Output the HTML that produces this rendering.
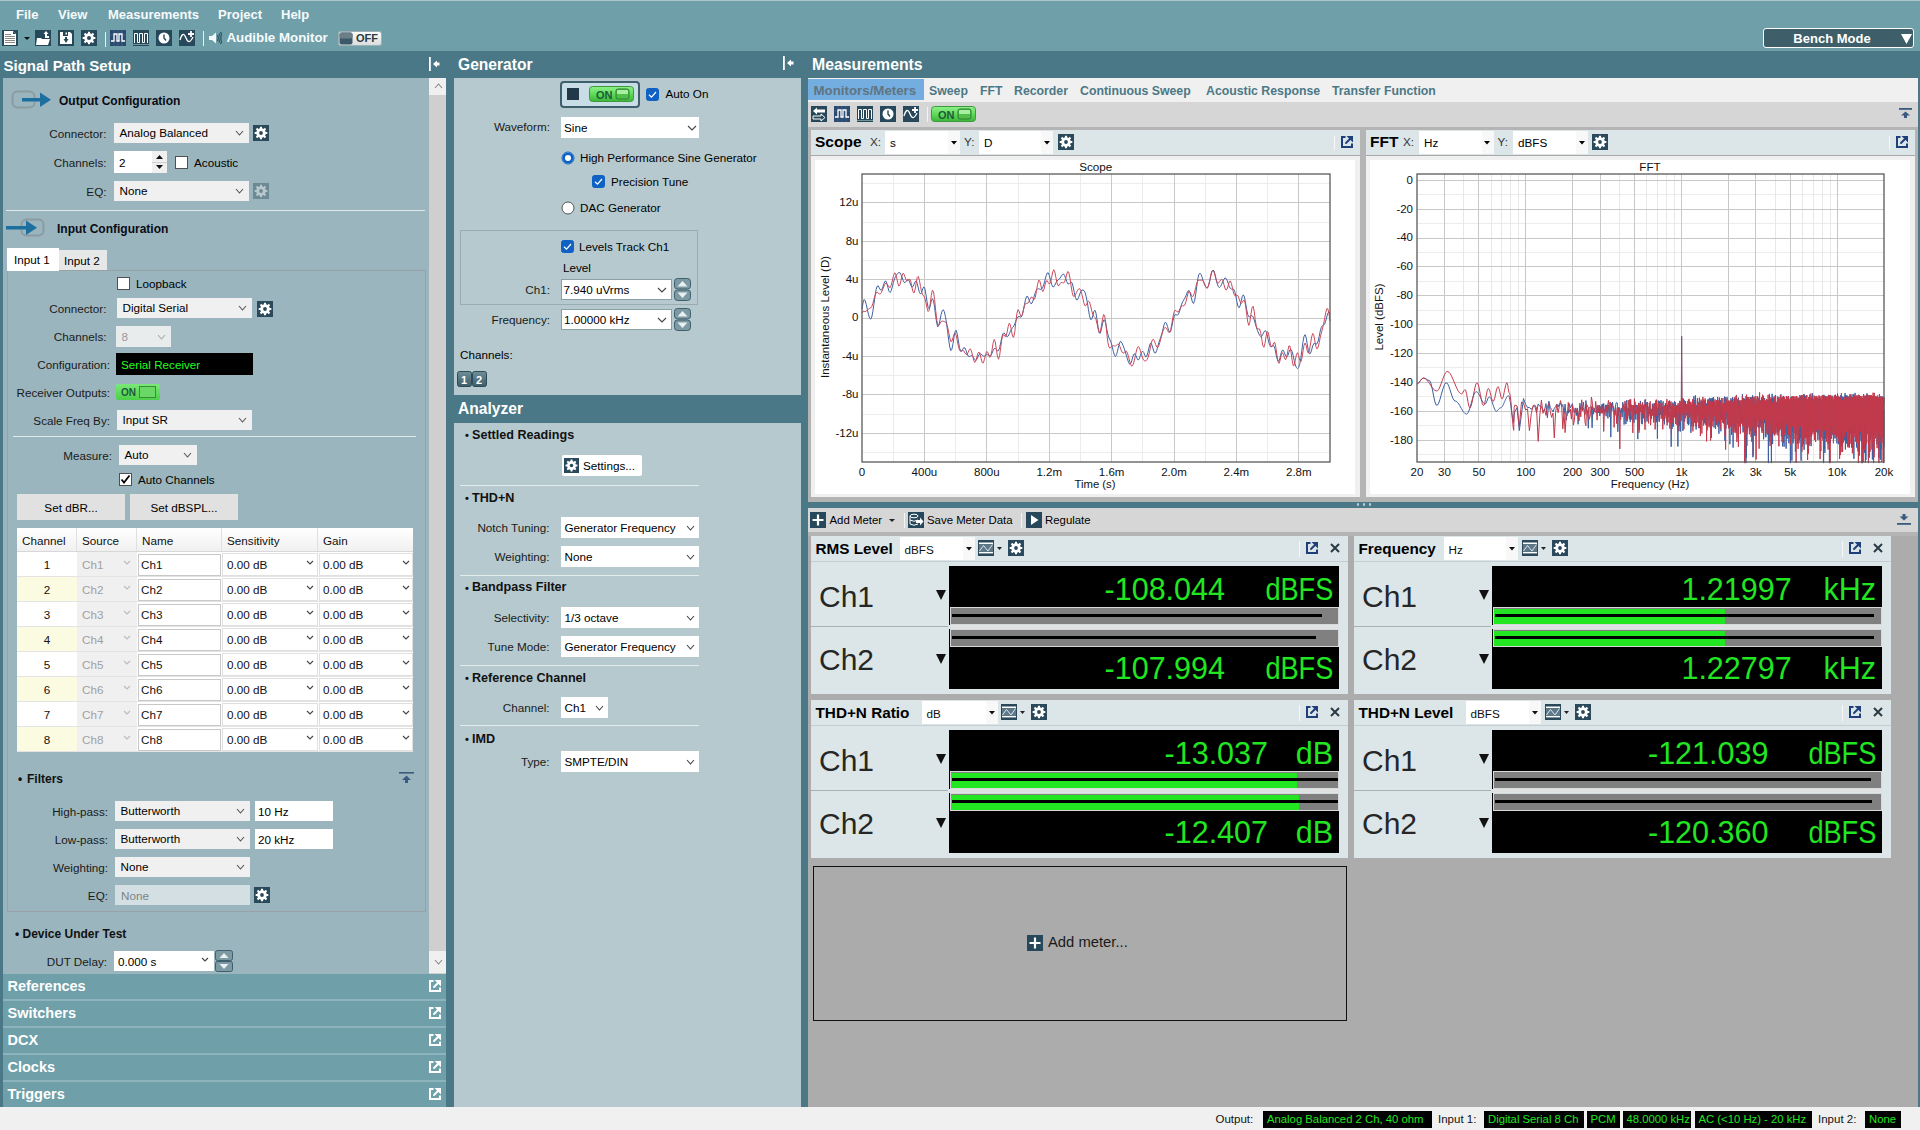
<!DOCTYPE html>
<html><head><meta charset="utf-8"><style>
html,body{margin:0;padding:0;}
body{width:1920px;height:1130px;overflow:hidden;position:relative;background:#f0f0f0;font-family:"Liberation Sans",sans-serif;}
body>div{position:absolute;}
</style></head><body>
<div style="left:0px;top:0px;width:1920px;height:51px;background:#6fa0aa;"></div><div style="left:0px;top:0px;width:1920px;height:1px;background:#a9c6cc;"></div><div style="left:16px;top:7.99px;font-size:13px;line-height:13px;font-weight:700;color:#f7fafb;white-space:pre;">File</div><div style="left:58px;top:7.99px;font-size:13px;line-height:13px;font-weight:700;color:#f7fafb;white-space:pre;">View</div><div style="left:108px;top:7.99px;font-size:13px;line-height:13px;font-weight:700;color:#f7fafb;white-space:pre;">Measurements</div><div style="left:218px;top:7.99px;font-size:13px;line-height:13px;font-weight:700;color:#f7fafb;white-space:pre;">Project</div><div style="left:281px;top:7.99px;font-size:13px;line-height:13px;font-weight:700;color:#f7fafb;white-space:pre;">Help</div><svg style="position:absolute;left:2px;top:30px;" width="16" height="16" viewBox="0 0 16 16"><rect width="16" height="16" fill="#26485a"/><path d="M2,1 H11 L14,4 V15 H2 Z" fill="#fff"/><path d="M11,1 V4 H14" fill="#26485a"/><path d="M3,4.5 H9 M3,6.5 H13 M3,8.5 H13 M3,10.5 H13 M3,12.5 H13" stroke="#8a8a8a" stroke-width="1"/></svg><svg style="position:absolute;left:24px;top:37px;" width="6" height="3" viewBox="0 0 6 3"><polygon points="0,0 6,0 3.0,3" fill="#111"/></svg><svg style="position:absolute;left:35px;top:30px;" width="16" height="16" viewBox="0 0 16 16"><rect width="16" height="16" fill="#26485a"/><path d="M1,15 L2,8 H6 L7,9 H15 L13,15 Z" fill="#fff"/><path d="M11,1 L8.5,4 H10 V8 H12 V4 H13.5 Z" fill="#fff"/><rect x="12" y="6" width="2" height="2" fill="#fff"/></svg><svg style="position:absolute;left:58px;top:30px;" width="16" height="16" viewBox="0 0 16 16"><rect width="16" height="16" fill="#26485a"/><path d="M2,2 H12 L14,4 V14 H2 Z" fill="#fff"/><rect x="5" y="2" width="5" height="4" fill="#26485a"/><rect x="7.5" y="2.5" width="1.5" height="2" fill="#fff"/><path d="M5.5,9 H10.5 L8,13 Z" fill="#26485a"/><rect x="7" y="7" width="2" height="3" fill="#26485a"/></svg><svg style="position:absolute;left:81px;top:30px;" width="16" height="16" viewBox="0 0 16 16"><rect width="16" height="16" fill="#26485a"/><path d="M12.67,6.88 L14.33,7.05 L14.33,8.95 L12.67,9.12 L12.09,10.51 L13.15,11.80 L11.80,13.15 L10.51,12.09 L9.12,12.67 L8.95,14.33 L7.05,14.33 L6.88,12.67 L5.49,12.09 L4.20,13.15 L2.85,11.80 L3.91,10.51 L3.33,9.12 L1.67,8.95 L1.67,7.05 L3.33,6.88 L3.91,5.49 L2.85,4.20 L4.20,2.85 L5.49,3.91 L6.88,3.33 L7.05,1.67 L8.95,1.67 L9.12,3.33 L10.51,3.91 L11.80,2.85 L13.15,4.20 L12.09,5.49Z" fill="#fff"/><circle cx="8" cy="8" r="2" fill="#26485a"/></svg><div style="left:105px;top:32px;width:1px;height:15px;background:#e8f0f2;"></div><svg style="position:absolute;left:110px;top:30px;" width="16" height="16" viewBox="0 0 16 16"><rect width="16" height="16" fill="#2a4a70"/><path d="M4,0 V16 M8,0 V16 M12,0 V16 M0,5 H16 M0,11 H16" stroke="#4a6a90" stroke-width="0.6"/><polyline points="1,11 4,11 4,4 7,4 7,11 9,11 9,4 12,4 12,11 15,11" fill="none" stroke="#fff" stroke-width="1.3"/></svg><svg style="position:absolute;left:133px;top:30px;" width="16" height="16" viewBox="0 0 16 16"><rect width="16" height="16" fill="#26485a"/><path d="M1.5,13 V3.5 H4.5 V12.5 H6.5 V3.5 H9.5 V12.5 H11.5 V3.5 H14.5 V13" fill="none" stroke="#fff" stroke-width="1"/><path d="M0,14.5 H16" stroke="#8aa" stroke-width="0.8"/></svg><svg style="position:absolute;left:156px;top:30px;" width="16" height="16" viewBox="0 0 16 16"><rect width="16" height="16" fill="#26485a"/><circle cx="8" cy="8" r="5.5" fill="#fff"/><path d="M8,4.5 V8 L10,10.5" fill="none" stroke="#26485a" stroke-width="1.4"/></svg><svg style="position:absolute;left:179px;top:30px;" width="16" height="16" viewBox="0 0 16 16"><rect width="16" height="16" fill="#26485a"/><path d="M1,10 C3,3 5,3 7,8 C9,13 11,13 14,7" fill="none" stroke="#fff" stroke-width="1.3"/><path d="M12,1 V7 M9,4 H15" stroke="#fff" stroke-width="1.8"/></svg><div style="left:203px;top:31px;width:1px;height:15px;background:#e8f0f2;"></div><svg style="position:absolute;left:208px;top:31px;" width="14" height="14" viewBox="0 0 14 14"><path d="M1,5 H4 L8,1.5 V12.5 L4,9 H1 Z" fill="#f4f8f8"/><path d="M9.5,4 Q11,7 9.5,10 M11,2.5 Q13.5,7 11,11.5 M12.5,1 Q16,7 12.5,13" fill="none" stroke="#2e4f5c" stroke-width="1.2"/></svg><div style="left:226.5px;top:31.43px;font-size:13.3px;line-height:13.3px;font-weight:700;color:#f7fafb;white-space:pre;">Audible Monitor</div><svg style="position:absolute;left:338px;top:31px;" width="44" height="15" viewBox="0 0 44 15"><defs><linearGradient id="offg" x1="0" y1="0" x2="0" y2="1"><stop offset="0" stop-color="#fdfdfd"/><stop offset="1" stop-color="#d8dcdc"/></linearGradient></defs><rect x="0.5" y="0.5" width="43" height="14" rx="2.5" fill="url(#offg)" stroke="#9fb0b4"/><rect x="1.5" y="1.5" width="13" height="12" rx="2" fill="#3a5a6c"/><rect x="1.5" y="1.5" width="13" height="6" rx="2" fill="#6b7f88"/></svg><div style="left:356px;top:33.18px;font-size:11px;line-height:11px;font-weight:700;color:#2a3a40;white-space:pre;">OFF</div><div style="left:1763px;top:28px;width:151px;height:20px;background:#3e5f69;box-sizing:border-box;border:1px solid #fff;border-radius:3px;"></div><div style="left:832px;width:2000px;text-align:center;top:31.99px;font-size:13px;line-height:13px;font-weight:700;color:#fff;white-space:pre;">Bench Mode</div><svg style="position:absolute;left:1900.5px;top:34px;" width="11" height="10" viewBox="0 0 11 10"><polygon points="0,0 11,0 5.5,10" fill="#fff"/></svg><div style="left:0px;top:51px;width:1920px;height:27px;background:#4b7886;"></div><div style="left:3.5px;top:58.30px;font-size:15px;line-height:15px;font-weight:700;color:#fff;white-space:pre;">Signal Path Setup</div><div style="left:458px;top:56.79px;font-size:15.6px;line-height:15.6px;font-weight:700;color:#fff;white-space:pre;">Generator</div><div style="left:812px;top:56.62px;font-size:15.8px;line-height:15.8px;font-weight:700;color:#fff;white-space:pre;">Measurements</div><svg style="position:absolute;left:429px;top:57px;" width="11" height="14" viewBox="0 0 11 14"><rect x="0" y="0" width="1.8" height="14" fill="#fff"/><polygon points="4,7 8,3.5 8,5.5 10.5,5.5 10.5,8.5 8,8.5 8,10.5" fill="#fff"/></svg><svg style="position:absolute;left:783px;top:56px;" width="11" height="14" viewBox="0 0 11 14"><rect x="0" y="0" width="1.8" height="14" fill="#fff"/><polygon points="4,7 8,3.5 8,5.5 10.5,5.5 10.5,8.5 8,8.5 8,10.5" fill="#fff"/></svg><div style="left:0px;top:78px;width:3px;height:1029px;background:#4b7886;"></div><div style="left:3px;top:78px;width:426px;height:896px;background:#9ab5bd;"></div><div style="left:446px;top:51px;width:8px;height:1056px;background:#4b7886;"></div><div style="left:429px;top:78px;width:17px;height:896px;background:#cfcfcf;"></div><div style="left:429px;top:78px;width:17px;height:17px;background:#f0f0f0;"></div><div style="left:429px;top:951px;width:17px;height:22px;background:#f0f0f0;"></div><svg style="position:absolute;left:434px;top:83px;" width="9" height="6" viewBox="0 0 9 6"><polyline points="1,5 4.5,1 8,5" fill="none" stroke="#888" stroke-width="1.1"/></svg><svg style="position:absolute;left:434px;top:959px;" width="9" height="6" viewBox="0 0 9 6"><polyline points="1,1 4.5,5 8,1" fill="none" stroke="#888" stroke-width="1.1"/></svg><div style="left:3px;top:974px;width:443px;height:25px;background:#6fa0aa;"></div><div style="left:7.5px;top:979.22px;font-size:14.5px;line-height:14.5px;font-weight:700;color:#fff;white-space:pre;">References</div><svg style="position:absolute;left:429px;top:980px;" width="12" height="12" viewBox="0 0 12 12"><path d="M4.5,1 H1 V11 H11 V7.5" fill="none" stroke="#fff" stroke-width="2"/><path d="M5,7 L9,3" stroke="#fff" stroke-width="1.9" stroke-linecap="round"/><polygon points="5.5,0 12,0 12,6.5" fill="#fff"/></svg><div style="left:3px;top:1001px;width:443px;height:25px;background:#6fa0aa;"></div><div style="left:3px;top:999px;width:443px;height:2px;background:#8db4bc;"></div><div style="left:7.5px;top:1006.22px;font-size:14.5px;line-height:14.5px;font-weight:700;color:#fff;white-space:pre;">Switchers</div><svg style="position:absolute;left:429px;top:1007px;" width="12" height="12" viewBox="0 0 12 12"><path d="M4.5,1 H1 V11 H11 V7.5" fill="none" stroke="#fff" stroke-width="2"/><path d="M5,7 L9,3" stroke="#fff" stroke-width="1.9" stroke-linecap="round"/><polygon points="5.5,0 12,0 12,6.5" fill="#fff"/></svg><div style="left:3px;top:1028px;width:443px;height:25px;background:#6fa0aa;"></div><div style="left:3px;top:1026px;width:443px;height:2px;background:#8db4bc;"></div><div style="left:7.5px;top:1033.22px;font-size:14.5px;line-height:14.5px;font-weight:700;color:#fff;white-space:pre;">DCX</div><svg style="position:absolute;left:429px;top:1034px;" width="12" height="12" viewBox="0 0 12 12"><path d="M4.5,1 H1 V11 H11 V7.5" fill="none" stroke="#fff" stroke-width="2"/><path d="M5,7 L9,3" stroke="#fff" stroke-width="1.9" stroke-linecap="round"/><polygon points="5.5,0 12,0 12,6.5" fill="#fff"/></svg><div style="left:3px;top:1055px;width:443px;height:25px;background:#6fa0aa;"></div><div style="left:3px;top:1053px;width:443px;height:2px;background:#8db4bc;"></div><div style="left:7.5px;top:1060.22px;font-size:14.5px;line-height:14.5px;font-weight:700;color:#fff;white-space:pre;">Clocks</div><svg style="position:absolute;left:429px;top:1061px;" width="12" height="12" viewBox="0 0 12 12"><path d="M4.5,1 H1 V11 H11 V7.5" fill="none" stroke="#fff" stroke-width="2"/><path d="M5,7 L9,3" stroke="#fff" stroke-width="1.9" stroke-linecap="round"/><polygon points="5.5,0 12,0 12,6.5" fill="#fff"/></svg><div style="left:3px;top:1082px;width:443px;height:25px;background:#6fa0aa;"></div><div style="left:3px;top:1080px;width:443px;height:2px;background:#8db4bc;"></div><div style="left:7.5px;top:1087.22px;font-size:14.5px;line-height:14.5px;font-weight:700;color:#fff;white-space:pre;">Triggers</div><svg style="position:absolute;left:429px;top:1088px;" width="12" height="12" viewBox="0 0 12 12"><path d="M4.5,1 H1 V11 H11 V7.5" fill="none" stroke="#fff" stroke-width="2"/><path d="M5,7 L9,3" stroke="#fff" stroke-width="1.9" stroke-linecap="round"/><polygon points="5.5,0 12,0 12,6.5" fill="#fff"/></svg><div style="left:454px;top:78px;width:347px;height:317px;background:#b5c9ce;"></div><div style="left:454px;top:395px;width:347px;height:28px;background:#4b7886;"></div><div style="left:458px;top:401.49px;font-size:15.6px;line-height:15.6px;font-weight:700;color:#fff;white-space:pre;">Analyzer</div><div style="left:454px;top:423px;width:347px;height:684px;background:#b5c9ce;"></div><div style="left:801px;top:51px;width:7px;height:1056px;background:#4b7886;"></div><div style="left:1918px;top:51px;width:2px;height:1056px;background:#4b7886;"></div><div style="left:0px;top:1107px;width:1920px;height:23px;background:#f0f0f0;"></div><svg style="position:absolute;left:11px;top:90px;" width="41" height="19" viewBox="0 0 41 19"><rect x="1.5" y="1.5" width="22" height="16" rx="5" fill="none" stroke="#8a9ca2" stroke-width="2"/><rect x="11" y="8" width="20" height="3.5" fill="#1d6fa0"/><polygon points="29,2.5 40,9.75 29,17" fill="#1d6fa0"/></svg><div style="left:59px;top:94.84px;font-size:12px;line-height:12px;font-weight:700;color:#0a0a14;white-space:pre;">Output Configuration</div><div style="left:-893.5px;width:1000px;text-align:right;top:127.59px;font-size:11.7px;line-height:11.7px;font-weight:400;color:#1a1a1a;white-space:pre;">Connector:</div><div style="left:114px;top:123px;width:135px;height:20px;background:#f0f0f0;"></div><div style="left:119.5px;top:127.39px;font-size:11.7px;line-height:11.7px;font-weight:400;color:#000;white-space:pre;">Analog Balanced</div><svg style="position:absolute;left:235px;top:130.0px;" width="9" height="6" viewBox="0 0 9 6"><polyline points="1,1 4.5,5 8,1" fill="none" stroke="#555" stroke-width="1.1"/></svg><svg style="position:absolute;left:253px;top:125px;" width="16" height="16" viewBox="0 0 16 16"><rect width="16" height="16" fill="#2a4a5c"/><path d="M12.67,6.88 L14.33,7.05 L14.33,8.95 L12.67,9.12 L12.09,10.51 L13.15,11.80 L11.80,13.15 L10.51,12.09 L9.12,12.67 L8.95,14.33 L7.05,14.33 L6.88,12.67 L5.49,12.09 L4.20,13.15 L2.85,11.80 L3.91,10.51 L3.33,9.12 L1.67,8.95 L1.67,7.05 L3.33,6.88 L3.91,5.49 L2.85,4.20 L4.20,2.85 L5.49,3.91 L6.88,3.33 L7.05,1.67 L8.95,1.67 L9.12,3.33 L10.51,3.91 L11.80,2.85 L13.15,4.20 L12.09,5.49Z" fill="#fff"/><circle cx="8" cy="8" r="1.9" fill="#2a4a5c"/></svg><div style="left:-893.5px;width:1000px;text-align:right;top:156.59px;font-size:11.7px;line-height:11.7px;font-weight:400;color:#1a1a1a;white-space:pre;">Channels:</div><div style="left:114px;top:151px;width:38px;height:22px;background:#fff;"></div><div style="left:119px;top:156.59px;font-size:11.7px;line-height:11.7px;font-weight:400;color:#000;white-space:pre;">2</div><div style="left:152px;top:151px;width:15px;height:22px;background:#f0f0f0;"></div><div style="left:152px;top:161.5px;width:15px;height:1px;background:#d0d0d0;"></div><svg style="position:absolute;left:156px;top:155px;" width="7" height="4" viewBox="0 0 7 4"><polygon points="0,4 7,4 3.5,0" fill="#111"/></svg><svg style="position:absolute;left:156px;top:165px;" width="7" height="4" viewBox="0 0 7 4"><polygon points="0,0 7,0 3.5,4" fill="#111"/></svg><svg style="position:absolute;left:175px;top:156px;" width="13" height="13" viewBox="0 0 13 13"><rect x="0.5" y="0.5" width="12" height="12" fill="#fff" stroke="#505050" stroke-width="1"/></svg><div style="left:194px;top:156.59px;font-size:11.7px;line-height:11.7px;font-weight:400;color:#000;white-space:pre;">Acoustic</div><div style="left:-893.5px;width:1000px;text-align:right;top:185.59px;font-size:11.7px;line-height:11.7px;font-weight:400;color:#1a1a1a;white-space:pre;">EQ:</div><div style="left:114px;top:181px;width:135px;height:20px;background:#f0f0f0;"></div><div style="left:119.5px;top:185.39px;font-size:11.7px;line-height:11.7px;font-weight:400;color:#000;white-space:pre;">None</div><svg style="position:absolute;left:235px;top:188.0px;" width="9" height="6" viewBox="0 0 9 6"><polyline points="1,1 4.5,5 8,1" fill="none" stroke="#555" stroke-width="1.1"/></svg><svg style="position:absolute;left:253px;top:183px;" width="16" height="16" viewBox="0 0 16 16"><rect width="16" height="16" fill="#6b8a94"/><path d="M12.67,6.88 L14.33,7.05 L14.33,8.95 L12.67,9.12 L12.09,10.51 L13.15,11.80 L11.80,13.15 L10.51,12.09 L9.12,12.67 L8.95,14.33 L7.05,14.33 L6.88,12.67 L5.49,12.09 L4.20,13.15 L2.85,11.80 L3.91,10.51 L3.33,9.12 L1.67,8.95 L1.67,7.05 L3.33,6.88 L3.91,5.49 L2.85,4.20 L4.20,2.85 L5.49,3.91 L6.88,3.33 L7.05,1.67 L8.95,1.67 L9.12,3.33 L10.51,3.91 L11.80,2.85 L13.15,4.20 L12.09,5.49Z" fill="#b8c8cc"/><circle cx="8" cy="8" r="1.9" fill="#6b8a94"/></svg><div style="left:6px;top:210px;width:419px;height:1px;background:#dfe8ea;"></div><svg style="position:absolute;left:6px;top:218px;" width="40" height="19" viewBox="0 0 40 19"><rect x="15.5" y="1.5" width="22" height="16" rx="5" fill="none" stroke="#8a9ca2" stroke-width="2"/><rect x="0" y="8" width="22" height="3.5" fill="#1d6fa0"/><polygon points="20,2.5 31,9.75 20,17" fill="#1d6fa0"/></svg><div style="left:57px;top:222.84px;font-size:12px;line-height:12px;font-weight:700;color:#0a0a14;white-space:pre;">Input Configuration</div><div style="left:7px;top:269.5px;width:418.5px;height:642.5px;box-sizing:border-box;border:1.5px solid #98a2a6;"></div><div style="left:7px;top:248px;width:52px;height:23px;background:#fff;"></div><div style="left:14px;top:254.09px;font-size:11.7px;line-height:11.7px;font-weight:400;color:#000;white-space:pre;">Input 1</div><div style="left:59px;top:250px;width:48px;height:20px;background:#e6e8e8;"></div><div style="left:64px;top:254.59px;font-size:11.7px;line-height:11.7px;font-weight:400;color:#000;white-space:pre;">Input 2</div><svg style="position:absolute;left:117px;top:277px;" width="13" height="13" viewBox="0 0 13 13"><rect x="0.5" y="0.5" width="12" height="12" fill="#fff" stroke="#505050" stroke-width="1"/></svg><div style="left:136px;top:278.09px;font-size:11.7px;line-height:11.7px;font-weight:400;color:#000;white-space:pre;">Loopback</div><div style="left:-893.5px;width:1000px;text-align:right;top:302.59px;font-size:11.7px;line-height:11.7px;font-weight:400;color:#1a1a1a;white-space:pre;">Connector:</div><div style="left:117px;top:298px;width:135px;height:20px;background:#f0f0f0;"></div><div style="left:122.5px;top:302.39px;font-size:11.7px;line-height:11.7px;font-weight:400;color:#000;white-space:pre;">Digital Serial</div><svg style="position:absolute;left:238px;top:305.0px;" width="9" height="6" viewBox="0 0 9 6"><polyline points="1,1 4.5,5 8,1" fill="none" stroke="#555" stroke-width="1.1"/></svg><svg style="position:absolute;left:257px;top:301px;" width="16" height="16" viewBox="0 0 16 16"><rect width="16" height="16" fill="#2a4a5c"/><path d="M12.67,6.88 L14.33,7.05 L14.33,8.95 L12.67,9.12 L12.09,10.51 L13.15,11.80 L11.80,13.15 L10.51,12.09 L9.12,12.67 L8.95,14.33 L7.05,14.33 L6.88,12.67 L5.49,12.09 L4.20,13.15 L2.85,11.80 L3.91,10.51 L3.33,9.12 L1.67,8.95 L1.67,7.05 L3.33,6.88 L3.91,5.49 L2.85,4.20 L4.20,2.85 L5.49,3.91 L6.88,3.33 L7.05,1.67 L8.95,1.67 L9.12,3.33 L10.51,3.91 L11.80,2.85 L13.15,4.20 L12.09,5.49Z" fill="#fff"/><circle cx="8" cy="8" r="1.9" fill="#2a4a5c"/></svg><div style="left:-893.5px;width:1000px;text-align:right;top:330.59px;font-size:11.7px;line-height:11.7px;font-weight:400;color:#1a1a1a;white-space:pre;">Channels:</div><div style="left:116px;top:326px;width:55px;height:21px;background:#e9ecec;"></div><div style="left:121.5px;top:330.89px;font-size:11.7px;line-height:11.7px;font-weight:400;color:#999;white-space:pre;">8</div><svg style="position:absolute;left:157px;top:333.5px;" width="9" height="6" viewBox="0 0 9 6"><polyline points="1,1 4.5,5 8,1" fill="none" stroke="#aaa" stroke-width="1.1"/></svg><div style="left:-890px;width:1000px;text-align:right;top:358.59px;font-size:11.7px;line-height:11.7px;font-weight:400;color:#1a1a1a;white-space:pre;">Configuration:</div><div style="left:116px;top:353px;width:137px;height:22px;background:#000;"></div><div style="left:121px;top:358.59px;font-size:11.7px;line-height:11.7px;font-weight:400;color:#20ff20;white-space:pre;">Serial Receiver</div><div style="left:-890px;width:1000px;text-align:right;top:386.59px;font-size:11.7px;line-height:11.7px;font-weight:400;color:#1a1a1a;white-space:pre;">Receiver Outputs:</div><svg style="position:absolute;left:116px;top:384px;" width="44" height="16" viewBox="0 0 44 16"><defs><linearGradient id="rog" x1="0" y1="0" x2="0" y2="1"><stop offset="0" stop-color="#7ae878"/><stop offset="1" stop-color="#4ccf48"/></linearGradient></defs><rect width="44" height="16" rx="2" fill="url(#rog)"/><rect x="23.5" y="2.5" width="16" height="11" fill="#6ad866" stroke="#3a8a3a"/></svg><div style="left:121px;top:387.53px;font-size:10px;line-height:10px;font-weight:700;color:#1e5a3a;white-space:pre;">ON</div><div style="left:-890px;width:1000px;text-align:right;top:414.59px;font-size:11.7px;line-height:11.7px;font-weight:400;color:#1a1a1a;white-space:pre;">Scale Freq By:</div><div style="left:117px;top:410px;width:135px;height:20px;background:#f0f0f0;"></div><div style="left:122.5px;top:414.39px;font-size:11.7px;line-height:11.7px;font-weight:400;color:#000;white-space:pre;">Input SR</div><svg style="position:absolute;left:238px;top:417.0px;" width="9" height="6" viewBox="0 0 9 6"><polyline points="1,1 4.5,5 8,1" fill="none" stroke="#555" stroke-width="1.1"/></svg><div style="left:13px;top:436px;width:403px;height:1px;background:#dfe8ea;"></div><div style="left:-888px;width:1000px;text-align:right;top:449.59px;font-size:11.7px;line-height:11.7px;font-weight:400;color:#1a1a1a;white-space:pre;">Measure:</div><div style="left:119px;top:445px;width:78px;height:20px;background:#f0f0f0;"></div><div style="left:124.5px;top:449.39px;font-size:11.7px;line-height:11.7px;font-weight:400;color:#000;white-space:pre;">Auto</div><svg style="position:absolute;left:183px;top:452.0px;" width="9" height="6" viewBox="0 0 9 6"><polyline points="1,1 4.5,5 8,1" fill="none" stroke="#555" stroke-width="1.1"/></svg><svg style="position:absolute;left:119px;top:473px;" width="13" height="13" viewBox="0 0 13 13"><rect x="0.5" y="0.5" width="12" height="12" fill="#fff" stroke="#505050" stroke-width="1"/><polyline points="2.5,6.5 5,9.5 10.5,2.5" fill="none" stroke="#000" stroke-width="1.8"/></svg><div style="left:138px;top:474.09px;font-size:11.7px;line-height:11.7px;font-weight:400;color:#000;white-space:pre;">Auto Channels</div><div style="left:17px;top:494px;width:108px;height:26px;background:#e1e1e1;"></div><div style="left:-929px;width:2000px;text-align:center;top:501.59px;font-size:11.7px;line-height:11.7px;font-weight:400;color:#000;white-space:pre;">Set dBR...</div><div style="left:130px;top:494px;width:108px;height:26px;background:#e1e1e1;"></div><div style="left:-816px;width:2000px;text-align:center;top:501.59px;font-size:11.7px;line-height:11.7px;font-weight:400;color:#000;white-space:pre;">Set dBSPL...</div><div style="left:17px;top:528px;width:396px;height:224px;background:#fff;"></div><div style="left:17px;top:528px;width:396px;height:23px;background:linear-gradient(#ffffff,#f0f0f0);"></div><div style="left:22px;top:534.59px;font-size:11.7px;line-height:11.7px;font-weight:400;color:#111;white-space:pre;">Channel</div><div style="left:82px;top:534.59px;font-size:11.7px;line-height:11.7px;font-weight:400;color:#111;white-space:pre;">Source</div><div style="left:76px;top:528px;width:1px;height:23px;background:#e0e0e0;"></div><div style="left:142px;top:534.59px;font-size:11.7px;line-height:11.7px;font-weight:400;color:#111;white-space:pre;">Name</div><div style="left:136px;top:528px;width:1px;height:23px;background:#e0e0e0;"></div><div style="left:227px;top:534.59px;font-size:11.7px;line-height:11.7px;font-weight:400;color:#111;white-space:pre;">Sensitivity</div><div style="left:221px;top:528px;width:1px;height:23px;background:#e0e0e0;"></div><div style="left:323px;top:534.59px;font-size:11.7px;line-height:11.7px;font-weight:400;color:#111;white-space:pre;">Gain</div><div style="left:317px;top:528px;width:1px;height:23px;background:#e0e0e0;"></div><div style="left:17px;top:551px;width:396px;height:1px;background:#d8d8d8;"></div><div style="left:17px;top:552px;width:60px;height:24px;background:#fff;"></div><div style="left:-953px;width:2000px;text-align:center;top:559.09px;font-size:11.7px;line-height:11.7px;font-weight:400;color:#111;white-space:pre;">1</div><div style="left:77px;top:552px;width:60px;height:24px;background:#f0f0f0;"></div><div style="left:82px;top:559.09px;font-size:11.7px;line-height:11.7px;font-weight:400;color:#a0a0a0;white-space:pre;">Ch1</div><svg style="position:absolute;left:123px;top:560px;" width="8" height="5" viewBox="0 0 8 5"><polyline points="1,1 4.0,4 7,1" fill="none" stroke="#bbb" stroke-width="1.1"/></svg><div style="left:138px;top:554px;width:83px;height:22px;background:#fff;box-sizing:border-box;border:1px solid #c8c8c8;"></div><div style="left:141px;top:559.09px;font-size:11.7px;line-height:11.7px;font-weight:400;color:#111;white-space:pre;">Ch1</div><div style="left:222px;top:553px;width:96px;height:23px;background:#fff;box-sizing:border-box;border:1px solid #e0e0e0;"></div><div style="left:227px;top:559.09px;font-size:11.7px;line-height:11.7px;font-weight:400;color:#111;white-space:pre;">0.00 dB</div><svg style="position:absolute;left:306px;top:560px;" width="8" height="5" viewBox="0 0 8 5"><polyline points="1,1 4.0,4 7,1" fill="none" stroke="#444" stroke-width="1.1"/></svg><div style="left:319px;top:553px;width:94px;height:23px;background:#fff;box-sizing:border-box;border:1px solid #e0e0e0;"></div><div style="left:323px;top:559.09px;font-size:11.7px;line-height:11.7px;font-weight:400;color:#111;white-space:pre;">0.00 dB</div><svg style="position:absolute;left:402px;top:560px;" width="8" height="5" viewBox="0 0 8 5"><polyline points="1,1 4.0,4 7,1" fill="none" stroke="#444" stroke-width="1.1"/></svg><div style="left:17px;top:576px;width:396px;height:1px;background:#e4e4e4;"></div><div style="left:17px;top:577px;width:60px;height:24px;background:#fbfbe2;"></div><div style="left:-953px;width:2000px;text-align:center;top:584.09px;font-size:11.7px;line-height:11.7px;font-weight:400;color:#111;white-space:pre;">2</div><div style="left:77px;top:577px;width:60px;height:24px;background:#f0f0f0;"></div><div style="left:82px;top:584.09px;font-size:11.7px;line-height:11.7px;font-weight:400;color:#a0a0a0;white-space:pre;">Ch2</div><svg style="position:absolute;left:123px;top:585px;" width="8" height="5" viewBox="0 0 8 5"><polyline points="1,1 4.0,4 7,1" fill="none" stroke="#bbb" stroke-width="1.1"/></svg><div style="left:138px;top:579px;width:83px;height:22px;background:#fff;box-sizing:border-box;border:1px solid #c8c8c8;"></div><div style="left:141px;top:584.09px;font-size:11.7px;line-height:11.7px;font-weight:400;color:#111;white-space:pre;">Ch2</div><div style="left:222px;top:578px;width:96px;height:23px;background:#fff;box-sizing:border-box;border:1px solid #e0e0e0;"></div><div style="left:227px;top:584.09px;font-size:11.7px;line-height:11.7px;font-weight:400;color:#111;white-space:pre;">0.00 dB</div><svg style="position:absolute;left:306px;top:585px;" width="8" height="5" viewBox="0 0 8 5"><polyline points="1,1 4.0,4 7,1" fill="none" stroke="#444" stroke-width="1.1"/></svg><div style="left:319px;top:578px;width:94px;height:23px;background:#fff;box-sizing:border-box;border:1px solid #e0e0e0;"></div><div style="left:323px;top:584.09px;font-size:11.7px;line-height:11.7px;font-weight:400;color:#111;white-space:pre;">0.00 dB</div><svg style="position:absolute;left:402px;top:585px;" width="8" height="5" viewBox="0 0 8 5"><polyline points="1,1 4.0,4 7,1" fill="none" stroke="#444" stroke-width="1.1"/></svg><div style="left:17px;top:601px;width:396px;height:1px;background:#e4e4e4;"></div><div style="left:17px;top:602px;width:60px;height:24px;background:#fff;"></div><div style="left:-953px;width:2000px;text-align:center;top:609.09px;font-size:11.7px;line-height:11.7px;font-weight:400;color:#111;white-space:pre;">3</div><div style="left:77px;top:602px;width:60px;height:24px;background:#f0f0f0;"></div><div style="left:82px;top:609.09px;font-size:11.7px;line-height:11.7px;font-weight:400;color:#a0a0a0;white-space:pre;">Ch3</div><svg style="position:absolute;left:123px;top:610px;" width="8" height="5" viewBox="0 0 8 5"><polyline points="1,1 4.0,4 7,1" fill="none" stroke="#bbb" stroke-width="1.1"/></svg><div style="left:138px;top:604px;width:83px;height:22px;background:#fff;box-sizing:border-box;border:1px solid #c8c8c8;"></div><div style="left:141px;top:609.09px;font-size:11.7px;line-height:11.7px;font-weight:400;color:#111;white-space:pre;">Ch3</div><div style="left:222px;top:603px;width:96px;height:23px;background:#fff;box-sizing:border-box;border:1px solid #e0e0e0;"></div><div style="left:227px;top:609.09px;font-size:11.7px;line-height:11.7px;font-weight:400;color:#111;white-space:pre;">0.00 dB</div><svg style="position:absolute;left:306px;top:610px;" width="8" height="5" viewBox="0 0 8 5"><polyline points="1,1 4.0,4 7,1" fill="none" stroke="#444" stroke-width="1.1"/></svg><div style="left:319px;top:603px;width:94px;height:23px;background:#fff;box-sizing:border-box;border:1px solid #e0e0e0;"></div><div style="left:323px;top:609.09px;font-size:11.7px;line-height:11.7px;font-weight:400;color:#111;white-space:pre;">0.00 dB</div><svg style="position:absolute;left:402px;top:610px;" width="8" height="5" viewBox="0 0 8 5"><polyline points="1,1 4.0,4 7,1" fill="none" stroke="#444" stroke-width="1.1"/></svg><div style="left:17px;top:626px;width:396px;height:1px;background:#e4e4e4;"></div><div style="left:17px;top:627px;width:60px;height:24px;background:#fbfbe2;"></div><div style="left:-953px;width:2000px;text-align:center;top:634.09px;font-size:11.7px;line-height:11.7px;font-weight:400;color:#111;white-space:pre;">4</div><div style="left:77px;top:627px;width:60px;height:24px;background:#f0f0f0;"></div><div style="left:82px;top:634.09px;font-size:11.7px;line-height:11.7px;font-weight:400;color:#a0a0a0;white-space:pre;">Ch4</div><svg style="position:absolute;left:123px;top:635px;" width="8" height="5" viewBox="0 0 8 5"><polyline points="1,1 4.0,4 7,1" fill="none" stroke="#bbb" stroke-width="1.1"/></svg><div style="left:138px;top:629px;width:83px;height:22px;background:#fff;box-sizing:border-box;border:1px solid #c8c8c8;"></div><div style="left:141px;top:634.09px;font-size:11.7px;line-height:11.7px;font-weight:400;color:#111;white-space:pre;">Ch4</div><div style="left:222px;top:628px;width:96px;height:23px;background:#fff;box-sizing:border-box;border:1px solid #e0e0e0;"></div><div style="left:227px;top:634.09px;font-size:11.7px;line-height:11.7px;font-weight:400;color:#111;white-space:pre;">0.00 dB</div><svg style="position:absolute;left:306px;top:635px;" width="8" height="5" viewBox="0 0 8 5"><polyline points="1,1 4.0,4 7,1" fill="none" stroke="#444" stroke-width="1.1"/></svg><div style="left:319px;top:628px;width:94px;height:23px;background:#fff;box-sizing:border-box;border:1px solid #e0e0e0;"></div><div style="left:323px;top:634.09px;font-size:11.7px;line-height:11.7px;font-weight:400;color:#111;white-space:pre;">0.00 dB</div><svg style="position:absolute;left:402px;top:635px;" width="8" height="5" viewBox="0 0 8 5"><polyline points="1,1 4.0,4 7,1" fill="none" stroke="#444" stroke-width="1.1"/></svg><div style="left:17px;top:651px;width:396px;height:1px;background:#e4e4e4;"></div><div style="left:17px;top:652px;width:60px;height:24px;background:#fff;"></div><div style="left:-953px;width:2000px;text-align:center;top:659.09px;font-size:11.7px;line-height:11.7px;font-weight:400;color:#111;white-space:pre;">5</div><div style="left:77px;top:652px;width:60px;height:24px;background:#f0f0f0;"></div><div style="left:82px;top:659.09px;font-size:11.7px;line-height:11.7px;font-weight:400;color:#a0a0a0;white-space:pre;">Ch5</div><svg style="position:absolute;left:123px;top:660px;" width="8" height="5" viewBox="0 0 8 5"><polyline points="1,1 4.0,4 7,1" fill="none" stroke="#bbb" stroke-width="1.1"/></svg><div style="left:138px;top:654px;width:83px;height:22px;background:#fff;box-sizing:border-box;border:1px solid #c8c8c8;"></div><div style="left:141px;top:659.09px;font-size:11.7px;line-height:11.7px;font-weight:400;color:#111;white-space:pre;">Ch5</div><div style="left:222px;top:653px;width:96px;height:23px;background:#fff;box-sizing:border-box;border:1px solid #e0e0e0;"></div><div style="left:227px;top:659.09px;font-size:11.7px;line-height:11.7px;font-weight:400;color:#111;white-space:pre;">0.00 dB</div><svg style="position:absolute;left:306px;top:660px;" width="8" height="5" viewBox="0 0 8 5"><polyline points="1,1 4.0,4 7,1" fill="none" stroke="#444" stroke-width="1.1"/></svg><div style="left:319px;top:653px;width:94px;height:23px;background:#fff;box-sizing:border-box;border:1px solid #e0e0e0;"></div><div style="left:323px;top:659.09px;font-size:11.7px;line-height:11.7px;font-weight:400;color:#111;white-space:pre;">0.00 dB</div><svg style="position:absolute;left:402px;top:660px;" width="8" height="5" viewBox="0 0 8 5"><polyline points="1,1 4.0,4 7,1" fill="none" stroke="#444" stroke-width="1.1"/></svg><div style="left:17px;top:676px;width:396px;height:1px;background:#e4e4e4;"></div><div style="left:17px;top:677px;width:60px;height:24px;background:#fbfbe2;"></div><div style="left:-953px;width:2000px;text-align:center;top:684.09px;font-size:11.7px;line-height:11.7px;font-weight:400;color:#111;white-space:pre;">6</div><div style="left:77px;top:677px;width:60px;height:24px;background:#f0f0f0;"></div><div style="left:82px;top:684.09px;font-size:11.7px;line-height:11.7px;font-weight:400;color:#a0a0a0;white-space:pre;">Ch6</div><svg style="position:absolute;left:123px;top:685px;" width="8" height="5" viewBox="0 0 8 5"><polyline points="1,1 4.0,4 7,1" fill="none" stroke="#bbb" stroke-width="1.1"/></svg><div style="left:138px;top:679px;width:83px;height:22px;background:#fff;box-sizing:border-box;border:1px solid #c8c8c8;"></div><div style="left:141px;top:684.09px;font-size:11.7px;line-height:11.7px;font-weight:400;color:#111;white-space:pre;">Ch6</div><div style="left:222px;top:678px;width:96px;height:23px;background:#fff;box-sizing:border-box;border:1px solid #e0e0e0;"></div><div style="left:227px;top:684.09px;font-size:11.7px;line-height:11.7px;font-weight:400;color:#111;white-space:pre;">0.00 dB</div><svg style="position:absolute;left:306px;top:685px;" width="8" height="5" viewBox="0 0 8 5"><polyline points="1,1 4.0,4 7,1" fill="none" stroke="#444" stroke-width="1.1"/></svg><div style="left:319px;top:678px;width:94px;height:23px;background:#fff;box-sizing:border-box;border:1px solid #e0e0e0;"></div><div style="left:323px;top:684.09px;font-size:11.7px;line-height:11.7px;font-weight:400;color:#111;white-space:pre;">0.00 dB</div><svg style="position:absolute;left:402px;top:685px;" width="8" height="5" viewBox="0 0 8 5"><polyline points="1,1 4.0,4 7,1" fill="none" stroke="#444" stroke-width="1.1"/></svg><div style="left:17px;top:701px;width:396px;height:1px;background:#e4e4e4;"></div><div style="left:17px;top:702px;width:60px;height:24px;background:#fff;"></div><div style="left:-953px;width:2000px;text-align:center;top:709.09px;font-size:11.7px;line-height:11.7px;font-weight:400;color:#111;white-space:pre;">7</div><div style="left:77px;top:702px;width:60px;height:24px;background:#f0f0f0;"></div><div style="left:82px;top:709.09px;font-size:11.7px;line-height:11.7px;font-weight:400;color:#a0a0a0;white-space:pre;">Ch7</div><svg style="position:absolute;left:123px;top:710px;" width="8" height="5" viewBox="0 0 8 5"><polyline points="1,1 4.0,4 7,1" fill="none" stroke="#bbb" stroke-width="1.1"/></svg><div style="left:138px;top:704px;width:83px;height:22px;background:#fff;box-sizing:border-box;border:1px solid #c8c8c8;"></div><div style="left:141px;top:709.09px;font-size:11.7px;line-height:11.7px;font-weight:400;color:#111;white-space:pre;">Ch7</div><div style="left:222px;top:703px;width:96px;height:23px;background:#fff;box-sizing:border-box;border:1px solid #e0e0e0;"></div><div style="left:227px;top:709.09px;font-size:11.7px;line-height:11.7px;font-weight:400;color:#111;white-space:pre;">0.00 dB</div><svg style="position:absolute;left:306px;top:710px;" width="8" height="5" viewBox="0 0 8 5"><polyline points="1,1 4.0,4 7,1" fill="none" stroke="#444" stroke-width="1.1"/></svg><div style="left:319px;top:703px;width:94px;height:23px;background:#fff;box-sizing:border-box;border:1px solid #e0e0e0;"></div><div style="left:323px;top:709.09px;font-size:11.7px;line-height:11.7px;font-weight:400;color:#111;white-space:pre;">0.00 dB</div><svg style="position:absolute;left:402px;top:710px;" width="8" height="5" viewBox="0 0 8 5"><polyline points="1,1 4.0,4 7,1" fill="none" stroke="#444" stroke-width="1.1"/></svg><div style="left:17px;top:726px;width:396px;height:1px;background:#e4e4e4;"></div><div style="left:17px;top:727px;width:60px;height:24px;background:#fbfbe2;"></div><div style="left:-953px;width:2000px;text-align:center;top:734.09px;font-size:11.7px;line-height:11.7px;font-weight:400;color:#111;white-space:pre;">8</div><div style="left:77px;top:727px;width:60px;height:24px;background:#f0f0f0;"></div><div style="left:82px;top:734.09px;font-size:11.7px;line-height:11.7px;font-weight:400;color:#a0a0a0;white-space:pre;">Ch8</div><svg style="position:absolute;left:123px;top:735px;" width="8" height="5" viewBox="0 0 8 5"><polyline points="1,1 4.0,4 7,1" fill="none" stroke="#bbb" stroke-width="1.1"/></svg><div style="left:138px;top:729px;width:83px;height:22px;background:#fff;box-sizing:border-box;border:1px solid #c8c8c8;"></div><div style="left:141px;top:734.09px;font-size:11.7px;line-height:11.7px;font-weight:400;color:#111;white-space:pre;">Ch8</div><div style="left:222px;top:728px;width:96px;height:23px;background:#fff;box-sizing:border-box;border:1px solid #e0e0e0;"></div><div style="left:227px;top:734.09px;font-size:11.7px;line-height:11.7px;font-weight:400;color:#111;white-space:pre;">0.00 dB</div><svg style="position:absolute;left:306px;top:735px;" width="8" height="5" viewBox="0 0 8 5"><polyline points="1,1 4.0,4 7,1" fill="none" stroke="#444" stroke-width="1.1"/></svg><div style="left:319px;top:728px;width:94px;height:23px;background:#fff;box-sizing:border-box;border:1px solid #e0e0e0;"></div><div style="left:323px;top:734.09px;font-size:11.7px;line-height:11.7px;font-weight:400;color:#111;white-space:pre;">0.00 dB</div><svg style="position:absolute;left:402px;top:735px;" width="8" height="5" viewBox="0 0 8 5"><polyline points="1,1 4.0,4 7,1" fill="none" stroke="#444" stroke-width="1.1"/></svg><div style="left:17px;top:751px;width:396px;height:1px;background:#e4e4e4;"></div><div style="left:18px;top:772.84px;font-size:12px;line-height:12px;font-weight:700;color:#111;white-space:pre;">•</div><div style="left:27px;top:773.34px;font-size:12px;line-height:12px;font-weight:700;color:#111;white-space:pre;">Filters</div><svg style="position:absolute;left:399px;top:772px;" width="15" height="12" viewBox="0 0 15 12"><rect x="0" y="0" width="15" height="1.6" fill="#3a5a80"/><polygon points="7.5,3.5 12,8 9,8 9,11 6,11 6,8 3,8" fill="#3a5a80"/></svg><div style="left:-892px;width:1000px;text-align:right;top:805.59px;font-size:11.7px;line-height:11.7px;font-weight:400;color:#1a1a1a;white-space:pre;">High-pass:</div><div style="left:115px;top:801px;width:135px;height:20px;background:#f0f0f0;"></div><div style="left:120.5px;top:805.39px;font-size:11.7px;line-height:11.7px;font-weight:400;color:#000;white-space:pre;">Butterworth</div><svg style="position:absolute;left:236px;top:808.0px;" width="9" height="6" viewBox="0 0 9 6"><polyline points="1,1 4.5,5 8,1" fill="none" stroke="#555" stroke-width="1.1"/></svg><div style="left:255px;top:801px;width:78px;height:20px;background:#fff;"></div><div style="left:258px;top:805.59px;font-size:11.7px;line-height:11.7px;font-weight:400;color:#000;white-space:pre;">10 Hz</div><div style="left:-892px;width:1000px;text-align:right;top:833.59px;font-size:11.7px;line-height:11.7px;font-weight:400;color:#1a1a1a;white-space:pre;">Low-pass:</div><div style="left:115px;top:829px;width:135px;height:20px;background:#f0f0f0;"></div><div style="left:120.5px;top:833.39px;font-size:11.7px;line-height:11.7px;font-weight:400;color:#000;white-space:pre;">Butterworth</div><svg style="position:absolute;left:236px;top:836.0px;" width="9" height="6" viewBox="0 0 9 6"><polyline points="1,1 4.5,5 8,1" fill="none" stroke="#555" stroke-width="1.1"/></svg><div style="left:255px;top:829px;width:78px;height:20px;background:#fff;"></div><div style="left:258px;top:833.59px;font-size:11.7px;line-height:11.7px;font-weight:400;color:#000;white-space:pre;">20 kHz</div><div style="left:-892px;width:1000px;text-align:right;top:861.59px;font-size:11.7px;line-height:11.7px;font-weight:400;color:#1a1a1a;white-space:pre;">Weighting:</div><div style="left:115px;top:857px;width:135px;height:20px;background:#f0f0f0;"></div><div style="left:120.5px;top:861.39px;font-size:11.7px;line-height:11.7px;font-weight:400;color:#000;white-space:pre;">None</div><svg style="position:absolute;left:236px;top:864.0px;" width="9" height="6" viewBox="0 0 9 6"><polyline points="1,1 4.5,5 8,1" fill="none" stroke="#555" stroke-width="1.1"/></svg><div style="left:-892px;width:1000px;text-align:right;top:889.59px;font-size:11.7px;line-height:11.7px;font-weight:400;color:#1a1a1a;white-space:pre;">EQ:</div><div style="left:115px;top:885px;width:135px;height:20px;background:#d3dfe3;"></div><div style="left:121px;top:889.59px;font-size:11.7px;line-height:11.7px;font-weight:400;color:#7a8488;white-space:pre;">None</div><svg style="position:absolute;left:254px;top:887px;" width="16" height="16" viewBox="0 0 16 16"><rect width="16" height="16" fill="#2a4a5c"/><path d="M12.67,6.88 L14.33,7.05 L14.33,8.95 L12.67,9.12 L12.09,10.51 L13.15,11.80 L11.80,13.15 L10.51,12.09 L9.12,12.67 L8.95,14.33 L7.05,14.33 L6.88,12.67 L5.49,12.09 L4.20,13.15 L2.85,11.80 L3.91,10.51 L3.33,9.12 L1.67,8.95 L1.67,7.05 L3.33,6.88 L3.91,5.49 L2.85,4.20 L4.20,2.85 L5.49,3.91 L6.88,3.33 L7.05,1.67 L8.95,1.67 L9.12,3.33 L10.51,3.91 L11.80,2.85 L13.15,4.20 L12.09,5.49Z" fill="#fff"/><circle cx="8" cy="8" r="1.9" fill="#2a4a5c"/></svg><div style="left:15px;top:927.84px;font-size:12px;line-height:12px;font-weight:700;color:#111;white-space:pre;">•</div><div style="left:22.5px;top:928.24px;font-size:12px;line-height:12px;font-weight:700;color:#111;white-space:pre;">Device Under Test</div><div style="left:-893px;width:1000px;text-align:right;top:955.59px;font-size:11.7px;line-height:11.7px;font-weight:400;color:#1a1a1a;white-space:pre;">DUT Delay:</div><div style="left:114px;top:951px;width:100px;height:20px;background:#fff;"></div><div style="left:118px;top:955.59px;font-size:11.7px;line-height:11.7px;font-weight:400;color:#000;white-space:pre;">0.000 s</div><svg style="position:absolute;left:201px;top:957px;" width="8" height="5" viewBox="0 0 8 5"><polyline points="1,1 4.0,4 7,1" fill="none" stroke="#444" stroke-width="1.1"/></svg><svg style="position:absolute;left:215px;top:950px;" width="18" height="22" viewBox="0 0 18 22"><rect x="0.5" y="0.5" width="17" height="10" rx="2" fill="#7d9aa4" stroke="#3e5f6c"/><rect x="0.5" y="11.5" width="17" height="10" rx="2" fill="#7d9aa4" stroke="#3e5f6c"/><polygon points="4.5,8 13.5,8 9,3" fill="#e8f0f2"/><polygon points="4.5,14 13.5,14 9,19" fill="#e8f0f2"/></svg><div style="left:560px;top:81px;width:80px;height:27px;background:#c8dde6;box-sizing:border-box;border:2px solid #3f5f6c;border-radius:4px;"></div><div style="left:567px;top:88px;width:12px;height:12px;background:#203848;"></div><svg style="position:absolute;left:589px;top:86px;" width="45" height="16" viewBox="0 0 45 16"><defs><linearGradient id="g58986" x1="0" y1="0" x2="0" y2="1"><stop offset="0" stop-color="#8ef08a"/><stop offset="0.5" stop-color="#5fdc5a"/><stop offset="1" stop-color="#3cb43a"/></linearGradient></defs><rect x="0.5" y="0.5" width="44" height="15" rx="3" fill="url(#g58986)" stroke="#3d9a3c"/><text x="7" y="12.5" font-family="Liberation Sans" font-weight="700" font-size="11" fill="#1e5a3a">ON</text><rect x="27" y="3" width="13" height="10" rx="2" fill="#4fbf4a" stroke="#2e7a34"/><rect x="28" y="4" width="11" height="4.0" fill="#a8f0a0"/></svg><svg style="position:absolute;left:646px;top:88px;" width="13" height="13" viewBox="0 0 13 13"><rect x="0.5" y="0.5" width="12" height="12" rx="2" fill="#0f62c4" stroke="#0f62c4"/><polyline points="3,6.8 5.5,9.2 10,4" fill="none" stroke="#fff" stroke-width="1.2"/></svg><div style="left:665.5px;top:88.09px;font-size:11.7px;line-height:11.7px;font-weight:400;color:#000;white-space:pre;">Auto On</div><div style="left:-450px;width:1000px;text-align:right;top:121.09px;font-size:11.7px;line-height:11.7px;font-weight:400;color:#1a1a1a;white-space:pre;">Waveform:</div><div style="left:561px;top:117px;width:138px;height:21px;background:#fff;"></div><div style="left:564px;top:121.59px;font-size:11.7px;line-height:11.7px;font-weight:400;color:#000;white-space:pre;">Sine</div><svg style="position:absolute;left:687px;top:125px;" width="10" height="6" viewBox="0 0 10 6"><polyline points="1,1 5.0,5 9,1" fill="none" stroke="#444" stroke-width="1.1"/></svg><svg style="position:absolute;left:561px;top:151px;" width="14" height="14" viewBox="0 0 14 14"><circle cx="7" cy="7" r="6" fill="#fff" stroke="#0f62c4" stroke-width="1"/><circle cx="7" cy="7" r="4.3" fill="none" stroke="#0f62c4" stroke-width="2.6"/></svg><div style="left:580px;top:152.09px;font-size:11.7px;line-height:11.7px;font-weight:400;color:#000;white-space:pre;">High Performance Sine Generator</div><svg style="position:absolute;left:592px;top:175px;" width="13" height="13" viewBox="0 0 13 13"><rect x="0.5" y="0.5" width="12" height="12" rx="2" fill="#0f62c4" stroke="#0f62c4"/><polyline points="3,6.8 5.5,9.2 10,4" fill="none" stroke="#fff" stroke-width="1.2"/></svg><div style="left:611px;top:176.09px;font-size:11.7px;line-height:11.7px;font-weight:400;color:#000;white-space:pre;">Precision Tune</div><svg style="position:absolute;left:561px;top:201px;" width="14" height="14" viewBox="0 0 14 14"><circle cx="7" cy="7" r="6" fill="#fcfcfc" stroke="#555" stroke-width="1"/></svg><div style="left:580px;top:202.09px;font-size:11.7px;line-height:11.7px;font-weight:400;color:#000;white-space:pre;">DAC Generator</div><div style="left:460px;top:230px;width:238px;height:75px;box-sizing:border-box;border:1px solid #98acb2;"></div><svg style="position:absolute;left:561px;top:240px;" width="13" height="13" viewBox="0 0 13 13"><rect x="0.5" y="0.5" width="12" height="12" rx="2" fill="#0f62c4" stroke="#0f62c4"/><polyline points="3,6.8 5.5,9.2 10,4" fill="none" stroke="#fff" stroke-width="1.2"/></svg><div style="left:579px;top:241.09px;font-size:11.7px;line-height:11.7px;font-weight:400;color:#000;white-space:pre;">Levels Track Ch1</div><div style="left:563px;top:262.09px;font-size:11.7px;line-height:11.7px;font-weight:400;color:#000;white-space:pre;">Level</div><div style="left:-450px;width:1000px;text-align:right;top:283.59px;font-size:11.7px;line-height:11.7px;font-weight:400;color:#1a1a1a;white-space:pre;">Ch1:</div><div style="left:561px;top:279px;width:111px;height:21px;background:#fff;box-sizing:border-box;border:1px solid #8aa0a8;"></div><div style="left:563.5px;top:283.59px;font-size:11.7px;line-height:11.7px;font-weight:400;color:#000;white-space:pre;">7.940 uVrms</div><svg style="position:absolute;left:657px;top:287px;" width="10" height="6" viewBox="0 0 10 6"><polyline points="1,1 5.0,5 9,1" fill="none" stroke="#444" stroke-width="1.1"/></svg><svg style="position:absolute;left:674px;top:278px;" width="17" height="23" viewBox="0 0 17 23"><rect x="0.5" y="0.5" width="16" height="10.5" rx="3" fill="#7d9aa4" stroke="#3e5f6c"/><rect x="0.5" y="12" width="16" height="10.5" rx="3" fill="#7d9aa4" stroke="#3e5f6c"/><polygon points="3.5,8.5 13.5,8.5 8.5,3" fill="#e8f0f2"/><polygon points="3.5,14.5 13.5,14.5 8.5,20" fill="#e8f0f2"/></svg><div style="left:-450px;width:1000px;text-align:right;top:313.59px;font-size:11.7px;line-height:11.7px;font-weight:400;color:#1a1a1a;white-space:pre;">Frequency:</div><div style="left:561px;top:309px;width:111px;height:21px;background:#fff;box-sizing:border-box;border:1px solid #8aa0a8;"></div><div style="left:564px;top:313.59px;font-size:11.7px;line-height:11.7px;font-weight:400;color:#000;white-space:pre;">1.00000 kHz</div><svg style="position:absolute;left:657px;top:317px;" width="10" height="6" viewBox="0 0 10 6"><polyline points="1,1 5.0,5 9,1" fill="none" stroke="#444" stroke-width="1.1"/></svg><svg style="position:absolute;left:674px;top:308px;" width="17" height="23" viewBox="0 0 17 23"><rect x="0.5" y="0.5" width="16" height="10.5" rx="3" fill="#7d9aa4" stroke="#3e5f6c"/><rect x="0.5" y="12" width="16" height="10.5" rx="3" fill="#7d9aa4" stroke="#3e5f6c"/><polygon points="3.5,8.5 13.5,8.5 8.5,3" fill="#e8f0f2"/><polygon points="3.5,14.5 13.5,14.5 8.5,20" fill="#e8f0f2"/></svg><div style="left:460px;top:349.09px;font-size:11.7px;line-height:11.7px;font-weight:400;color:#000;white-space:pre;">Channels:</div><svg style="position:absolute;left:457px;top:371px;" width="30" height="16" viewBox="0 0 30 16"><defs><linearGradient id="chg" x1="0" y1="0" x2="0" y2="1"><stop offset="0" stop-color="#6f8e99"/><stop offset="1" stop-color="#3d5d6a"/></linearGradient></defs><rect x="0.5" y="0.5" width="14" height="15" rx="2" fill="url(#chg)" stroke="#2d4a56"/><rect x="15.5" y="0.5" width="14" height="15" rx="2" fill="url(#chg)" stroke="#2d4a56"/><text x="4" y="12.5" font-family="Liberation Sans" font-weight="700" font-size="11" fill="#fff">1</text><text x="19" y="12.5" font-family="Liberation Sans" font-weight="700" font-size="11" fill="#fff">2</text></svg><div style="left:465px;top:430.18px;font-size:11px;line-height:11px;font-weight:700;color:#111;white-space:pre;">•</div><div style="left:472px;top:428.83px;font-size:12.6px;line-height:12.6px;font-weight:700;color:#111;white-space:pre;">Settled Readings</div><div style="left:562px;top:455px;width:80px;height:21px;background:#fff;border-radius:2px;"></div><svg style="position:absolute;left:564px;top:458px;" width="15" height="15" viewBox="0 0 16 16"><rect width="16" height="16" fill="#2a4a5c"/><path d="M12.67,6.88 L14.33,7.05 L14.33,8.95 L12.67,9.12 L12.09,10.51 L13.15,11.80 L11.80,13.15 L10.51,12.09 L9.12,12.67 L8.95,14.33 L7.05,14.33 L6.88,12.67 L5.49,12.09 L4.20,13.15 L2.85,11.80 L3.91,10.51 L3.33,9.12 L1.67,8.95 L1.67,7.05 L3.33,6.88 L3.91,5.49 L2.85,4.20 L4.20,2.85 L5.49,3.91 L6.88,3.33 L7.05,1.67 L8.95,1.67 L9.12,3.33 L10.51,3.91 L11.80,2.85 L13.15,4.20 L12.09,5.49Z" fill="#fff"/><circle cx="8" cy="8" r="1.9" fill="#2a4a5c"/></svg><div style="left:583px;top:460.09px;font-size:11.7px;line-height:11.7px;font-weight:400;color:#000;white-space:pre;">Settings...</div><div style="left:460px;top:485px;width:239px;height:1px;background:#e4ecee;"></div><div style="left:465px;top:493.18px;font-size:11px;line-height:11px;font-weight:700;color:#111;white-space:pre;">•</div><div style="left:472px;top:491.83px;font-size:12.6px;line-height:12.6px;font-weight:700;color:#111;white-space:pre;">THD+N</div><div style="left:-450.5px;width:1000px;text-align:right;top:521.59px;font-size:11.7px;line-height:11.7px;font-weight:400;color:#1a1a1a;white-space:pre;">Notch Tuning:</div><div style="left:561px;top:517px;width:138px;height:21px;background:#fff;"></div><div style="left:564.5px;top:521.89px;font-size:11.7px;line-height:11.7px;font-weight:400;color:#000;white-space:pre;">Generator Frequency</div><svg style="position:absolute;left:686px;top:524.5px;" width="9" height="6" viewBox="0 0 9 6"><polyline points="1,1 4.5,5 8,1" fill="none" stroke="#444" stroke-width="1.1"/></svg><div style="left:-450.5px;width:1000px;text-align:right;top:551.09px;font-size:11.7px;line-height:11.7px;font-weight:400;color:#1a1a1a;white-space:pre;">Weighting:</div><div style="left:561px;top:546px;width:138px;height:21px;background:#fff;"></div><div style="left:564.5px;top:550.89px;font-size:11.7px;line-height:11.7px;font-weight:400;color:#000;white-space:pre;">None</div><svg style="position:absolute;left:686px;top:553.5px;" width="9" height="6" viewBox="0 0 9 6"><polyline points="1,1 4.5,5 8,1" fill="none" stroke="#444" stroke-width="1.1"/></svg><div style="left:460px;top:575px;width:239px;height:1px;background:#e4ecee;"></div><div style="left:465px;top:582.68px;font-size:11px;line-height:11px;font-weight:700;color:#111;white-space:pre;">•</div><div style="left:472px;top:581.33px;font-size:12.6px;line-height:12.6px;font-weight:700;color:#111;white-space:pre;">Bandpass Filter</div><div style="left:-450.5px;width:1000px;text-align:right;top:611.59px;font-size:11.7px;line-height:11.7px;font-weight:400;color:#1a1a1a;white-space:pre;">Selectivity:</div><div style="left:561px;top:607px;width:138px;height:21px;background:#fff;"></div><div style="left:564.5px;top:611.89px;font-size:11.7px;line-height:11.7px;font-weight:400;color:#000;white-space:pre;">1/3 octave</div><svg style="position:absolute;left:686px;top:614.5px;" width="9" height="6" viewBox="0 0 9 6"><polyline points="1,1 4.5,5 8,1" fill="none" stroke="#444" stroke-width="1.1"/></svg><div style="left:-450.5px;width:1000px;text-align:right;top:640.59px;font-size:11.7px;line-height:11.7px;font-weight:400;color:#1a1a1a;white-space:pre;">Tune Mode:</div><div style="left:561px;top:636px;width:138px;height:21px;background:#fff;"></div><div style="left:564.5px;top:640.89px;font-size:11.7px;line-height:11.7px;font-weight:400;color:#000;white-space:pre;">Generator Frequency</div><svg style="position:absolute;left:686px;top:643.5px;" width="9" height="6" viewBox="0 0 9 6"><polyline points="1,1 4.5,5 8,1" fill="none" stroke="#444" stroke-width="1.1"/></svg><div style="left:460px;top:665px;width:239px;height:1px;background:#e4ecee;"></div><div style="left:465px;top:673.18px;font-size:11px;line-height:11px;font-weight:700;color:#111;white-space:pre;">•</div><div style="left:472px;top:671.83px;font-size:12.6px;line-height:12.6px;font-weight:700;color:#111;white-space:pre;">Reference Channel</div><div style="left:-450.5px;width:1000px;text-align:right;top:701.59px;font-size:11.7px;line-height:11.7px;font-weight:400;color:#1a1a1a;white-space:pre;">Channel:</div><div style="left:561px;top:697px;width:47px;height:21px;background:#fff;"></div><div style="left:564.5px;top:701.89px;font-size:11.7px;line-height:11.7px;font-weight:400;color:#000;white-space:pre;">Ch1</div><svg style="position:absolute;left:595px;top:704.5px;" width="9" height="6" viewBox="0 0 9 6"><polyline points="1,1 4.5,5 8,1" fill="none" stroke="#444" stroke-width="1.1"/></svg><div style="left:460px;top:725px;width:239px;height:1px;background:#e4ecee;"></div><div style="left:465px;top:734.18px;font-size:11px;line-height:11px;font-weight:700;color:#111;white-space:pre;">•</div><div style="left:472px;top:732.83px;font-size:12.6px;line-height:12.6px;font-weight:700;color:#111;white-space:pre;">IMD</div><div style="left:-450.5px;width:1000px;text-align:right;top:755.59px;font-size:11.7px;line-height:11.7px;font-weight:400;color:#1a1a1a;white-space:pre;">Type:</div><div style="left:561px;top:751px;width:138px;height:21px;background:#fff;"></div><div style="left:564.5px;top:755.89px;font-size:11.7px;line-height:11.7px;font-weight:400;color:#000;white-space:pre;">SMPTE/DIN</div><svg style="position:absolute;left:686px;top:758.5px;" width="9" height="6" viewBox="0 0 9 6"><polyline points="1,1 4.5,5 8,1" fill="none" stroke="#444" stroke-width="1.1"/></svg><div style="left:808px;top:78px;width:1110px;height:24px;background:#f0f0f0;"></div><div style="left:808px;top:79px;width:116px;height:21px;background:#74ade0;"></div><div style="left:813.5px;top:83.73px;font-size:13.3px;line-height:13.3px;font-weight:700;color:#5f7580;white-space:pre;">Monitors/Meters</div><div style="left:929px;top:84.58px;font-size:12.3px;line-height:12.3px;font-weight:700;color:#4b7886;white-space:pre;">Sweep</div><div style="left:980px;top:84.58px;font-size:12.3px;line-height:12.3px;font-weight:700;color:#4b7886;white-space:pre;">FFT</div><div style="left:1014px;top:84.58px;font-size:12.3px;line-height:12.3px;font-weight:700;color:#4b7886;white-space:pre;">Recorder</div><div style="left:1080px;top:84.58px;font-size:12.3px;line-height:12.3px;font-weight:700;color:#4b7886;white-space:pre;">Continuous Sweep</div><div style="left:1206px;top:84.58px;font-size:12.3px;line-height:12.3px;font-weight:700;color:#4b7886;white-space:pre;">Acoustic Response</div><div style="left:1332px;top:84.58px;font-size:12.3px;line-height:12.3px;font-weight:700;color:#4b7886;white-space:pre;">Transfer Function</div><div style="left:808px;top:102px;width:1110px;height:25px;background:#d6d6d6;"></div><svg style="position:absolute;left:811px;top:106px;" width="16" height="16" viewBox="0 0 16 16"><rect width="16" height="16" fill="#26485a"/><path d="M2,5 L6,1.5 V3.5 H14 V6.5 H6 V8.5 Z" fill="#fff"/><path d="M14,11.5 L10,8 V10 H2 V13 H10 V15 Z" fill="none" stroke="#fff" stroke-width="1"/></svg><svg style="position:absolute;left:834px;top:106px;" width="16" height="16" viewBox="0 0 16 16"><rect width="16" height="16" fill="#2a4a70"/><path d="M4,0 V16 M8,0 V16 M12,0 V16 M0,5 H16 M0,11 H16" stroke="#4a6a90" stroke-width="0.6"/><polyline points="1,11 4,11 4,4 7,4 7,11 9,11 9,4 12,4 12,11 15,11" fill="none" stroke="#fff" stroke-width="1.3"/></svg><svg style="position:absolute;left:857px;top:106px;" width="16" height="16" viewBox="0 0 16 16"><rect width="16" height="16" fill="#26485a"/><path d="M1.5,13 V3.5 H4.5 V12.5 H6.5 V3.5 H9.5 V12.5 H11.5 V3.5 H14.5 V13" fill="none" stroke="#fff" stroke-width="1"/><path d="M0,14.5 H16" stroke="#8aa" stroke-width="0.8"/></svg><svg style="position:absolute;left:880px;top:106px;" width="16" height="16" viewBox="0 0 16 16"><rect width="16" height="16" fill="#26485a"/><circle cx="8" cy="8" r="5.5" fill="#fff"/><path d="M8,4.5 V8 L10,10.5" fill="none" stroke="#26485a" stroke-width="1.4"/></svg><svg style="position:absolute;left:903px;top:106px;" width="16" height="16" viewBox="0 0 16 16"><rect width="16" height="16" fill="#26485a"/><path d="M1,10 C3,3 5,3 7,8 C9,13 11,13 14,7" fill="none" stroke="#fff" stroke-width="1.3"/><path d="M12,1 V7 M9,4 H15" stroke="#fff" stroke-width="1.8"/></svg><div style="left:927px;top:107px;width:1px;height:15px;background:#f4f4f4;"></div><svg style="position:absolute;left:931px;top:106px;" width="45" height="16" viewBox="0 0 45 16"><defs><linearGradient id="g931106" x1="0" y1="0" x2="0" y2="1"><stop offset="0" stop-color="#8ef08a"/><stop offset="0.5" stop-color="#5fdc5a"/><stop offset="1" stop-color="#3cb43a"/></linearGradient></defs><rect x="0.5" y="0.5" width="44" height="15" rx="3" fill="url(#g931106)" stroke="#3d9a3c"/><text x="7" y="12.5" font-family="Liberation Sans" font-weight="700" font-size="11" fill="#1e5a3a">ON</text><rect x="27" y="3" width="13" height="10" rx="2" fill="#4fbf4a" stroke="#2e7a34"/><rect x="28" y="4" width="11" height="4.0" fill="#a8f0a0"/></svg><svg style="position:absolute;left:1899px;top:108px;" width="13" height="10" viewBox="0 0 13 10"><rect x="0" y="0" width="13" height="1.8" fill="#3a5a80"/><polygon points="6.5,3.5 11,7.5 8,7.5 8,10 5,10 5,7.5 2,7.5" fill="#3a5a80"/></svg><div style="left:808px;top:127px;width:1110px;height:375px;background:#b4b4b4;"></div><div style="left:811px;top:130px;width:549px;height:25px;background:#dce6e9;"></div><div style="left:811px;top:155px;width:549px;height:1px;background:#a9a9a9;"></div><div style="left:811px;top:156px;width:549px;height:341px;background:#f0f0f0;"></div><div style="left:815px;top:160px;width:540px;height:334px;background:#fff;"></div><div style="left:815px;top:134.37px;font-size:15.5px;line-height:15.5px;font-weight:700;color:#000;white-space:pre;">Scope</div><div style="left:870px;top:136.09px;font-size:11.7px;line-height:11.7px;font-weight:400;color:#333;white-space:pre;">X:</div><div style="left:885px;top:131px;width:75px;height:23px;background:#fff;"></div><div style="left:948px;top:131px;width:12px;height:23px;background:#f8f8f8;"></div><div style="left:890px;top:137.09px;font-size:11.7px;line-height:11.7px;font-weight:400;color:#000;white-space:pre;">s</div><svg style="position:absolute;left:950.5px;top:141px;" width="6" height="3.5" viewBox="0 0 6 3.5"><polygon points="0,0 6,0 3.0,3.5" fill="#000"/></svg><div style="left:964px;top:136.09px;font-size:11.7px;line-height:11.7px;font-weight:400;color:#333;white-space:pre;">Y:</div><div style="left:979px;top:131px;width:74px;height:23px;background:#fff;"></div><div style="left:1041px;top:131px;width:12px;height:23px;background:#f8f8f8;"></div><div style="left:984px;top:137.09px;font-size:11.7px;line-height:11.7px;font-weight:400;color:#000;white-space:pre;">D</div><svg style="position:absolute;left:1043.5px;top:141px;" width="6" height="3.5" viewBox="0 0 6 3.5"><polygon points="0,0 6,0 3.0,3.5" fill="#000"/></svg><svg style="position:absolute;left:1058px;top:134px;" width="16" height="16" viewBox="0 0 16 16"><rect width="16" height="16" fill="#2a4a5c"/><path d="M12.67,6.88 L14.33,7.05 L14.33,8.95 L12.67,9.12 L12.09,10.51 L13.15,11.80 L11.80,13.15 L10.51,12.09 L9.12,12.67 L8.95,14.33 L7.05,14.33 L6.88,12.67 L5.49,12.09 L4.20,13.15 L2.85,11.80 L3.91,10.51 L3.33,9.12 L1.67,8.95 L1.67,7.05 L3.33,6.88 L3.91,5.49 L2.85,4.20 L4.20,2.85 L5.49,3.91 L6.88,3.33 L7.05,1.67 L8.95,1.67 L9.12,3.33 L10.51,3.91 L11.80,2.85 L13.15,4.20 L12.09,5.49Z" fill="#fff"/><circle cx="8" cy="8" r="1.9" fill="#2a4a5c"/></svg><div style="left:1334px;top:136px;width:1px;height:14px;background:#f8f8f8;"></div><svg style="position:absolute;left:1341px;top:136px;" width="12" height="12" viewBox="0 0 12 12"><path d="M4.5,1 H1 V11 H11 V7.5" fill="none" stroke="#1f3f7a" stroke-width="2"/><path d="M5,7 L9,3" stroke="#1f3f7a" stroke-width="1.9" stroke-linecap="round"/><polygon points="5.5,0 12,0 12,6.5" fill="#1f3f7a"/></svg><div style="left:1366px;top:130px;width:549px;height:25px;background:#dce6e9;"></div><div style="left:1366px;top:155px;width:549px;height:1px;background:#a9a9a9;"></div><div style="left:1366px;top:156px;width:549px;height:341px;background:#f0f0f0;"></div><div style="left:1370px;top:160px;width:540px;height:334px;background:#fff;"></div><div style="left:1370px;top:134.37px;font-size:15.5px;line-height:15.5px;font-weight:700;color:#000;white-space:pre;">FFT</div><div style="left:1403px;top:136.09px;font-size:11.7px;line-height:11.7px;font-weight:400;color:#333;white-space:pre;">X:</div><div style="left:1419px;top:131px;width:74.5px;height:23px;background:#fff;"></div><div style="left:1481.5px;top:131px;width:12px;height:23px;background:#f8f8f8;"></div><div style="left:1424px;top:137.09px;font-size:11.7px;line-height:11.7px;font-weight:400;color:#000;white-space:pre;">Hz</div><svg style="position:absolute;left:1484.0px;top:141px;" width="6" height="3.5" viewBox="0 0 6 3.5"><polygon points="0,0 6,0 3.0,3.5" fill="#000"/></svg><div style="left:1497.5px;top:136.09px;font-size:11.7px;line-height:11.7px;font-weight:400;color:#333;white-space:pre;">Y:</div><div style="left:1513px;top:131px;width:75px;height:23px;background:#fff;"></div><div style="left:1576px;top:131px;width:12px;height:23px;background:#f8f8f8;"></div><div style="left:1518px;top:137.09px;font-size:11.7px;line-height:11.7px;font-weight:400;color:#000;white-space:pre;">dBFS</div><svg style="position:absolute;left:1578.5px;top:141px;" width="6" height="3.5" viewBox="0 0 6 3.5"><polygon points="0,0 6,0 3.0,3.5" fill="#000"/></svg><svg style="position:absolute;left:1592px;top:134px;" width="16" height="16" viewBox="0 0 16 16"><rect width="16" height="16" fill="#2a4a5c"/><path d="M12.67,6.88 L14.33,7.05 L14.33,8.95 L12.67,9.12 L12.09,10.51 L13.15,11.80 L11.80,13.15 L10.51,12.09 L9.12,12.67 L8.95,14.33 L7.05,14.33 L6.88,12.67 L5.49,12.09 L4.20,13.15 L2.85,11.80 L3.91,10.51 L3.33,9.12 L1.67,8.95 L1.67,7.05 L3.33,6.88 L3.91,5.49 L2.85,4.20 L4.20,2.85 L5.49,3.91 L6.88,3.33 L7.05,1.67 L8.95,1.67 L9.12,3.33 L10.51,3.91 L11.80,2.85 L13.15,4.20 L12.09,5.49Z" fill="#fff"/><circle cx="8" cy="8" r="1.9" fill="#2a4a5c"/></svg><div style="left:1889px;top:136px;width:1px;height:14px;background:#f8f8f8;"></div><svg style="position:absolute;left:1896px;top:136px;" width="12" height="12" viewBox="0 0 12 12"><path d="M4.5,1 H1 V11 H11 V7.5" fill="none" stroke="#1f3f7a" stroke-width="2"/><path d="M5,7 L9,3" stroke="#1f3f7a" stroke-width="1.9" stroke-linecap="round"/><polygon points="5.5,0 12,0 12,6.5" fill="#1f3f7a"/></svg><div style="left:808px;top:502px;width:1110px;height:6px;background:#4b7886;"></div><div style="left:1356.5px;top:503px;width:2.5px;height:2.5px;background:#b8d0d8;border-radius:1px;"></div><div style="left:1362.5px;top:503px;width:2.5px;height:2.5px;background:#b8d0d8;border-radius:1px;"></div><div style="left:1368.5px;top:503px;width:2.5px;height:2.5px;background:#b8d0d8;border-radius:1px;"></div><div style="left:808px;top:508px;width:1110px;height:24px;background:#d6d6d6;"></div><svg style="position:absolute;left:810px;top:512px;" width="16" height="16" viewBox="0 0 16 16"><rect width="16" height="16" fill="#26485a"/><path d="M8,2.5 V13.5 M2.5,8 H13.5" stroke="#fff" stroke-width="2.2"/></svg><div style="left:829.5px;top:514.84px;font-size:11.4px;line-height:11.4px;font-weight:400;color:#000;white-space:pre;">Add Meter</div><svg style="position:absolute;left:889px;top:519px;" width="6" height="3" viewBox="0 0 6 3"><polygon points="0,0 6,0 3.0,3" fill="#222"/></svg><div style="left:904px;top:513px;width:1px;height:15px;background:#f4f4f4;"></div><svg style="position:absolute;left:908px;top:512px;" width="16" height="16" viewBox="0 0 16 16"><rect width="16" height="16" fill="#26485a"/><ellipse cx="6" cy="4" rx="4" ry="1.8" fill="none" stroke="#fff" stroke-width="1"/><path d="M2,4 V12 Q6,14.5 10,12 M2,8 Q6,10.5 10,8" fill="none" stroke="#fff" stroke-width="1"/><path d="M8,8 H12 V5.5 L15.5,9.5 L12,13.5 V11 H8 Z" fill="#fff"/></svg><div style="left:927px;top:514.84px;font-size:11.4px;line-height:11.4px;font-weight:400;color:#000;white-space:pre;">Save Meter Data</div><div style="left:1021px;top:513px;width:1px;height:15px;background:#f4f4f4;"></div><svg style="position:absolute;left:1026px;top:512px;" width="16" height="16" viewBox="0 0 16 16"><rect width="16" height="16" fill="#26485a"/><polygon points="5,3 12.5,8 5,13" fill="#fff"/></svg><div style="left:1045px;top:514.84px;font-size:11.4px;line-height:11.4px;font-weight:400;color:#000;white-space:pre;">Regulate</div><svg style="position:absolute;left:1897px;top:514px;" width="14" height="11" viewBox="0 0 14 11"><polygon points="7,6.5 11.5,2.5 8.5,2.5 8.5,0 5.5,0 5.5,2.5 2.5,2.5" fill="#3a5a80"/><rect x="0" y="9" width="14" height="1.8" fill="#3a5a80"/></svg><div style="left:808px;top:532px;width:1110px;height:575px;background:#acacac;"></div><div style="left:808px;top:532px;width:1110px;height:4px;background:#b4b4b4;"></div><div style="left:811px;top:536px;width:537px;height:158px;background:#dce6e9;"></div><div style="left:811px;top:561px;width:537px;height:1px;background:#c4cdd0;"></div><div style="left:815.5px;top:541.04px;font-size:15.3px;line-height:15.3px;font-weight:700;color:#000;white-space:pre;">RMS Level</div><div style="left:900px;top:537px;width:75px;height:23px;background:#fff;"></div><div style="left:963px;top:537px;width:12px;height:23px;background:#f8f8f8;"></div><div style="left:904.5px;top:543.59px;font-size:11.7px;line-height:11.7px;font-weight:400;color:#111;white-space:pre;">dBFS</div><svg style="position:absolute;left:965.5px;top:547px;" width="6" height="3.5" viewBox="0 0 6 3.5"><polygon points="0,0 6,0 3.0,3.5" fill="#111"/></svg><svg style="position:absolute;left:978px;top:540px;" width="26" height="16" viewBox="0 0 26 16"><rect x="0" y="0" width="16" height="16" fill="#2a4a5c"/><rect x="1" y="2.5" width="14" height="1.6" fill="#fff"/><rect x="1" y="11.8" width="14" height="1.6" fill="#fff"/><rect x="1" y="4.1" width="14" height="7.7" fill="#5f7888"/><polyline points="1.5,11 5.5,5.5 10,11 14.5,4.5" fill="none" stroke="#e8f0f4" stroke-width="0.9"/><polygon points="19,7 24,7 21.5,10" fill="#222"/></svg><svg style="position:absolute;left:1008px;top:540px;" width="16" height="16" viewBox="0 0 16 16"><rect width="16" height="16" fill="#2a4a5c"/><path d="M12.67,6.88 L14.33,7.05 L14.33,8.95 L12.67,9.12 L12.09,10.51 L13.15,11.80 L11.80,13.15 L10.51,12.09 L9.12,12.67 L8.95,14.33 L7.05,14.33 L6.88,12.67 L5.49,12.09 L4.20,13.15 L2.85,11.80 L3.91,10.51 L3.33,9.12 L1.67,8.95 L1.67,7.05 L3.33,6.88 L3.91,5.49 L2.85,4.20 L4.20,2.85 L5.49,3.91 L6.88,3.33 L7.05,1.67 L8.95,1.67 L9.12,3.33 L10.51,3.91 L11.80,2.85 L13.15,4.20 L12.09,5.49Z" fill="#fff"/><circle cx="8" cy="8" r="1.9" fill="#2a4a5c"/></svg><div style="left:1299px;top:541px;width:1px;height:16px;background:#f8f8f8;"></div><svg style="position:absolute;left:1306px;top:542px;" width="12" height="12" viewBox="0 0 12 12"><path d="M4.5,1 H1 V11 H11 V7.5" fill="none" stroke="#1f3f7a" stroke-width="2"/><path d="M5,7 L9,3" stroke="#1f3f7a" stroke-width="1.9" stroke-linecap="round"/><polygon points="5.5,0 12,0 12,6.5" fill="#1f3f7a"/></svg><svg style="position:absolute;left:1330px;top:543px;" width="10" height="10" viewBox="0 0 10 10"><path d="M1,1 L9,9 M9,1 L1,9" stroke="#2a3a44" stroke-width="2"/></svg><div style="left:948.6px;top:566px;width:390.4px;height:41px;background:#000;"></div><div style="left:948.6px;top:647px;width:390.4px;height:42px;background:#000;"></div><div style="left:819px;top:581.79px;font-size:30px;line-height:30px;font-weight:400;color:#262626;white-space:pre;">Ch1</div><div style="left:819px;top:644.59px;font-size:30px;line-height:30px;font-weight:400;color:#262626;white-space:pre;">Ch2</div><svg style="position:absolute;left:936px;top:590px;" width="10" height="10" viewBox="0 0 10 10"><polygon points="0,0 10,0 5.0,10" fill="#111"/></svg><svg style="position:absolute;left:936px;top:654px;" width="10" height="10" viewBox="0 0 10 10"><polygon points="0,0 10,0 5.0,10" fill="#111"/></svg><div style="left:811px;top:626px;width:137px;height:1px;background:#a8b0b4;"></div><div style="left:948.6px;top:607px;width:390.4px;height:18px;background:#000;"></div><div style="left:949.6px;top:607px;width:389.4px;height:18px;box-sizing:border-box;border:1.3px solid #d8d8d8;background:#808080;"></div><div style="left:951.6px;top:614px;width:370.4px;height:3.2px;background:#000;"></div><div style="left:948.6px;top:629px;width:390.4px;height:18px;background:#000;"></div><div style="left:949.6px;top:629px;width:389.4px;height:18px;box-sizing:border-box;border:1.3px solid #d8d8d8;background:#808080;"></div><div style="left:951.6px;top:636px;width:364.4px;height:3.2px;background:#000;"></div><div style="left:948.6px;top:626px;width:390.4px;height:2px;background:#e0e0e0;"></div><div style="left:225px;width:1000px;text-align:right;top:573.87px;font-size:30.5px;line-height:30.5px;font-weight:400;color:#22e622;white-space:pre;">-108.044</div><div style="left:1265px;top:573.87px;width:68px;font-size:30.5px;line-height:30.5px;color:#22e622;white-space:pre;"><span style="display:inline-block;transform:scaleX(0.89);transform-origin:right;position:absolute;right:0;">dBFS</span></div><div style="left:225px;width:1000px;text-align:right;top:653.17px;font-size:30.5px;line-height:30.5px;font-weight:400;color:#22e622;white-space:pre;">-107.994</div><div style="left:1265px;top:653.17px;width:68px;font-size:30.5px;line-height:30.5px;color:#22e622;white-space:pre;"><span style="display:inline-block;transform:scaleX(0.89);transform-origin:right;position:absolute;right:0;">dBFS</span></div><div style="left:1354px;top:536px;width:537px;height:158px;background:#dce6e9;"></div><div style="left:1354px;top:561px;width:537px;height:1px;background:#c4cdd0;"></div><div style="left:1358.5px;top:541.04px;font-size:15.3px;line-height:15.3px;font-weight:700;color:#000;white-space:pre;">Frequency</div><div style="left:1444px;top:537px;width:74px;height:23px;background:#fff;"></div><div style="left:1506px;top:537px;width:12px;height:23px;background:#f8f8f8;"></div><div style="left:1448.5px;top:543.59px;font-size:11.7px;line-height:11.7px;font-weight:400;color:#111;white-space:pre;">Hz</div><svg style="position:absolute;left:1508.5px;top:547px;" width="6" height="3.5" viewBox="0 0 6 3.5"><polygon points="0,0 6,0 3.0,3.5" fill="#111"/></svg><svg style="position:absolute;left:1522px;top:540px;" width="26" height="16" viewBox="0 0 26 16"><rect x="0" y="0" width="16" height="16" fill="#2a4a5c"/><rect x="1" y="2.5" width="14" height="1.6" fill="#fff"/><rect x="1" y="11.8" width="14" height="1.6" fill="#fff"/><rect x="1" y="4.1" width="14" height="7.7" fill="#5f7888"/><polyline points="1.5,11 5.5,5.5 10,11 14.5,4.5" fill="none" stroke="#e8f0f4" stroke-width="0.9"/><polygon points="19,7 24,7 21.5,10" fill="#222"/></svg><svg style="position:absolute;left:1552px;top:540px;" width="16" height="16" viewBox="0 0 16 16"><rect width="16" height="16" fill="#2a4a5c"/><path d="M12.67,6.88 L14.33,7.05 L14.33,8.95 L12.67,9.12 L12.09,10.51 L13.15,11.80 L11.80,13.15 L10.51,12.09 L9.12,12.67 L8.95,14.33 L7.05,14.33 L6.88,12.67 L5.49,12.09 L4.20,13.15 L2.85,11.80 L3.91,10.51 L3.33,9.12 L1.67,8.95 L1.67,7.05 L3.33,6.88 L3.91,5.49 L2.85,4.20 L4.20,2.85 L5.49,3.91 L6.88,3.33 L7.05,1.67 L8.95,1.67 L9.12,3.33 L10.51,3.91 L11.80,2.85 L13.15,4.20 L12.09,5.49Z" fill="#fff"/><circle cx="8" cy="8" r="1.9" fill="#2a4a5c"/></svg><div style="left:1842px;top:541px;width:1px;height:16px;background:#f8f8f8;"></div><svg style="position:absolute;left:1849px;top:542px;" width="12" height="12" viewBox="0 0 12 12"><path d="M4.5,1 H1 V11 H11 V7.5" fill="none" stroke="#1f3f7a" stroke-width="2"/><path d="M5,7 L9,3" stroke="#1f3f7a" stroke-width="1.9" stroke-linecap="round"/><polygon points="5.5,0 12,0 12,6.5" fill="#1f3f7a"/></svg><svg style="position:absolute;left:1873px;top:543px;" width="10" height="10" viewBox="0 0 10 10"><path d="M1,1 L9,9 M9,1 L1,9" stroke="#2a3a44" stroke-width="2"/></svg><div style="left:1491.6px;top:566px;width:390.4000000000001px;height:41px;background:#000;"></div><div style="left:1491.6px;top:647px;width:390.4000000000001px;height:42px;background:#000;"></div><div style="left:1362px;top:581.79px;font-size:30px;line-height:30px;font-weight:400;color:#262626;white-space:pre;">Ch1</div><div style="left:1362px;top:644.59px;font-size:30px;line-height:30px;font-weight:400;color:#262626;white-space:pre;">Ch2</div><svg style="position:absolute;left:1479px;top:590px;" width="10" height="10" viewBox="0 0 10 10"><polygon points="0,0 10,0 5.0,10" fill="#111"/></svg><svg style="position:absolute;left:1479px;top:654px;" width="10" height="10" viewBox="0 0 10 10"><polygon points="0,0 10,0 5.0,10" fill="#111"/></svg><div style="left:1354px;top:626px;width:137px;height:1px;background:#a8b0b4;"></div><div style="left:1491.6px;top:607px;width:390.4000000000001px;height:18px;background:#000;"></div><div style="left:1492.6px;top:607px;width:389.4000000000001px;height:18px;box-sizing:border-box;border:1.3px solid #d8d8d8;background:#808080;"></div><div style="left:1493.6px;top:608.5px;width:231.4000000000001px;height:15px;background:#22e622;"></div><div style="left:1494.6px;top:614px;width:379.4000000000001px;height:3.2px;background:#000;"></div><div style="left:1491.6px;top:629px;width:390.4000000000001px;height:18px;background:#000;"></div><div style="left:1492.6px;top:629px;width:389.4000000000001px;height:18px;box-sizing:border-box;border:1.3px solid #d8d8d8;background:#808080;"></div><div style="left:1493.6px;top:630.5px;width:231.4000000000001px;height:15px;background:#22e622;"></div><div style="left:1494.6px;top:636px;width:379.4000000000001px;height:3.2px;background:#000;"></div><div style="left:1491.6px;top:626px;width:390.4000000000001px;height:2px;background:#e0e0e0;"></div><div style="left:791.7px;width:1000px;text-align:right;top:573.87px;font-size:30.5px;line-height:30.5px;font-weight:400;color:#22e622;white-space:pre;">1.21997</div><div style="left:876px;width:1000px;text-align:right;top:573.87px;font-size:30.5px;line-height:30.5px;font-weight:400;color:#22e622;white-space:pre;">kHz</div><div style="left:791.7px;width:1000px;text-align:right;top:653.17px;font-size:30.5px;line-height:30.5px;font-weight:400;color:#22e622;white-space:pre;">1.22797</div><div style="left:876px;width:1000px;text-align:right;top:653.17px;font-size:30.5px;line-height:30.5px;font-weight:400;color:#22e622;white-space:pre;">kHz</div><div style="left:811px;top:700px;width:537px;height:158px;background:#dce6e9;"></div><div style="left:811px;top:725px;width:537px;height:1px;background:#c4cdd0;"></div><div style="left:815.5px;top:705.04px;font-size:15.3px;line-height:15.3px;font-weight:700;color:#000;white-space:pre;">THD+N Ratio</div><div style="left:922px;top:701px;width:76px;height:23px;background:#fff;"></div><div style="left:986px;top:701px;width:12px;height:23px;background:#f8f8f8;"></div><div style="left:926.5px;top:707.59px;font-size:11.7px;line-height:11.7px;font-weight:400;color:#111;white-space:pre;">dB</div><svg style="position:absolute;left:988.5px;top:711px;" width="6" height="3.5" viewBox="0 0 6 3.5"><polygon points="0,0 6,0 3.0,3.5" fill="#111"/></svg><svg style="position:absolute;left:1001px;top:704px;" width="26" height="16" viewBox="0 0 26 16"><rect x="0" y="0" width="16" height="16" fill="#2a4a5c"/><rect x="1" y="2.5" width="14" height="1.6" fill="#fff"/><rect x="1" y="11.8" width="14" height="1.6" fill="#fff"/><rect x="1" y="4.1" width="14" height="7.7" fill="#5f7888"/><polyline points="1.5,11 5.5,5.5 10,11 14.5,4.5" fill="none" stroke="#e8f0f4" stroke-width="0.9"/><polygon points="19,7 24,7 21.5,10" fill="#222"/></svg><svg style="position:absolute;left:1031px;top:704px;" width="16" height="16" viewBox="0 0 16 16"><rect width="16" height="16" fill="#2a4a5c"/><path d="M12.67,6.88 L14.33,7.05 L14.33,8.95 L12.67,9.12 L12.09,10.51 L13.15,11.80 L11.80,13.15 L10.51,12.09 L9.12,12.67 L8.95,14.33 L7.05,14.33 L6.88,12.67 L5.49,12.09 L4.20,13.15 L2.85,11.80 L3.91,10.51 L3.33,9.12 L1.67,8.95 L1.67,7.05 L3.33,6.88 L3.91,5.49 L2.85,4.20 L4.20,2.85 L5.49,3.91 L6.88,3.33 L7.05,1.67 L8.95,1.67 L9.12,3.33 L10.51,3.91 L11.80,2.85 L13.15,4.20 L12.09,5.49Z" fill="#fff"/><circle cx="8" cy="8" r="1.9" fill="#2a4a5c"/></svg><div style="left:1299px;top:705px;width:1px;height:16px;background:#f8f8f8;"></div><svg style="position:absolute;left:1306px;top:706px;" width="12" height="12" viewBox="0 0 12 12"><path d="M4.5,1 H1 V11 H11 V7.5" fill="none" stroke="#1f3f7a" stroke-width="2"/><path d="M5,7 L9,3" stroke="#1f3f7a" stroke-width="1.9" stroke-linecap="round"/><polygon points="5.5,0 12,0 12,6.5" fill="#1f3f7a"/></svg><svg style="position:absolute;left:1330px;top:707px;" width="10" height="10" viewBox="0 0 10 10"><path d="M1,1 L9,9 M9,1 L1,9" stroke="#2a3a44" stroke-width="2"/></svg><div style="left:948.6px;top:730px;width:390.4px;height:41px;background:#000;"></div><div style="left:948.6px;top:811px;width:390.4px;height:42px;background:#000;"></div><div style="left:819px;top:745.79px;font-size:30px;line-height:30px;font-weight:400;color:#262626;white-space:pre;">Ch1</div><div style="left:819px;top:808.59px;font-size:30px;line-height:30px;font-weight:400;color:#262626;white-space:pre;">Ch2</div><svg style="position:absolute;left:936px;top:754px;" width="10" height="10" viewBox="0 0 10 10"><polygon points="0,0 10,0 5.0,10" fill="#111"/></svg><svg style="position:absolute;left:936px;top:818px;" width="10" height="10" viewBox="0 0 10 10"><polygon points="0,0 10,0 5.0,10" fill="#111"/></svg><div style="left:811px;top:790px;width:137px;height:1px;background:#a8b0b4;"></div><div style="left:948.6px;top:771px;width:390.4px;height:18px;background:#000;"></div><div style="left:949.6px;top:771px;width:389.4px;height:18px;box-sizing:border-box;border:1.3px solid #d8d8d8;background:#808080;"></div><div style="left:950.6px;top:772.5px;width:346.4px;height:15px;background:#22e622;"></div><div style="left:951.6px;top:778px;width:386.4px;height:3.2px;background:#000;"></div><div style="left:948.6px;top:793px;width:390.4px;height:18px;background:#000;"></div><div style="left:949.6px;top:793px;width:389.4px;height:18px;box-sizing:border-box;border:1.3px solid #d8d8d8;background:#808080;"></div><div style="left:950.6px;top:794.5px;width:348.4px;height:15px;background:#22e622;"></div><div style="left:951.6px;top:800px;width:386.4px;height:3.2px;background:#000;"></div><div style="left:948.6px;top:790px;width:390.4px;height:2px;background:#e0e0e0;"></div><div style="left:268px;width:1000px;text-align:right;top:737.87px;font-size:30.5px;line-height:30.5px;font-weight:400;color:#22e622;white-space:pre;">-13.037</div><div style="left:333px;width:1000px;text-align:right;top:737.87px;font-size:30.5px;line-height:30.5px;font-weight:400;color:#22e622;white-space:pre;">dB</div><div style="left:268px;width:1000px;text-align:right;top:817.17px;font-size:30.5px;line-height:30.5px;font-weight:400;color:#22e622;white-space:pre;">-12.407</div><div style="left:333px;width:1000px;text-align:right;top:817.17px;font-size:30.5px;line-height:30.5px;font-weight:400;color:#22e622;white-space:pre;">dB</div><div style="left:1354px;top:700px;width:537px;height:158px;background:#dce6e9;"></div><div style="left:1354px;top:725px;width:537px;height:1px;background:#c4cdd0;"></div><div style="left:1358.5px;top:705.04px;font-size:15.3px;line-height:15.3px;font-weight:700;color:#000;white-space:pre;">THD+N Level</div><div style="left:1466px;top:701px;width:75px;height:23px;background:#fff;"></div><div style="left:1529px;top:701px;width:12px;height:23px;background:#f8f8f8;"></div><div style="left:1470.5px;top:707.59px;font-size:11.7px;line-height:11.7px;font-weight:400;color:#111;white-space:pre;">dBFS</div><svg style="position:absolute;left:1531.5px;top:711px;" width="6" height="3.5" viewBox="0 0 6 3.5"><polygon points="0,0 6,0 3.0,3.5" fill="#111"/></svg><svg style="position:absolute;left:1545px;top:704px;" width="26" height="16" viewBox="0 0 26 16"><rect x="0" y="0" width="16" height="16" fill="#2a4a5c"/><rect x="1" y="2.5" width="14" height="1.6" fill="#fff"/><rect x="1" y="11.8" width="14" height="1.6" fill="#fff"/><rect x="1" y="4.1" width="14" height="7.7" fill="#5f7888"/><polyline points="1.5,11 5.5,5.5 10,11 14.5,4.5" fill="none" stroke="#e8f0f4" stroke-width="0.9"/><polygon points="19,7 24,7 21.5,10" fill="#222"/></svg><svg style="position:absolute;left:1575px;top:704px;" width="16" height="16" viewBox="0 0 16 16"><rect width="16" height="16" fill="#2a4a5c"/><path d="M12.67,6.88 L14.33,7.05 L14.33,8.95 L12.67,9.12 L12.09,10.51 L13.15,11.80 L11.80,13.15 L10.51,12.09 L9.12,12.67 L8.95,14.33 L7.05,14.33 L6.88,12.67 L5.49,12.09 L4.20,13.15 L2.85,11.80 L3.91,10.51 L3.33,9.12 L1.67,8.95 L1.67,7.05 L3.33,6.88 L3.91,5.49 L2.85,4.20 L4.20,2.85 L5.49,3.91 L6.88,3.33 L7.05,1.67 L8.95,1.67 L9.12,3.33 L10.51,3.91 L11.80,2.85 L13.15,4.20 L12.09,5.49Z" fill="#fff"/><circle cx="8" cy="8" r="1.9" fill="#2a4a5c"/></svg><div style="left:1842px;top:705px;width:1px;height:16px;background:#f8f8f8;"></div><svg style="position:absolute;left:1849px;top:706px;" width="12" height="12" viewBox="0 0 12 12"><path d="M4.5,1 H1 V11 H11 V7.5" fill="none" stroke="#1f3f7a" stroke-width="2"/><path d="M5,7 L9,3" stroke="#1f3f7a" stroke-width="1.9" stroke-linecap="round"/><polygon points="5.5,0 12,0 12,6.5" fill="#1f3f7a"/></svg><svg style="position:absolute;left:1873px;top:707px;" width="10" height="10" viewBox="0 0 10 10"><path d="M1,1 L9,9 M9,1 L1,9" stroke="#2a3a44" stroke-width="2"/></svg><div style="left:1491.6px;top:730px;width:390.4000000000001px;height:41px;background:#000;"></div><div style="left:1491.6px;top:811px;width:390.4000000000001px;height:42px;background:#000;"></div><div style="left:1362px;top:745.79px;font-size:30px;line-height:30px;font-weight:400;color:#262626;white-space:pre;">Ch1</div><div style="left:1362px;top:808.59px;font-size:30px;line-height:30px;font-weight:400;color:#262626;white-space:pre;">Ch2</div><svg style="position:absolute;left:1479px;top:754px;" width="10" height="10" viewBox="0 0 10 10"><polygon points="0,0 10,0 5.0,10" fill="#111"/></svg><svg style="position:absolute;left:1479px;top:818px;" width="10" height="10" viewBox="0 0 10 10"><polygon points="0,0 10,0 5.0,10" fill="#111"/></svg><div style="left:1354px;top:790px;width:137px;height:1px;background:#a8b0b4;"></div><div style="left:1491.6px;top:771px;width:390.4000000000001px;height:18px;background:#000;"></div><div style="left:1492.6px;top:771px;width:389.4000000000001px;height:18px;box-sizing:border-box;border:1.3px solid #d8d8d8;background:#808080;"></div><div style="left:1494.6px;top:778px;width:376.4000000000001px;height:3.2px;background:#000;"></div><div style="left:1491.6px;top:793px;width:390.4000000000001px;height:18px;background:#000;"></div><div style="left:1492.6px;top:793px;width:389.4000000000001px;height:18px;box-sizing:border-box;border:1.3px solid #d8d8d8;background:#808080;"></div><div style="left:1494.6px;top:800px;width:377.4000000000001px;height:3.2px;background:#000;"></div><div style="left:1491.6px;top:790px;width:390.4000000000001px;height:2px;background:#e0e0e0;"></div><div style="left:768.4000000000001px;width:1000px;text-align:right;top:737.87px;font-size:30.5px;line-height:30.5px;font-weight:400;color:#22e622;white-space:pre;">-121.039</div><div style="left:1808px;top:737.87px;width:68px;font-size:30.5px;line-height:30.5px;color:#22e622;white-space:pre;"><span style="display:inline-block;transform:scaleX(0.89);transform-origin:right;position:absolute;right:0;">dBFS</span></div><div style="left:768.4000000000001px;width:1000px;text-align:right;top:817.17px;font-size:30.5px;line-height:30.5px;font-weight:400;color:#22e622;white-space:pre;">-120.360</div><div style="left:1808px;top:817.17px;width:68px;font-size:30.5px;line-height:30.5px;color:#22e622;white-space:pre;"><span style="display:inline-block;transform:scaleX(0.89);transform-origin:right;position:absolute;right:0;">dBFS</span></div><div style="left:813px;top:866px;width:534px;height:155px;box-sizing:border-box;border:1.6px solid #111;background:#ababab;"></div><svg style="position:absolute;left:1027px;top:935px;" width="16" height="16" viewBox="0 0 16 16"><rect width="16" height="16" fill="#26485a"/><path d="M8,2.5 V13.5 M2.5,8 H13.5" stroke="#fff" stroke-width="2.2"/></svg><div style="left:1048px;top:934.96px;font-size:14.8px;line-height:14.8px;font-weight:400;color:#1a1a1a;white-space:pre;">Add meter...</div><div style="left:1215.5px;top:1114.26px;font-size:11.5px;line-height:11.5px;font-weight:400;color:#111;white-space:pre;">Output:</div><div style="left:1263px;top:1111px;width:169px;height:17px;background:#000;"></div><div style="left:1267px;top:1114.43px;font-size:11.3px;line-height:11.3px;font-weight:400;color:#22e622;white-space:pre;">Analog Balanced 2 Ch, 40 ohm</div><div style="left:1438px;top:1114.26px;font-size:11.5px;line-height:11.5px;font-weight:400;color:#111;white-space:pre;">Input 1:</div><div style="left:1484px;top:1111px;width:100px;height:17px;background:#000;"></div><div style="left:1488px;top:1114.43px;font-size:11.3px;line-height:11.3px;font-weight:400;color:#22e622;white-space:pre;">Digital Serial 8 Ch</div><div style="left:1586.5px;top:1111px;width:33.5px;height:17px;background:#000;"></div><div style="left:1590.5px;top:1114.43px;font-size:11.3px;line-height:11.3px;font-weight:400;color:#22e622;white-space:pre;">PCM</div><div style="left:1622.5px;top:1111px;width:68.5px;height:17px;background:#000;"></div><div style="left:1626.5px;top:1114.43px;font-size:11.3px;line-height:11.3px;font-weight:400;color:#22e622;white-space:pre;">48.0000 kHz</div><div style="left:1694.5px;top:1111px;width:117.5px;height:17px;background:#000;"></div><div style="left:1698.5px;top:1114.43px;font-size:11.3px;line-height:11.3px;font-weight:400;color:#22e622;white-space:pre;">AC (&lt;10 Hz) - 20 kHz</div><div style="left:1818px;top:1114.26px;font-size:11.5px;line-height:11.5px;font-weight:400;color:#111;white-space:pre;">Input 2:</div><div style="left:1865px;top:1111px;width:36px;height:17px;background:#000;"></div><div style="left:1869px;top:1114.43px;font-size:11.3px;line-height:11.3px;font-weight:400;color:#22e622;white-space:pre;">None</div><svg style="position:absolute;left:811px;top:156px;overflow:hidden;" width="549" height="341" viewBox="811 156 549 341"><line x1="893.5" y1="174" x2="893.5" y2="462" stroke="#ececec" stroke-width="1"/><line x1="955.5" y1="174" x2="955.5" y2="462" stroke="#ececec" stroke-width="1"/><line x1="1018.5" y1="174" x2="1018.5" y2="462" stroke="#ececec" stroke-width="1"/><line x1="1080.5" y1="174" x2="1080.5" y2="462" stroke="#ececec" stroke-width="1"/><line x1="1142.5" y1="174" x2="1142.5" y2="462" stroke="#ececec" stroke-width="1"/><line x1="1205.5" y1="174" x2="1205.5" y2="462" stroke="#ececec" stroke-width="1"/><line x1="1267.5" y1="174" x2="1267.5" y2="462" stroke="#ececec" stroke-width="1"/><line x1="862" y1="452.5" x2="1330" y2="452.5" stroke="#ececec" stroke-width="1"/><line x1="862" y1="414.5" x2="1330" y2="414.5" stroke="#ececec" stroke-width="1"/><line x1="862" y1="375.5" x2="1330" y2="375.5" stroke="#ececec" stroke-width="1"/><line x1="862" y1="337.5" x2="1330" y2="337.5" stroke="#ececec" stroke-width="1"/><line x1="862" y1="298.5" x2="1330" y2="298.5" stroke="#ececec" stroke-width="1"/><line x1="862" y1="260.5" x2="1330" y2="260.5" stroke="#ececec" stroke-width="1"/><line x1="862" y1="222.5" x2="1330" y2="222.5" stroke="#ececec" stroke-width="1"/><line x1="862" y1="183.5" x2="1330" y2="183.5" stroke="#ececec" stroke-width="1"/><line x1="924.5" y1="174" x2="924.5" y2="462" stroke="#c8c8c8" stroke-width="1"/><line x1="986.5" y1="174" x2="986.5" y2="462" stroke="#c8c8c8" stroke-width="1"/><line x1="1049.5" y1="174" x2="1049.5" y2="462" stroke="#c8c8c8" stroke-width="1"/><line x1="1111.5" y1="174" x2="1111.5" y2="462" stroke="#c8c8c8" stroke-width="1"/><line x1="1174.5" y1="174" x2="1174.5" y2="462" stroke="#c8c8c8" stroke-width="1"/><line x1="1236.5" y1="174" x2="1236.5" y2="462" stroke="#c8c8c8" stroke-width="1"/><line x1="1298.5" y1="174" x2="1298.5" y2="462" stroke="#c8c8c8" stroke-width="1"/><line x1="862" y1="433.5" x2="1330" y2="433.5" stroke="#c8c8c8" stroke-width="1"/><line x1="862" y1="394.5" x2="1330" y2="394.5" stroke="#c8c8c8" stroke-width="1"/><line x1="862" y1="356.5" x2="1330" y2="356.5" stroke="#c8c8c8" stroke-width="1"/><line x1="862" y1="318.5" x2="1330" y2="318.5" stroke="#c8c8c8" stroke-width="1"/><line x1="862" y1="279.5" x2="1330" y2="279.5" stroke="#c8c8c8" stroke-width="1"/><line x1="862" y1="241.5" x2="1330" y2="241.5" stroke="#c8c8c8" stroke-width="1"/><line x1="862" y1="202.5" x2="1330" y2="202.5" stroke="#c8c8c8" stroke-width="1"/><path d="M862.0,309.1 L863.1,302.5 L864.2,299.5 L865.2,300.6 L866.3,304.5 L867.4,309.8 L868.5,314.7 L869.6,318.1 L870.7,319.1 L871.8,317.0 L872.8,311.8 L873.9,304.4 L875.0,296.3 L876.1,289.7 L877.2,286.1 L878.2,285.9 L879.3,287.9 L880.4,289.9 L881.5,290.1 L882.6,287.9 L883.7,284.2 L884.8,281.4 L885.8,281.0 L886.9,283.6 L888.0,287.8 L889.1,291.4 L890.2,292.5 L891.2,290.7 L892.3,286.9 L893.4,282.5 L894.5,278.9 L895.6,276.4 L896.7,274.7 L897.8,273.4 L898.8,272.6 L899.9,272.8 L901.0,274.6 L902.1,277.5 L903.2,280.6 L904.2,282.5 L905.3,282.4 L906.4,281.0 L907.5,279.6 L908.6,279.8 L909.7,282.0 L910.8,285.1 L911.8,287.1 L912.9,286.7 L914.0,284.3 L915.1,281.7 L916.2,281.0 L917.2,283.4 L918.3,288.0 L919.4,292.4 L920.5,294.1 L921.6,292.5 L922.7,289.0 L923.8,286.9 L924.8,288.4 L925.9,294.1 L927.0,301.5 L928.1,307.3 L929.2,308.8 L930.2,305.9 L931.3,301.3 L932.4,298.7 L933.5,300.7 L934.6,307.4 L935.7,316.3 L936.8,323.6 L937.8,326.8 L938.9,325.0 L940.0,320.1 L941.1,314.5 L942.2,310.7 L943.2,309.7 L944.3,311.6 L945.4,316.3 L946.5,323.1 L947.6,331.4 L948.7,340.1 L949.8,347.2 L950.8,350.6 L951.9,349.2 L953.0,343.6 L954.1,336.4 L955.2,331.1 L956.2,330.2 L957.3,334.2 L958.4,341.0 L959.5,347.6 L960.6,351.2 L961.7,351.3 L962.8,349.3 L963.8,347.6 L964.9,348.0 L966.0,350.4 L967.1,353.7 L968.2,356.1 L969.2,356.7 L970.3,356.1 L971.4,355.4 L972.5,355.9 L973.6,357.7 L974.7,359.5 L975.8,360.3 L976.8,359.3 L977.9,357.0 L979.0,354.7 L980.1,353.7 L981.2,354.1 L982.2,355.2 L983.3,356.1 L984.4,356.1 L985.5,355.3 L986.6,354.6 L987.7,354.7 L988.8,355.4 L989.8,356.0 L990.9,355.4 L992.0,353.3 L993.1,350.6 L994.2,348.6 L995.2,348.3 L996.3,349.5 L997.4,350.9 L998.5,350.7 L999.6,347.9 L1000.7,342.9 L1001.8,337.6 L1002.8,333.9 L1003.9,332.8 L1005.0,334.0 L1006.1,335.9 L1007.2,336.8 L1008.2,336.0 L1009.3,333.7 L1010.4,331.2 L1011.5,329.1 L1012.6,327.6 L1013.7,326.1 L1014.8,323.9 L1015.8,321.1 L1016.9,318.4 L1018.0,316.8 L1019.1,316.5 L1020.2,317.1 L1021.2,317.0 L1022.3,314.9 L1023.4,310.3 L1024.5,304.4 L1025.6,299.1 L1026.7,296.3 L1027.8,296.6 L1028.8,299.2 L1029.9,302.2 L1031.0,303.8 L1032.1,303.0 L1033.2,300.1 L1034.2,296.2 L1035.3,292.6 L1036.4,290.1 L1037.5,288.9 L1038.6,288.7 L1039.7,289.1 L1040.8,289.4 L1041.8,288.9 L1042.9,287.1 L1044.0,284.0 L1045.1,279.7 L1046.2,275.6 L1047.2,273.0 L1048.3,272.9 L1049.4,275.6 L1050.5,279.9 L1051.6,284.2 L1052.7,286.7 L1053.8,286.9 L1054.8,285.2 L1055.9,282.9 L1057.0,281.0 L1058.1,279.9 L1059.2,279.1 L1060.2,277.9 L1061.3,276.2 L1062.4,274.5 L1063.5,274.0 L1064.6,275.5 L1065.7,278.5 L1066.8,281.7 L1067.8,283.8 L1068.9,283.9 L1070.0,282.7 L1071.1,281.9 L1072.2,283.1 L1073.2,287.0 L1074.3,292.4 L1075.4,297.3 L1076.5,300.0 L1077.6,299.7 L1078.7,297.2 L1079.8,294.0 L1080.8,291.4 L1081.9,290.1 L1083.0,290.0 L1084.1,290.8 L1085.2,292.8 L1086.2,296.6 L1087.3,302.3 L1088.4,309.3 L1089.5,315.8 L1090.6,319.5 L1091.7,319.2 L1092.8,315.7 L1093.8,311.6 L1094.9,310.2 L1096.0,313.2 L1097.1,319.9 L1098.2,327.7 L1099.2,332.8 L1100.3,333.2 L1101.4,329.3 L1102.5,323.8 L1103.6,320.0 L1104.7,320.1 L1105.8,323.8 L1106.8,329.3 L1107.9,334.3 L1109.0,337.8 L1110.1,340.1 L1111.2,342.8 L1112.2,346.6 L1113.3,351.3 L1114.4,355.2 L1115.5,356.5 L1116.6,354.5 L1117.7,350.2 L1118.8,345.4 L1119.8,342.1 L1120.9,341.4 L1122.0,343.0 L1123.1,345.6 L1124.2,348.6 L1125.2,351.7 L1126.3,355.1 L1127.4,358.9 L1128.5,362.3 L1129.6,364.2 L1130.7,363.6 L1131.8,360.6 L1132.8,356.8 L1133.9,354.1 L1135.0,353.9 L1136.1,356.0 L1137.2,358.8 L1138.2,360.1 L1139.3,358.8 L1140.4,355.5 L1141.5,352.3 L1142.6,351.1 L1143.7,352.4 L1144.8,355.2 L1145.8,357.0 L1146.9,356.0 L1148.0,352.1 L1149.1,347.1 L1150.2,343.6 L1151.2,343.3 L1152.3,346.1 L1153.4,350.0 L1154.5,352.8 L1155.6,353.0 L1156.7,350.5 L1157.8,346.6 L1158.8,342.8 L1159.9,339.6 L1161.0,336.4 L1162.1,332.7 L1163.2,328.3 L1164.2,324.3 L1165.3,322.2 L1166.4,323.1 L1167.5,326.4 L1168.6,330.3 L1169.7,332.4 L1170.8,331.0 L1171.8,326.7 L1172.9,321.1 L1174.0,316.7 L1175.1,314.7 L1176.2,314.7 L1177.2,315.2 L1178.3,314.5 L1179.4,311.9 L1180.5,308.0 L1181.6,304.3 L1182.7,301.6 L1183.8,299.8 L1184.8,298.2 L1185.9,295.9 L1187.0,293.0 L1188.1,290.8 L1189.2,290.7 L1190.2,293.3 L1191.3,297.8 L1192.4,302.0 L1193.5,303.5 L1194.6,300.7 L1195.7,294.2 L1196.8,286.1 L1197.8,278.8 L1198.9,274.3 L1200.0,273.1 L1201.1,274.6 L1202.2,277.5 L1203.2,280.8 L1204.3,283.8 L1205.4,286.2 L1206.5,287.6 L1207.6,287.4 L1208.7,285.1 L1209.8,281.0 L1210.8,276.0 L1211.9,271.8 L1213.0,270.0 L1214.1,271.1 L1215.2,274.8 L1216.2,279.7 L1217.3,284.1 L1218.4,286.8 L1219.5,287.5 L1220.6,286.4 L1221.7,284.2 L1222.8,281.5 L1223.8,279.3 L1224.9,278.0 L1226.0,278.3 L1227.1,280.2 L1228.2,283.3 L1229.2,286.3 L1230.3,288.4 L1231.4,289.1 L1232.5,288.8 L1233.6,289.1 L1234.7,291.3 L1235.8,295.7 L1236.8,301.4 L1237.9,306.1 L1239.0,307.8 L1240.1,305.8 L1241.2,301.2 L1242.2,296.6 L1243.3,294.8 L1244.4,297.0 L1245.5,302.5 L1246.6,309.1 L1247.7,314.3 L1248.8,316.8 L1249.8,316.8 L1250.9,315.8 L1252.0,315.6 L1253.1,316.9 L1254.2,319.8 L1255.2,323.4 L1256.3,327.0 L1257.4,330.3 L1258.5,333.1 L1259.6,335.3 L1260.7,336.5 L1261.8,336.2 L1262.8,334.4 L1263.9,332.1 L1265.0,330.6 L1266.1,331.4 L1267.2,334.8 L1268.2,339.7 L1269.3,344.2 L1270.4,346.6 L1271.5,346.6 L1272.6,345.7 L1273.7,345.7 L1274.8,348.3 L1275.8,353.0 L1276.9,358.1 L1278.0,361.1 L1279.1,360.6 L1280.2,357.2 L1281.2,352.9 L1282.3,350.2 L1283.4,350.4 L1284.5,353.0 L1285.6,355.8 L1286.7,357.0 L1287.8,355.6 L1288.8,352.6 L1289.9,349.9 L1291.0,349.3 L1292.1,351.5 L1293.2,355.8 L1294.2,360.6 L1295.3,364.9 L1296.4,367.6 L1297.5,368.6 L1298.6,367.6 L1299.7,364.3 L1300.8,358.4 L1301.8,350.5 L1302.9,342.4 L1304.0,336.4 L1305.1,334.7 L1306.2,337.7 L1307.2,343.9 L1308.3,350.2 L1309.4,353.7 L1310.5,353.3 L1311.6,350.0 L1312.7,346.0 L1313.8,343.5 L1314.8,343.3 L1315.9,344.1 L1317.0,343.8 L1318.1,341.2 L1319.2,336.5 L1320.2,331.2 L1321.3,327.4 L1322.4,325.6 L1323.5,325.1 L1324.6,324.0 L1325.7,321.1 L1326.8,316.9 L1327.8,313.1 L1328.9,312.0 L1330.0,314.4" fill="none" stroke="#4062a2" stroke-width="1"/><path d="M862.0,313.1 L863.1,311.2 L864.2,311.3 L865.2,311.7 L866.3,311.2 L867.4,310.1 L868.5,308.9 L869.6,308.4 L870.7,307.9 L871.8,306.5 L872.8,303.6 L873.9,299.4 L875.0,295.4 L876.1,292.8 L877.2,292.2 L878.2,293.0 L879.3,293.9 L880.4,293.8 L881.5,292.3 L882.6,289.7 L883.7,286.8 L884.8,284.4 L885.8,283.2 L886.9,283.6 L888.0,285.3 L889.1,287.1 L890.2,287.5 L891.2,285.4 L892.3,281.0 L893.4,275.9 L894.5,272.9 L895.6,273.6 L896.7,277.9 L897.8,283.1 L898.8,286.1 L899.9,284.9 L901.0,280.4 L902.1,275.4 L903.2,273.1 L904.2,274.4 L905.3,277.8 L906.4,280.5 L907.5,280.9 L908.6,279.6 L909.7,279.1 L910.8,281.5 L911.8,286.6 L912.9,291.5 L914.0,293.0 L915.1,289.5 L916.2,283.0 L917.2,277.5 L918.3,276.4 L919.4,280.2 L920.5,286.5 L921.6,292.0 L922.7,294.9 L923.8,296.0 L924.8,298.0 L925.9,302.3 L927.0,307.9 L928.1,311.5 L929.2,310.2 L930.2,303.7 L931.3,295.4 L932.4,290.1 L933.5,291.5 L934.6,299.5 L935.7,310.6 L936.8,320.2 L937.8,325.2 L938.9,325.5 L940.0,323.6 L941.1,321.7 L942.2,321.0 L943.2,321.3 L944.3,321.6 L945.4,321.9 L946.5,323.4 L947.6,326.9 L948.7,332.4 L949.8,338.1 L950.8,341.5 L951.9,341.1 L953.0,337.8 L954.1,334.2 L955.2,332.9 L956.2,335.4 L957.3,340.7 L958.4,346.4 L959.5,350.2 L960.6,351.3 L961.7,350.7 L962.8,350.2 L963.8,351.0 L964.9,352.9 L966.0,354.4 L967.1,354.3 L968.2,352.3 L969.2,349.8 L970.3,348.8 L971.4,350.8 L972.5,355.2 L973.6,359.9 L974.7,362.4 L975.8,361.2 L976.8,357.3 L977.9,353.3 L979.0,352.0 L980.1,354.4 L981.2,358.9 L982.2,362.6 L983.3,362.9 L984.4,359.5 L985.5,354.7 L986.6,351.6 L987.7,352.1 L988.8,355.1 L989.8,357.3 L990.9,355.8 L992.0,350.1 L993.1,343.2 L994.2,339.5 L995.2,341.6 L996.3,348.6 L997.4,356.1 L998.5,359.2 L999.6,355.7 L1000.7,347.5 L1001.8,339.3 L1002.8,334.9 L1003.9,334.9 L1005.0,336.5 L1006.1,336.0 L1007.2,331.9 L1008.2,326.4 L1009.3,323.2 L1010.4,325.1 L1011.5,330.9 L1012.6,336.5 L1013.7,337.3 L1014.8,331.6 L1015.8,322.0 L1016.9,313.4 L1018.0,309.6 L1019.1,311.1 L1020.2,314.7 L1021.2,316.5 L1022.3,314.6 L1023.4,310.1 L1024.5,305.7 L1025.6,303.5 L1026.7,303.2 L1027.8,303.3 L1028.8,301.9 L1029.9,299.4 L1031.0,297.3 L1032.1,297.2 L1033.2,298.8 L1034.2,299.6 L1035.3,297.4 L1036.4,291.7 L1037.5,284.8 L1038.6,280.3 L1039.7,280.7 L1040.8,284.9 L1041.8,289.7 L1042.9,291.5 L1044.0,289.1 L1045.1,284.5 L1046.2,281.0 L1047.2,280.7 L1048.3,282.7 L1049.4,284.1 L1050.5,282.3 L1051.6,277.4 L1052.7,272.0 L1053.8,269.7 L1054.8,271.9 L1055.9,277.4 L1057.0,282.9 L1058.1,285.6 L1059.2,285.3 L1060.2,283.5 L1061.3,282.3 L1062.4,282.6 L1063.5,283.1 L1064.6,281.9 L1065.7,278.4 L1066.8,274.0 L1067.8,271.4 L1068.9,272.9 L1070.0,278.4 L1071.1,285.9 L1072.2,292.4 L1073.2,296.0 L1074.3,296.5 L1075.4,294.8 L1076.5,292.5 L1077.6,290.3 L1078.7,288.9 L1079.8,288.8 L1080.8,290.5 L1081.9,294.2 L1083.0,299.2 L1084.1,303.8 L1085.2,306.0 L1086.2,305.2 L1087.3,302.8 L1088.4,301.0 L1089.5,302.0 L1090.6,305.8 L1091.7,310.7 L1092.8,314.5 L1093.8,316.4 L1094.9,317.5 L1096.0,319.6 L1097.1,324.0 L1098.2,329.3 L1099.2,332.7 L1100.3,331.7 L1101.4,326.1 L1102.5,318.9 L1103.6,314.5 L1104.7,316.0 L1105.8,323.3 L1106.8,333.5 L1107.9,342.4 L1109.0,347.3 L1110.1,348.2 L1111.2,347.0 L1112.2,345.8 L1113.3,345.7 L1114.4,346.1 L1115.5,346.0 L1116.6,345.1 L1117.7,344.2 L1118.8,344.4 L1119.8,346.4 L1120.9,349.5 L1122.0,352.1 L1123.1,353.2 L1124.2,352.6 L1125.2,351.4 L1126.3,351.2 L1127.4,353.1 L1128.5,356.7 L1129.6,361.0 L1130.7,364.6 L1131.8,366.2 L1132.8,365.3 L1133.9,362.1 L1135.0,357.3 L1136.1,352.1 L1137.2,348.1 L1138.2,346.5 L1139.3,347.5 L1140.4,350.6 L1141.5,354.6 L1142.6,358.0 L1143.7,360.2 L1144.8,361.0 L1145.8,360.9 L1146.9,359.8 L1148.0,357.6 L1149.1,353.8 L1150.2,348.8 L1151.2,343.6 L1152.3,340.0 L1153.4,339.2 L1154.5,341.1 L1155.6,344.4 L1156.7,347.0 L1157.8,347.6 L1158.8,345.8 L1159.9,342.2 L1161.0,337.9 L1162.1,333.9 L1163.2,330.5 L1164.2,328.2 L1165.3,327.4 L1166.4,328.2 L1167.5,330.2 L1168.6,332.2 L1169.7,332.3 L1170.8,329.4 L1171.8,323.7 L1172.9,317.3 L1174.0,312.3 L1175.1,310.3 L1176.2,310.7 L1177.2,311.9 L1178.3,311.9 L1179.4,310.2 L1180.5,307.8 L1181.6,306.0 L1182.7,305.7 L1183.8,305.9 L1184.8,305.0 L1185.9,301.9 L1187.0,297.3 L1188.1,293.0 L1189.2,291.1 L1190.2,292.2 L1191.3,294.8 L1192.4,296.6 L1193.5,295.8 L1194.6,292.2 L1195.7,287.3 L1196.8,283.1 L1197.8,280.8 L1198.9,280.1 L1200.0,280.1 L1201.1,280.1 L1202.2,280.2 L1203.2,281.1 L1204.3,283.2 L1205.4,286.1 L1206.5,288.2 L1207.6,288.0 L1208.7,285.0 L1209.8,279.9 L1210.8,274.6 L1211.9,271.1 L1213.0,270.3 L1214.1,272.4 L1215.2,276.1 L1216.2,280.0 L1217.3,282.6 L1218.4,283.1 L1219.5,281.8 L1220.6,279.9 L1221.7,279.1 L1222.8,280.6 L1223.8,284.1 L1224.9,288.0 L1226.0,290.1 L1227.1,289.1 L1228.2,285.6 L1229.2,282.0 L1230.3,280.9 L1231.4,283.4 L1232.5,288.3 L1233.6,293.1 L1234.7,295.6 L1235.8,295.6 L1236.8,295.0 L1237.9,295.7 L1239.0,298.5 L1240.1,301.8 L1241.2,303.5 L1242.2,302.5 L1243.3,300.4 L1244.4,300.4 L1245.5,305.0 L1246.6,313.4 L1247.7,321.8 L1248.8,325.4 L1249.8,322.3 L1250.9,314.7 L1252.0,307.8 L1253.1,306.2 L1254.2,311.1 L1255.2,319.4 L1256.3,326.3 L1257.4,329.1 L1258.5,328.8 L1259.6,329.0 L1260.7,332.7 L1261.8,339.4 L1262.8,345.6 L1263.9,347.3 L1265.0,343.3 L1266.1,336.4 L1267.2,331.6 L1268.2,332.3 L1269.3,337.8 L1270.4,344.1 L1271.5,347.1 L1272.6,345.8 L1273.7,342.9 L1274.8,342.5 L1275.8,347.1 L1276.9,354.9 L1278.0,361.5 L1279.1,363.3 L1280.2,360.0 L1281.2,355.1 L1282.3,352.6 L1283.4,354.2 L1284.5,358.0 L1285.6,359.8 L1286.7,357.1 L1287.8,351.1 L1288.8,346.0 L1289.9,346.0 L1291.0,351.8 L1292.1,360.1 L1293.2,365.7 L1294.2,365.4 L1295.3,360.3 L1296.4,354.7 L1297.5,352.7 L1298.6,355.5 L1299.7,360.1 L1300.8,362.0 L1301.8,358.8 L1302.9,351.9 L1304.0,345.3 L1305.1,343.0 L1306.2,345.7 L1307.2,350.6 L1308.3,353.1 L1309.4,350.7 L1310.5,344.0 L1311.6,337.0 L1312.7,333.5 L1313.8,335.3 L1314.8,340.8 L1315.9,346.4 L1317.0,348.9 L1318.1,347.2 L1319.2,342.8 L1320.2,337.6 L1321.3,333.1 L1322.4,329.0 L1323.5,324.5 L1324.6,318.8 L1325.7,312.8 L1326.8,308.8 L1327.8,308.7 L1328.9,313.3 L1330.0,321.0" fill="none" stroke="#cc4a5c" stroke-width="1"/><rect x="862" y="174" width="468" height="288" fill="none" stroke="#5a5a5a" stroke-width="1.3"/></svg><div style="left:95.79999999999995px;width:2000px;text-align:center;top:161.49px;font-size:11.7px;line-height:11.7px;font-weight:400;color:#111;white-space:pre;">Scope</div><div style="left:-141.5px;width:1000px;text-align:right;top:427.66px;font-size:11.5px;line-height:11.5px;font-weight:400;color:#111;white-space:pre;">-12u</div><div style="left:-141.5px;width:1000px;text-align:right;top:389.26px;font-size:11.5px;line-height:11.5px;font-weight:400;color:#111;white-space:pre;">-8u</div><div style="left:-141.5px;width:1000px;text-align:right;top:350.86px;font-size:11.5px;line-height:11.5px;font-weight:400;color:#111;white-space:pre;">-4u</div><div style="left:-141.5px;width:1000px;text-align:right;top:312.46px;font-size:11.5px;line-height:11.5px;font-weight:400;color:#111;white-space:pre;">0</div><div style="left:-141.5px;width:1000px;text-align:right;top:274.06px;font-size:11.5px;line-height:11.5px;font-weight:400;color:#111;white-space:pre;">4u</div><div style="left:-141.5px;width:1000px;text-align:right;top:235.66px;font-size:11.5px;line-height:11.5px;font-weight:400;color:#111;white-space:pre;">8u</div><div style="left:-141.5px;width:1000px;text-align:right;top:197.26px;font-size:11.5px;line-height:11.5px;font-weight:400;color:#111;white-space:pre;">12u</div><div style="left:-138.0px;width:2000px;text-align:center;top:467.26px;font-size:11.5px;line-height:11.5px;font-weight:400;color:#111;white-space:pre;">0</div><div style="left:-75.60000000000002px;width:2000px;text-align:center;top:467.26px;font-size:11.5px;line-height:11.5px;font-weight:400;color:#111;white-space:pre;">400u</div><div style="left:-13.200000000000045px;width:2000px;text-align:center;top:467.26px;font-size:11.5px;line-height:11.5px;font-weight:400;color:#111;white-space:pre;">800u</div><div style="left:49.200000000000045px;width:2000px;text-align:center;top:467.26px;font-size:11.5px;line-height:11.5px;font-weight:400;color:#111;white-space:pre;">1.2m</div><div style="left:111.59999999999991px;width:2000px;text-align:center;top:467.26px;font-size:11.5px;line-height:11.5px;font-weight:400;color:#111;white-space:pre;">1.6m</div><div style="left:174.0px;width:2000px;text-align:center;top:467.26px;font-size:11.5px;line-height:11.5px;font-weight:400;color:#111;white-space:pre;">2.0m</div><div style="left:236.4000000000001px;width:2000px;text-align:center;top:467.26px;font-size:11.5px;line-height:11.5px;font-weight:400;color:#111;white-space:pre;">2.4m</div><div style="left:298.79999999999995px;width:2000px;text-align:center;top:467.26px;font-size:11.5px;line-height:11.5px;font-weight:400;color:#111;white-space:pre;">2.8m</div><div style="left:95px;width:2000px;text-align:center;top:479.43px;font-size:11.3px;line-height:11.3px;font-weight:400;color:#111;white-space:pre;">Time (s)</div><div style="left:725px;top:311px;width:200px;height:12px;font-size:11.5px;line-height:12px;text-align:center;transform:rotate(-90deg);color:#111;white-space:pre;">Instantaneous Level (D)</div><svg style="position:absolute;left:1366px;top:156px;overflow:hidden;" width="549" height="341" viewBox="1366 156 549 341"><line x1="1417" y1="454.5" x2="1884" y2="454.5" stroke="#ececec"/><line x1="1417" y1="425.5" x2="1884" y2="425.5" stroke="#ececec"/><line x1="1417" y1="396.5" x2="1884" y2="396.5" stroke="#ececec"/><line x1="1417" y1="367.5" x2="1884" y2="367.5" stroke="#ececec"/><line x1="1417" y1="339.5" x2="1884" y2="339.5" stroke="#ececec"/><line x1="1417" y1="310.5" x2="1884" y2="310.5" stroke="#ececec"/><line x1="1417" y1="281.5" x2="1884" y2="281.5" stroke="#ececec"/><line x1="1417" y1="252.5" x2="1884" y2="252.5" stroke="#ececec"/><line x1="1417" y1="223.5" x2="1884" y2="223.5" stroke="#ececec"/><line x1="1417" y1="194.5" x2="1884" y2="194.5" stroke="#ececec"/><line x1="1463.5" y1="174" x2="1463.5" y2="462" stroke="#e8e8e8"/><line x1="1491.5" y1="174" x2="1491.5" y2="462" stroke="#e8e8e8"/><line x1="1501.5" y1="174" x2="1501.5" y2="462" stroke="#e8e8e8"/><line x1="1510.5" y1="174" x2="1510.5" y2="462" stroke="#e8e8e8"/><line x1="1518.5" y1="174" x2="1518.5" y2="462" stroke="#e8e8e8"/><line x1="1619.5" y1="174" x2="1619.5" y2="462" stroke="#e8e8e8"/><line x1="1646.5" y1="174" x2="1646.5" y2="462" stroke="#e8e8e8"/><line x1="1657.5" y1="174" x2="1657.5" y2="462" stroke="#e8e8e8"/><line x1="1666.5" y1="174" x2="1666.5" y2="462" stroke="#e8e8e8"/><line x1="1674.5" y1="174" x2="1674.5" y2="462" stroke="#e8e8e8"/><line x1="1775.5" y1="174" x2="1775.5" y2="462" stroke="#e8e8e8"/><line x1="1802.5" y1="174" x2="1802.5" y2="462" stroke="#e8e8e8"/><line x1="1813.5" y1="174" x2="1813.5" y2="462" stroke="#e8e8e8"/><line x1="1822.5" y1="174" x2="1822.5" y2="462" stroke="#e8e8e8"/><line x1="1830.5" y1="174" x2="1830.5" y2="462" stroke="#e8e8e8"/><line x1="1444.5" y1="174" x2="1444.5" y2="462" stroke="#c8c8c8"/><line x1="1478.5" y1="174" x2="1478.5" y2="462" stroke="#c8c8c8"/><line x1="1525.5" y1="174" x2="1525.5" y2="462" stroke="#c8c8c8"/><line x1="1572.5" y1="174" x2="1572.5" y2="462" stroke="#c8c8c8"/><line x1="1600.5" y1="174" x2="1600.5" y2="462" stroke="#c8c8c8"/><line x1="1634.5" y1="174" x2="1634.5" y2="462" stroke="#c8c8c8"/><line x1="1681.5" y1="174" x2="1681.5" y2="462" stroke="#c8c8c8"/><line x1="1728.5" y1="174" x2="1728.5" y2="462" stroke="#c8c8c8"/><line x1="1755.5" y1="174" x2="1755.5" y2="462" stroke="#c8c8c8"/><line x1="1790.5" y1="174" x2="1790.5" y2="462" stroke="#c8c8c8"/><line x1="1837.5" y1="174" x2="1837.5" y2="462" stroke="#c8c8c8"/><line x1="1417" y1="440.5" x2="1884" y2="440.5" stroke="#c8c8c8"/><line x1="1417" y1="411.5" x2="1884" y2="411.5" stroke="#c8c8c8"/><line x1="1417" y1="382.5" x2="1884" y2="382.5" stroke="#c8c8c8"/><line x1="1417" y1="353.5" x2="1884" y2="353.5" stroke="#c8c8c8"/><line x1="1417" y1="324.5" x2="1884" y2="324.5" stroke="#c8c8c8"/><line x1="1417" y1="295.5" x2="1884" y2="295.5" stroke="#c8c8c8"/><line x1="1417" y1="266.5" x2="1884" y2="266.5" stroke="#c8c8c8"/><line x1="1417" y1="238.5" x2="1884" y2="238.5" stroke="#c8c8c8"/><line x1="1417" y1="209.5" x2="1884" y2="209.5" stroke="#c8c8c8"/><line x1="1417" y1="180.5" x2="1884" y2="180.5" stroke="#c8c8c8"/><path d="M1417.1,383.8 L1417.4,383.8 L1417.6,383.8 L1417.9,383.7 L1418.9,382.6 L1420.6,380.4 L1422.1,378.6 L1423.7,378.0 L1425.2,378.5 L1426.7,379.4 L1428.1,380.2 L1429.6,380.5 L1430.9,383.2 L1432.3,389.0 L1433.6,395.9 L1434.9,401.8 L1436.2,405.1 L1437.5,405.1 L1438.7,403.1 L1439.9,399.7 L1441.1,395.4 L1442.3,391.0 L1443.5,387.2 L1444.6,384.3 L1445.7,382.9 L1446.8,383.0 L1447.9,384.3 L1448.9,386.6 L1450.0,389.7 L1451.0,392.9 L1452.0,396.0 L1453.0,398.6 L1454.0,400.3 L1455.0,401.0 L1455.9,401.2 L1456.9,401.8 L1457.8,402.7 L1458.7,403.9 L1459.6,405.4 L1460.5,407.0 L1461.4,408.6 L1462.3,410.1 L1463.1,411.4 L1464.0,412.5 L1464.8,413.4 L1465.7,413.9 L1466.5,414.1 L1467.3,413.7 L1468.1,412.6 L1468.9,410.9 L1469.7,408.7 L1470.4,406.2 L1471.2,403.5 L1471.9,400.7 L1472.7,398.2 L1473.4,395.9 L1474.2,394.0 L1474.9,392.7 L1475.6,391.9 L1476.3,391.7 L1477.0,391.9 L1477.7,392.5 L1478.4,393.4 L1479.1,394.5 L1479.7,395.8 L1480.4,397.2 L1481.1,398.7 L1481.7,400.0 L1482.3,401.2 L1483.0,402.3 L1483.6,403.1 L1484.3,403.7 L1484.9,403.9 L1485.5,403.8 L1486.1,403.0 L1486.7,401.6 L1487.3,400.0 L1487.9,398.5 L1488.5,397.3 L1489.1,396.8 L1489.7,396.9 L1490.2,397.5 L1490.8,398.4 L1491.4,399.7 L1491.9,401.3 L1492.5,403.0 L1493.0,404.7 L1493.6,406.4 L1494.1,407.9 L1494.7,409.2 L1495.2,410.2 L1495.7,410.9 L1496.2,411.2 L1496.8,411.1 L1497.3,410.8 L1497.8,410.3 L1498.3,409.7 L1498.8,409.1 L1499.3,408.5 L1499.8,408.1 L1500.3,407.9 L1500.8,407.8 L1501.3,407.6 L1501.8,407.1 L1502.3,406.5 L1502.7,405.7 L1503.2,404.8 L1503.7,403.8 L1504.1,402.7 L1504.6,401.6 L1505.1,400.5 L1505.5,399.4 L1506.0,398.5 L1506.4,397.6 L1506.9,396.9 L1507.3,396.4 L1507.8,396.0 L1508.2,395.8 L1508.6,395.8 L1509.1,396.5 L1509.5,397.8 L1509.9,399.8 L1510.4,402.4 L1510.8,405.2 L1511.2,408.3 L1511.6,411.4 L1512.0,414.4 L1512.5,417.1 L1512.9,419.3 L1513.3,421.1 L1513.7,422.2 L1514.1,414.5 L1514.8,411.7 L1517.1,407.7 L1519.3,430.6 L1521.5,414.0 L1523.5,398.6 L1525.6,404.4 L1527.5,407.5 L1529.4,407.5 L1531.3,409.2 L1533.1,407.0 L1534.8,405.7 L1536.5,413.0 L1538.2,403.9 L1539.8,406.3 L1541.4,406.4 L1543.0,411.2 L1544.5,410.4 L1546.0,403.6 L1547.4,417.8 L1548.9,401.1 L1550.3,407.7 L1551.6,409.4 L1553.0,412.0 L1554.3,408.3 L1555.6,406.8 L1556.8,404.0 L1558.1,407.0 L1559.3,404.0 L1560.5,403.0 L1561.7,406.4 L1562.8,404.5 L1564.0,413.4 L1565.1,404.1 L1566.2,420.2 L1567.2,411.0 L1568.3,413.2 L1569.4,403.7 L1570.4,407.8 L1571.4,406.3 L1572.4,403.6 L1573.4,409.4 L1574.4,412.9 L1575.3,408.0 L1576.3,415.6 L1577.2,407.9 L1578.1,424.3 L1579.0,412.8 L1579.9,403.2 L1580.8,410.1 L1581.7,407.4 L1582.5,408.6 L1583.4,402.0 L1584.2,410.6 L1585.1,414.5 L1585.9,400.5 L1586.7,408.8 L1587.5,410.9 L1588.3,428.3 L1589.1,407.6 L1589.8,407.6 L1590.6,406.9 L1591.4,406.5 L1592.1,427.8 L1592.8,406.9 L1593.6,414.2 L1594.3,408.1 L1595.0,411.8 L1595.7,411.7 L1596.4,413.1 L1597.1,405.5 L1597.8,408.5 L1598.5,412.9 L1599.2,405.0 L1599.8,415.9 L1600.5,406.6 L1601.1,412.6 L1601.8,404.4 L1602.4,404.0 L1603.1,412.4 L1603.7,403.4 L1604.3,414.9 L1604.9,409.1 L1605.5,404.9 L1606.1,416.2 L1606.7,404.9 L1607.3,404.9 L1607.9,418.3 L1608.5,405.1 L1609.1,412.3 L1609.7,410.9 L1610.2,402.5 L1610.8,437.1 L1611.4,403.4 L1611.9,410.7 L1612.5,402.2 L1613.0,405.8 L1613.6,407.1 L1614.1,413.5 L1614.6,415.1 L1615.2,408.2 L1615.7,404.7 L1616.2,402.8 L1616.7,402.3 L1617.3,402.9 L1617.8,431.8 L1618.3,416.9 L1618.8,407.1 L1619.3,411.1 L1619.8,407.9 L1620.3,414.5 L1620.7,410.0 L1621.2,412.3 L1621.7,409.1 L1622.2,417.1 L1622.7,402.2 L1623.1,404.4 L1623.6,407.6 L1624.1,424.5 L1624.5,414.2 L1625.0,411.0 L1625.4,405.3 L1625.9,424.1 L1626.3,419.2 L1626.8,400.1 L1627.2,421.4 L1627.7,413.2 L1628.1,412.4 L1628.5,408.3 L1629.0,416.6 L1629.4,419.3 L1629.8,406.2 L1630.3,422.0 L1630.7,412.0 L1631.1,405.1 L1631.5,404.8 L1631.9,410.9 L1632.3,409.8 L1632.8,411.1 L1633.2,410.4 L1633.6,409.1 L1634.0,422.8 L1634.4,411.0 L1634.8,401.6 L1635.2,402.7 L1635.5,414.6 L1635.9,419.6 L1636.3,407.1 L1636.7,404.9 L1637.1,405.9 L1637.5,420.7 L1637.8,439.1 L1638.2,405.2 L1638.6,421.5 L1639.0,403.1 L1639.3,429.9 L1639.7,419.8 L1640.1,406.9 L1640.4,400.9 L1640.8,404.7 L1641.2,405.3 L1641.5,406.2 L1641.9,405.6 L1642.2,424.2 L1642.6,408.7 L1642.9,415.3 L1643.3,415.1 L1643.6,405.5 L1644.0,412.3 L1644.3,412.7 L1644.7,422.3 L1645.0,399.8 L1645.3,405.6 L1645.7,406.6 L1646.0,406.9 L1646.4,410.1 L1646.7,402.6 L1647.0,421.5 L1647.3,402.0 L1647.7,410.8 L1648.0,417.2 L1648.3,416.8 L1648.6,413.5 L1649.0,406.6 L1649.3,414.0 L1649.6,411.4 L1649.9,408.4 L1650.2,416.2 L1650.6,410.2 L1650.9,417.8 L1651.2,413.4 L1651.5,419.0 L1651.8,410.2 L1652.1,410.4 L1652.4,404.2 L1652.7,410.2 L1653.0,403.5 L1653.3,405.8 L1653.6,410.4 L1653.9,415.7 L1654.2,406.8 L1654.5,403.5 L1654.8,417.3 L1655.1,417.4 L1655.4,403.4 L1655.7,415.2 L1656.0,413.7 L1656.3,405.9 L1656.5,422.1 L1656.8,414.2 L1657.1,408.5 L1657.4,438.7 L1657.7,411.1 L1658.0,416.6 L1658.2,400.5 L1658.5,409.1 L1658.8,414.7 L1659.1,420.9 L1659.3,402.1 L1659.6,401.0 L1659.9,405.1 L1660.2,414.2 L1660.4,407.2 L1660.7,415.0 L1661.0,400.1 L1661.2,409.2 L1661.5,410.0 L1661.8,406.1 L1662.0,408.7 L1662.3,407.3 L1662.6,417.8 L1662.8,407.2 L1663.1,401.3 L1663.3,413.3 L1663.6,408.2 L1663.9,407.3 L1664.1,413.8 L1664.4,424.4 L1664.6,405.4 L1664.9,405.7 L1665.1,415.1 L1665.4,403.0 L1665.6,409.8 L1665.9,405.1 L1666.1,413.4 L1666.4,409.2 L1666.6,412.9 L1666.9,421.2 L1667.1,422.0 L1667.4,404.9 L1667.6,417.8 L1667.9,411.5 L1668.1,404.2 L1668.3,408.3 L1668.6,411.9 L1668.8,409.4 L1669.1,417.2 L1669.4,404.9 L1669.6,400.5 L1669.9,409.0 L1670.2,407.5 L1670.5,406.6 L1670.7,403.2 L1670.9,408.1 L1671.2,446.7 L1671.4,407.0 L1671.6,409.5 L1671.9,417.5 L1672.1,428.8 L1672.4,407.3 L1672.6,408.7 L1672.9,402.4 L1673.2,426.8 L1673.4,416.2 L1673.7,409.2 L1673.9,413.7 L1674.1,406.5 L1674.4,403.2 L1674.6,401.3 L1674.9,405.6 L1675.2,403.1 L1675.4,405.3 L1675.6,421.7 L1675.8,424.0 L1676.1,419.0 L1676.4,406.4 L1676.6,414.2 L1676.9,405.3 L1677.1,418.2 L1677.4,406.0 L1677.6,408.2 L1677.9,446.5 L1678.1,404.8 L1678.4,410.8 L1678.6,411.9 L1678.9,431.2 L1679.2,418.7 L1679.4,426.0 L1679.6,411.0 L1679.8,406.3 L1680.1,411.9 L1680.4,431.5 L1680.6,416.8 L1680.9,407.7 L1681.1,421.0 L1681.4,396.8 L1681.6,336.1 L1681.9,396.8 L1682.1,404.1 L1682.4,413.3 L1682.6,408.3 L1682.9,430.8 L1683.1,426.8 L1683.4,402.0 L1683.6,398.9 L1683.9,404.3 L1684.1,414.3 L1684.4,400.4 L1684.6,421.7 L1684.9,413.6 L1685.1,401.1 L1685.4,405.6 L1685.6,401.2 L1685.9,411.8 L1686.1,404.8 L1686.4,415.4 L1686.6,410.3 L1686.9,406.1 L1687.1,410.7 L1687.4,406.7 L1687.6,416.4 L1687.9,402.7 L1688.1,402.0 L1688.4,425.1 L1688.6,399.9 L1688.9,424.3 L1689.1,419.7 L1689.4,408.4 L1689.6,417.0 L1689.9,411.7 L1690.1,408.1 L1690.4,409.4 L1690.6,403.8 L1690.9,432.8 L1691.1,424.0 L1691.4,416.9 L1691.6,405.1 L1691.9,413.4 L1692.1,411.2 L1692.4,403.6 L1692.6,405.8 L1692.9,413.4 L1693.1,425.3 L1693.4,405.6 L1693.6,417.3 L1693.9,396.3 L1694.1,417.2 L1694.4,400.8 L1694.6,409.4 L1694.9,400.1 L1695.1,404.9 L1695.4,395.4 L1695.6,418.5 L1695.9,405.9 L1696.1,429.5 L1696.4,413.5 L1696.6,405.4 L1696.9,422.8 L1697.1,419.9 L1697.4,398.2 L1697.6,414.4 L1697.9,409.6 L1698.1,415.1 L1698.4,402.2 L1698.6,404.1 L1698.9,421.1 L1699.1,428.1 L1699.4,398.2 L1699.6,398.2 L1699.9,418.6 L1700.1,428.0 L1700.4,416.3 L1700.6,429.1 L1700.9,401.4 L1701.1,416.3 L1701.4,405.1 L1701.6,419.3 L1701.9,401.6 L1702.1,403.9 L1702.4,411.9 L1702.6,419.3 L1702.9,406.6 L1703.1,399.4 L1703.4,414.4 L1703.6,412.0 L1703.9,403.6 L1704.1,406.1 L1704.4,423.2 L1704.6,413.0 L1704.9,401.0 L1705.1,414.4 L1705.4,399.9 L1705.6,414.3 L1705.9,425.1 L1706.1,418.1 L1706.4,403.4 L1706.6,403.8 L1706.9,426.1 L1707.1,409.2 L1707.4,420.7 L1707.6,420.8 L1707.9,405.1 L1708.1,399.3 L1708.4,412.7 L1708.6,412.6 L1708.9,420.7 L1709.1,425.5 L1709.4,397.9 L1709.6,414.5 L1709.9,404.6 L1710.1,411.4 L1710.4,403.4 L1710.6,399.1 L1710.9,419.6 L1711.1,398.0 L1711.4,437.9 L1711.6,404.9 L1711.9,420.7 L1712.1,414.3 L1712.4,397.8 L1712.6,402.7 L1712.9,415.8 L1713.1,415.5 L1713.4,409.6 L1713.6,397.1 L1713.9,426.4 L1714.1,427.6 L1714.4,409.2 L1714.6,406.0 L1714.9,415.0 L1715.1,407.2 L1715.4,417.6 L1715.6,425.3 L1715.9,409.4 L1716.1,401.1 L1716.4,406.6 L1716.6,403.6 L1716.9,425.0 L1717.1,403.4 L1717.4,415.8 L1717.6,397.8 L1717.9,425.2 L1718.1,427.0 L1718.4,401.7 L1718.6,408.5 L1718.9,433.7 L1719.1,425.1 L1719.4,397.5 L1719.6,421.7 L1719.9,404.8 L1720.1,402.7 L1720.4,418.7 L1720.6,400.2 L1720.9,431.3 L1721.1,403.3 L1721.4,419.5 L1721.6,417.7 L1721.9,406.2 L1722.1,406.8 L1722.4,419.6 L1722.6,404.4 L1722.9,416.1 L1723.1,403.7 L1723.4,413.8 L1723.6,423.5 L1723.9,402.9 L1724.1,418.4 L1724.4,401.9 L1724.6,396.6 L1724.9,440.7 L1725.1,409.0 L1725.4,423.4 L1725.6,408.7 L1725.9,428.7 L1726.1,415.9 L1726.4,399.9 L1726.6,398.8 L1726.9,418.6 L1727.1,396.9 L1727.4,424.3 L1727.6,420.2 L1727.9,405.3 L1728.1,404.0 L1728.4,420.0 L1728.6,418.2 L1728.9,402.9 L1729.1,400.7 L1729.4,420.6 L1729.6,401.9 L1729.9,444.2 L1730.1,406.2 L1730.4,420.0 L1730.6,409.9 L1730.9,398.2 L1731.1,404.0 L1731.4,424.6 L1731.6,435.0 L1731.9,404.9 L1732.1,404.2 L1732.4,424.4 L1732.6,397.2 L1732.9,422.8 L1733.1,447.6 L1733.4,402.3 L1733.6,430.8 L1733.9,405.2 L1734.1,398.7 L1734.4,427.4 L1734.6,400.4 L1734.9,416.6 L1735.1,399.0 L1735.4,428.7 L1735.6,424.6 L1735.9,401.8 L1736.1,431.6 L1736.4,405.1 L1736.6,424.2 L1736.9,407.3 L1737.1,400.8 L1737.4,422.0 L1737.6,421.5 L1737.9,400.3 L1738.1,437.7 L1738.4,397.6 L1738.6,415.4 L1738.9,400.0 L1739.1,421.1 L1739.4,401.1 L1739.6,401.1 L1739.9,424.1 L1740.1,402.1 L1740.4,423.6 L1740.6,409.4 L1740.9,420.3 L1741.1,413.5 L1741.4,409.4 L1741.6,423.6 L1741.9,409.5 L1742.1,413.2 L1742.4,394.3 L1742.6,402.0 L1742.9,426.4 L1743.1,432.4 L1743.4,399.8 L1743.6,398.0 L1743.9,422.2 L1744.1,420.7 L1744.4,404.7 L1744.6,398.7 L1744.9,418.4 L1745.1,409.9 L1745.4,402.7 L1745.6,405.9 L1745.9,463.1 L1746.1,403.6 L1746.4,457.7 L1746.6,402.4 L1746.9,445.8 L1747.1,417.6 L1747.4,397.4 L1747.6,429.3 L1747.9,397.5 L1748.1,425.3 L1748.4,402.8 L1748.6,400.1 L1748.9,413.9 L1749.1,401.6 L1749.4,420.8 L1749.6,418.9 L1749.9,401.0 L1750.1,397.0 L1750.4,419.4 L1750.6,418.6 L1750.9,397.6 L1751.1,399.9 L1751.4,411.0 L1751.6,404.7 L1751.9,441.9 L1752.1,401.2 L1752.4,427.9 L1752.6,395.3 L1752.9,457.2 L1753.1,397.2 L1753.4,431.4 L1753.6,403.0 L1753.9,429.2 L1754.1,436.0 L1754.4,402.4 L1754.6,426.1 L1754.9,397.7 L1755.1,401.4 L1755.4,435.0 L1755.6,399.4 L1755.9,428.3 L1756.1,435.7 L1756.4,403.3 L1756.6,421.5 L1756.9,406.4 L1757.1,399.5 L1757.4,420.6 L1757.6,396.3 L1757.9,427.1 L1758.1,421.1 L1758.4,405.3 L1758.6,427.7 L1758.9,398.4 L1759.1,424.8 L1759.4,399.1 L1759.6,398.0 L1759.9,426.8 L1760.1,400.2 L1760.4,425.6 L1760.6,420.5 L1760.9,401.9 L1761.1,423.0 L1761.4,401.1 L1761.6,397.3 L1761.9,431.2 L1762.1,401.0 L1762.4,415.6 L1762.6,400.6 L1762.9,424.7 L1763.1,423.1 L1763.4,397.6 L1763.6,439.3 L1763.9,402.5 L1764.1,400.9 L1764.4,423.2 L1764.6,398.0 L1764.9,417.7 L1765.1,402.7 L1765.4,436.5 L1765.6,400.7 L1765.9,437.3 L1766.1,408.2 L1766.4,430.5 L1766.6,426.2 L1766.9,399.6 L1767.1,419.0 L1767.4,400.9 L1767.6,401.8 L1767.9,434.6 L1768.1,408.5 L1768.4,463.1 L1768.6,399.9 L1768.9,423.0 L1769.1,426.0 L1769.4,393.9 L1769.6,400.5 L1769.9,441.4 L1770.1,400.9 L1770.4,421.5 L1770.6,399.4 L1770.9,437.0 L1771.1,401.8 L1771.4,463.1 L1771.6,398.8 L1771.9,427.8 L1772.1,393.8 L1772.4,416.6 L1772.6,444.1 L1772.9,397.7 L1773.1,424.5 L1773.4,399.8 L1773.6,427.3 L1773.9,399.4 L1774.1,423.1 L1774.4,401.3 L1774.6,398.6 L1774.9,420.5 L1775.1,428.7 L1775.4,395.0 L1775.6,432.5 L1775.9,402.6 L1776.1,422.9 L1776.4,402.7 L1776.6,424.0 L1776.9,402.3 L1777.1,432.5 L1777.4,399.8 L1777.6,397.7 L1777.9,435.4 L1778.1,401.2 L1778.4,420.6 L1778.6,430.4 L1778.9,396.9 L1779.1,405.4 L1779.4,420.3 L1779.6,399.7 L1779.9,417.2 L1780.1,429.6 L1780.4,399.8 L1780.6,426.2 L1780.9,394.3 L1781.1,403.4 L1781.4,436.5 L1781.6,402.0 L1781.9,430.9 L1782.1,399.3 L1782.4,416.7 L1782.6,446.4 L1782.9,396.8 L1783.1,442.9 L1783.4,395.9 L1783.6,423.7 L1783.9,402.7 L1784.1,446.7 L1784.4,401.6 L1784.6,436.4 L1784.9,401.4 L1785.1,403.6 L1785.4,433.3 L1785.6,399.1 L1785.9,418.8 L1786.1,448.6 L1786.4,396.1 L1786.6,399.4 L1786.9,421.8 L1787.1,438.8 L1787.4,403.1 L1787.6,397.5 L1787.9,434.7 L1788.1,423.8 L1788.4,396.2 L1788.6,402.3 L1788.9,443.2 L1789.1,402.4 L1789.4,428.1 L1789.6,425.7 L1789.9,400.0 L1790.1,405.7 L1790.4,463.1 L1790.6,421.3 L1790.9,399.7 L1791.1,396.8 L1791.4,429.6 L1791.6,399.6 L1791.9,460.6 L1792.1,437.6 L1792.4,402.9 L1792.6,432.0 L1792.9,400.8 L1793.1,443.3 L1793.4,401.9 L1793.6,396.8 L1793.9,420.5 L1794.1,399.9 L1794.4,427.2 L1794.6,398.8 L1794.9,427.1 L1795.1,400.8 L1795.4,451.8 L1795.6,400.0 L1795.9,424.4 L1796.1,403.8 L1796.4,434.4 L1796.6,417.6 L1796.9,396.5 L1797.1,396.8 L1797.4,443.6 L1797.6,401.4 L1797.9,428.5 L1798.1,420.8 L1798.4,398.4 L1798.6,397.7 L1798.9,443.4 L1799.1,403.9 L1799.4,440.3 L1799.6,399.1 L1799.9,429.3 L1800.1,398.8 L1800.4,437.9 L1800.6,396.4 L1800.9,451.6 L1801.1,460.7 L1801.4,395.7 L1801.6,426.7 L1801.9,395.1 L1802.1,397.4 L1802.4,425.6 L1802.6,428.2 L1802.9,399.4 L1803.1,444.3 L1803.4,398.1 L1803.6,399.2 L1803.9,427.5 L1804.1,449.8 L1804.4,394.5 L1804.6,398.0 L1804.9,434.2 L1805.1,395.8 L1805.4,432.6 L1805.6,399.4 L1805.9,436.3 L1806.1,419.3 L1806.4,395.4 L1806.6,401.3 L1806.9,431.3 L1807.1,403.0 L1807.4,423.4 L1807.6,399.1 L1807.9,445.9 L1808.1,441.2 L1808.4,400.2 L1808.6,424.5 L1808.9,400.6 L1809.1,446.0 L1809.4,397.5 L1809.6,429.1 L1809.9,394.4 L1810.1,420.6 L1810.4,399.1 L1810.6,429.8 L1810.9,398.3 L1811.1,446.2 L1811.4,397.7 L1811.6,431.7 L1811.9,399.5 L1812.1,420.0 L1812.4,398.9 L1812.6,393.3 L1812.9,430.3 L1813.1,431.9 L1813.4,399.6 L1813.6,426.2 L1813.9,399.4 L1814.1,398.8 L1814.4,435.5 L1814.6,402.0 L1814.9,436.1 L1815.1,397.9 L1815.4,432.1 L1815.6,430.5 L1815.9,397.6 L1816.1,403.6 L1816.4,432.1 L1816.6,423.7 L1816.9,400.6 L1817.1,399.1 L1817.4,430.9 L1817.6,397.7 L1817.9,439.9 L1818.1,398.9 L1818.4,429.9 L1818.6,398.6 L1818.9,430.3 L1819.1,434.3 L1819.4,398.8 L1819.6,435.9 L1819.9,397.4 L1820.1,439.8 L1820.4,398.1 L1820.6,432.6 L1820.9,402.1 L1821.1,423.3 L1821.4,402.0 L1821.6,400.3 L1821.9,430.4 L1822.1,398.9 L1822.4,430.2 L1822.6,395.0 L1822.9,439.2 L1823.1,439.1 L1823.4,396.3 L1823.6,463.1 L1823.9,394.8 L1824.1,398.9 L1824.4,448.6 L1824.6,399.7 L1824.9,452.9 L1825.1,395.8 L1825.4,438.3 L1825.6,401.1 L1825.9,438.1 L1826.1,396.4 L1826.4,431.7 L1826.6,400.4 L1826.9,428.1 L1827.1,399.3 L1827.4,425.7 L1827.6,424.5 L1827.9,397.4 L1828.1,444.1 L1828.4,396.5 L1828.6,398.0 L1828.9,440.6 L1829.1,396.7 L1829.4,463.1 L1829.6,447.7 L1829.9,399.7 L1830.1,398.1 L1830.4,443.3 L1830.6,431.4 L1830.9,397.4 L1831.1,396.9 L1831.4,438.7 L1831.6,397.2 L1831.9,432.5 L1832.1,395.7 L1832.4,431.1 L1832.6,434.6 L1832.9,402.7 L1833.1,400.4 L1833.4,436.1 L1833.6,403.5 L1833.9,428.5 L1834.1,438.5 L1834.4,402.4 L1834.6,429.1 L1834.9,395.7 L1835.1,433.6 L1835.4,394.7 L1835.6,396.1 L1835.9,432.4 L1836.1,399.1 L1836.4,437.3 L1836.6,400.4 L1836.9,443.3 L1837.1,429.5 L1837.4,395.8 L1837.6,393.6 L1837.9,436.0 L1838.1,400.8 L1838.4,436.5 L1838.6,444.2 L1838.9,396.6 L1839.1,426.7 L1839.4,398.6 L1839.6,431.1 L1839.9,398.1 L1840.1,436.8 L1840.4,397.3 L1840.6,395.4 L1840.9,444.5 L1841.1,452.1 L1841.4,400.2 L1841.6,446.2 L1841.9,399.1 L1842.1,399.2 L1842.4,444.4 L1842.6,396.6 L1842.9,428.3 L1843.1,398.1 L1843.4,442.6 L1843.6,429.0 L1843.9,398.6 L1844.1,397.2 L1844.4,440.2 L1844.6,436.9 L1844.9,394.3 L1845.1,393.1 L1845.4,449.5 L1845.6,395.6 L1845.9,426.2 L1846.1,395.8 L1846.4,443.6 L1846.6,431.0 L1846.9,395.2 L1847.1,397.5 L1847.4,432.8 L1847.6,446.4 L1847.9,398.9 L1848.1,397.2 L1848.4,443.3 L1848.6,436.8 L1848.9,396.6 L1849.1,397.0 L1849.4,447.6 L1849.6,397.3 L1849.9,424.7 L1850.1,395.5 L1850.4,428.0 L1850.6,433.5 L1850.9,394.3 L1851.1,398.6 L1851.4,424.3 L1851.6,447.6 L1851.9,396.9 L1852.1,397.8 L1852.4,427.3 L1852.6,397.9 L1852.9,446.6 L1853.1,394.0 L1853.4,431.5 L1853.6,398.9 L1853.9,458.8 L1854.1,397.1 L1854.4,426.3 L1854.6,433.8 L1854.9,396.2 L1855.1,392.9 L1855.4,434.0 L1855.6,397.2 L1855.9,422.4 L1856.1,395.6 L1856.4,440.7 L1856.6,447.5 L1856.9,397.1 L1857.1,397.4 L1857.4,434.9 L1857.6,397.2 L1857.9,437.4 L1858.1,437.9 L1858.4,396.3 L1858.6,434.5 L1858.9,398.0 L1859.1,397.6 L1859.4,455.6 L1859.6,400.3 L1859.9,436.2 L1860.1,440.6 L1860.4,396.4 L1860.6,397.0 L1860.9,435.3 L1861.1,397.3 L1861.4,442.1 L1861.6,399.2 L1861.9,463.1 L1862.1,400.1 L1862.4,433.0 L1862.6,447.1 L1862.9,399.6 L1863.1,462.1 L1863.4,395.2 L1863.6,394.1 L1863.9,448.7 L1864.1,398.5 L1864.4,452.9 L1864.6,397.5 L1864.9,426.9 L1865.1,397.2 L1865.4,462.4 L1865.6,395.9 L1865.9,459.9 L1866.1,443.3 L1866.4,395.6 L1866.6,442.3 L1866.9,393.4 L1867.1,429.6 L1867.4,397.5 L1867.6,394.9 L1867.9,432.9 L1868.1,396.3 L1868.4,442.2 L1868.6,397.4 L1868.9,438.2 L1869.1,395.7 L1869.4,453.9 L1869.6,397.4 L1869.9,434.7 L1870.1,395.0 L1870.4,440.0 L1870.6,398.1 L1870.9,433.7 L1871.1,397.0 L1871.4,435.3 L1871.6,431.9 L1871.9,400.4 L1872.1,396.6 L1872.4,459.5 L1872.6,396.7 L1872.9,439.8 L1873.1,396.2 L1873.4,441.0 L1873.6,398.3 L1873.9,453.4 L1874.1,428.6 L1874.4,397.3 L1874.6,433.9 L1874.9,397.1 L1875.1,396.5 L1875.4,433.0 L1875.6,397.5 L1875.9,428.7 L1876.1,433.1 L1876.4,397.3 L1876.6,400.4 L1876.9,444.1 L1877.1,441.0 L1877.4,396.9 L1877.6,432.7 L1877.9,398.5 L1878.1,400.6 L1878.4,447.5 L1878.6,397.9 L1878.9,457.9 L1879.1,432.2 L1879.4,394.3 L1879.6,449.8 L1879.9,397.8 L1880.1,397.0 L1880.4,459.7 L1880.6,440.6 L1880.9,397.2 L1881.1,397.8 L1881.4,433.5 L1881.6,449.5 L1881.9,397.5 L1882.1,396.1 L1882.4,438.6 L1882.6,431.3 L1882.9,397.0 L1883.1,398.4 L1883.4,434.0 L1883.6,397.0 L1883.9,447.2 L1884.0,409.5" fill="none" stroke="#3c5fa0" stroke-width="1"/><path d="M1417.1,383.8 L1417.4,383.8 L1417.6,383.8 L1417.9,383.7 L1418.9,382.6 L1420.6,380.4 L1422.1,378.6 L1423.7,378.0 L1425.2,378.5 L1426.7,379.8 L1428.1,381.6 L1429.6,383.6 L1430.9,385.7 L1432.3,387.7 L1433.6,389.3 L1434.9,390.4 L1436.2,390.9 L1437.5,390.8 L1438.7,389.4 L1439.9,386.9 L1441.1,383.8 L1442.3,380.4 L1443.5,377.2 L1444.6,374.5 L1445.7,372.6 L1446.8,371.6 L1447.9,371.6 L1448.9,372.2 L1450.0,373.4 L1451.0,375.0 L1452.0,377.0 L1453.0,379.3 L1454.0,381.6 L1455.0,384.0 L1455.9,386.3 L1456.9,388.4 L1457.8,390.2 L1458.7,391.7 L1459.6,392.8 L1460.5,393.5 L1461.4,393.9 L1462.3,393.5 L1463.1,392.1 L1464.0,390.5 L1464.8,389.6 L1465.7,390.3 L1466.5,393.3 L1467.3,397.8 L1468.1,402.5 L1468.9,406.1 L1469.7,407.8 L1470.4,407.5 L1471.2,405.7 L1471.9,402.9 L1472.7,399.3 L1473.4,395.3 L1474.2,391.4 L1474.9,387.9 L1475.6,385.1 L1476.3,383.4 L1477.0,382.8 L1477.7,383.3 L1478.4,385.1 L1479.1,387.8 L1479.7,391.1 L1480.4,394.7 L1481.1,398.2 L1481.7,401.3 L1482.3,403.6 L1483.0,405.0 L1483.6,405.4 L1484.3,404.5 L1484.9,402.4 L1485.5,399.5 L1486.1,396.2 L1486.7,393.1 L1487.3,390.5 L1487.9,389.0 L1488.5,388.5 L1489.1,389.2 L1489.7,390.6 L1490.2,392.7 L1490.8,395.0 L1491.4,397.4 L1491.9,399.3 L1492.5,400.7 L1493.0,401.3 L1493.6,401.1 L1494.1,400.0 L1494.7,398.2 L1495.2,395.9 L1495.7,393.4 L1496.2,391.0 L1496.8,388.9 L1497.3,387.5 L1497.8,386.7 L1498.3,386.8 L1498.8,387.8 L1499.3,389.5 L1499.8,391.7 L1500.3,394.0 L1500.8,396.1 L1501.3,397.8 L1501.8,398.7 L1502.3,398.9 L1502.7,398.2 L1503.2,396.8 L1503.7,394.9 L1504.1,392.6 L1504.6,390.2 L1505.1,387.9 L1505.5,385.8 L1506.0,384.2 L1506.4,383.1 L1506.9,382.8 L1507.3,383.5 L1507.8,385.5 L1508.2,388.3 L1508.6,390.9 L1509.1,392.8 L1509.5,393.3 L1509.9,394.3 L1510.4,396.7 L1510.8,400.4 L1511.2,404.9 L1511.6,410.0 L1512.0,415.3 L1512.5,420.2 L1512.9,424.6 L1513.3,428.1 L1513.7,430.3 L1514.1,407.7 L1514.8,405.1 L1517.1,406.0 L1519.3,426.4 L1521.5,402.0 L1523.5,403.1 L1525.6,410.0 L1527.5,408.9 L1529.4,430.6 L1531.3,413.5 L1533.1,405.6 L1534.8,405.1 L1536.5,407.8 L1538.2,441.3 L1539.8,415.3 L1541.4,400.1 L1543.0,413.3 L1544.5,408.9 L1546.0,415.4 L1547.4,406.7 L1548.9,403.3 L1550.3,411.8 L1551.6,417.4 L1553.0,413.0 L1554.3,437.9 L1555.6,412.3 L1556.8,404.7 L1558.1,412.7 L1559.3,406.5 L1560.5,400.6 L1561.7,405.8 L1562.8,428.9 L1564.0,411.8 L1565.1,432.6 L1566.2,416.2 L1567.2,415.7 L1568.3,402.4 L1569.4,412.2 L1570.4,409.1 L1571.4,419.1 L1572.4,405.1 L1573.4,425.1 L1574.4,420.1 L1575.3,407.9 L1576.3,412.3 L1577.2,408.8 L1578.1,412.7 L1579.0,420.9 L1579.9,406.7 L1580.8,416.8 L1581.7,399.8 L1582.5,411.0 L1583.4,408.1 L1584.2,410.2 L1585.1,422.8 L1585.9,425.7 L1586.7,404.4 L1587.5,406.1 L1588.3,407.6 L1589.1,419.2 L1589.8,417.3 L1590.6,413.2 L1591.4,397.0 L1592.1,400.6 L1592.8,409.7 L1593.6,409.9 L1594.3,411.1 L1595.0,411.6 L1595.7,401.4 L1596.4,409.5 L1597.1,420.2 L1597.8,405.3 L1598.5,411.8 L1599.2,405.4 L1599.8,407.1 L1600.5,411.8 L1601.1,413.5 L1601.8,405.5 L1602.4,413.2 L1603.1,407.3 L1603.7,431.5 L1604.3,414.3 L1604.9,410.1 L1605.5,407.3 L1606.1,412.2 L1606.7,406.0 L1607.3,412.2 L1607.9,403.7 L1608.5,400.4 L1609.1,409.3 L1609.7,416.9 L1610.2,402.0 L1610.8,406.7 L1611.4,406.1 L1611.9,405.3 L1612.5,407.1 L1613.0,407.7 L1613.6,407.5 L1614.1,427.4 L1614.6,410.6 L1615.2,415.4 L1615.7,407.6 L1616.2,410.1 L1616.7,423.7 L1617.3,413.0 L1617.8,416.2 L1618.3,410.2 L1618.8,407.9 L1619.3,414.9 L1619.8,448.9 L1620.3,413.9 L1620.7,419.5 L1621.2,411.9 L1621.7,407.9 L1622.2,408.9 L1622.7,408.4 L1623.1,404.5 L1623.6,404.6 L1624.1,412.0 L1624.5,408.1 L1625.0,401.0 L1625.4,407.9 L1625.9,402.9 L1626.3,420.0 L1626.8,407.8 L1627.2,407.6 L1627.7,411.9 L1628.1,415.4 L1628.5,400.2 L1629.0,400.7 L1629.4,408.1 L1629.8,399.6 L1630.3,411.2 L1630.7,399.3 L1631.1,413.9 L1631.5,419.5 L1631.9,410.7 L1632.3,405.1 L1632.8,432.9 L1633.2,414.3 L1633.6,405.1 L1634.0,414.4 L1634.4,398.7 L1634.8,408.0 L1635.2,407.4 L1635.5,405.8 L1635.9,405.5 L1636.3,409.2 L1636.7,413.7 L1637.1,410.4 L1637.5,405.7 L1637.8,427.1 L1638.2,410.5 L1638.6,402.9 L1639.0,432.7 L1639.3,411.0 L1639.7,406.3 L1640.1,410.1 L1640.4,411.9 L1640.8,403.7 L1641.2,413.8 L1641.5,423.7 L1641.9,406.5 L1642.2,414.1 L1642.6,402.3 L1642.9,410.2 L1643.3,409.8 L1643.6,418.4 L1644.0,404.5 L1644.3,415.7 L1644.7,404.8 L1645.0,429.7 L1645.3,399.4 L1645.7,406.4 L1646.0,403.9 L1646.4,407.3 L1646.7,406.2 L1647.0,414.0 L1647.3,418.6 L1647.7,411.4 L1648.0,407.7 L1648.3,420.8 L1648.6,423.4 L1649.0,408.5 L1649.3,403.0 L1649.6,411.1 L1649.9,408.1 L1650.2,401.3 L1650.6,425.1 L1650.9,418.7 L1651.2,409.7 L1651.5,408.9 L1651.8,414.9 L1652.1,415.1 L1652.4,409.5 L1652.7,415.7 L1653.0,405.8 L1653.3,406.2 L1653.6,422.5 L1653.9,422.1 L1654.2,408.2 L1654.5,403.0 L1654.8,413.4 L1655.1,429.4 L1655.4,425.6 L1655.7,400.7 L1656.0,416.1 L1656.3,399.6 L1656.5,404.2 L1656.8,407.7 L1657.1,415.8 L1657.4,407.9 L1657.7,412.1 L1658.0,404.0 L1658.2,404.5 L1658.5,403.5 L1658.8,408.2 L1659.1,405.7 L1659.3,421.9 L1659.6,416.9 L1659.9,402.6 L1660.2,405.3 L1660.4,410.4 L1660.7,407.8 L1661.0,410.5 L1661.2,418.8 L1661.5,412.3 L1661.8,402.8 L1662.0,415.3 L1662.3,418.6 L1662.6,415.9 L1662.8,429.3 L1663.1,412.5 L1663.3,406.6 L1663.6,410.4 L1663.9,420.8 L1664.1,414.4 L1664.4,405.9 L1664.6,417.1 L1664.9,416.1 L1665.1,411.8 L1665.4,412.6 L1665.6,410.5 L1665.9,405.8 L1666.1,418.6 L1666.4,406.9 L1666.6,407.3 L1666.9,399.2 L1667.1,425.3 L1667.4,411.7 L1667.6,409.0 L1667.9,409.6 L1668.1,422.5 L1668.3,402.2 L1668.6,401.1 L1668.8,415.8 L1669.1,412.0 L1669.4,415.4 L1669.6,414.1 L1669.9,428.6 L1670.2,411.9 L1670.5,423.3 L1670.7,421.6 L1670.9,401.5 L1671.2,403.3 L1671.4,433.7 L1671.6,410.2 L1671.9,412.4 L1672.1,405.9 L1672.4,414.1 L1672.6,403.9 L1672.9,423.1 L1673.2,404.1 L1673.4,420.4 L1673.7,415.8 L1673.9,411.4 L1674.1,415.8 L1674.4,406.4 L1674.6,417.4 L1674.9,411.5 L1675.2,405.4 L1675.4,402.2 L1675.6,405.3 L1675.8,411.1 L1676.1,407.2 L1676.4,405.8 L1676.6,412.4 L1676.9,425.2 L1677.1,415.4 L1677.4,414.7 L1677.6,405.2 L1677.9,431.1 L1678.1,403.1 L1678.4,407.9 L1678.6,413.6 L1678.9,408.4 L1679.2,405.9 L1679.4,409.4 L1679.6,406.2 L1679.8,400.8 L1680.1,421.3 L1680.4,401.6 L1680.6,411.3 L1680.9,405.1 L1681.1,408.2 L1681.4,396.8 L1681.6,336.9 L1681.9,396.8 L1682.1,415.1 L1682.4,408.8 L1682.6,413.1 L1682.9,398.3 L1683.1,403.3 L1683.4,412.0 L1683.6,403.7 L1683.9,429.3 L1684.1,402.0 L1684.4,404.5 L1684.6,406.6 L1684.9,412.6 L1685.1,409.8 L1685.4,418.2 L1685.6,414.2 L1685.9,410.5 L1686.1,412.1 L1686.4,404.0 L1686.6,412.9 L1686.9,406.7 L1687.1,414.9 L1687.4,423.7 L1687.6,408.5 L1687.9,401.0 L1688.1,406.0 L1688.4,399.8 L1688.6,405.6 L1688.9,417.4 L1689.1,398.8 L1689.4,412.3 L1689.6,412.3 L1689.9,401.6 L1690.1,412.4 L1690.4,406.5 L1690.6,402.3 L1690.9,414.4 L1691.1,419.1 L1691.4,405.0 L1691.6,426.2 L1691.9,403.7 L1692.1,401.8 L1692.4,415.1 L1692.6,399.2 L1692.9,431.3 L1693.1,418.4 L1693.4,406.5 L1693.6,426.4 L1693.9,403.6 L1694.1,416.8 L1694.4,403.4 L1694.6,422.9 L1694.9,419.7 L1695.1,422.7 L1695.4,404.2 L1695.6,401.1 L1695.9,426.2 L1696.1,406.7 L1696.4,424.3 L1696.6,409.2 L1696.9,421.9 L1697.1,410.2 L1697.4,400.2 L1697.6,414.8 L1697.9,405.6 L1698.1,412.6 L1698.4,404.5 L1698.6,403.2 L1698.9,428.1 L1699.1,425.4 L1699.4,397.7 L1699.6,423.8 L1699.9,404.0 L1700.1,405.0 L1700.4,436.0 L1700.6,409.8 L1700.9,424.4 L1701.1,399.7 L1701.4,412.4 L1701.6,401.7 L1701.9,433.5 L1702.1,403.7 L1702.4,412.8 L1702.6,420.3 L1702.9,396.9 L1703.1,411.8 L1703.4,406.9 L1703.6,425.5 L1703.9,401.8 L1704.1,403.6 L1704.4,416.7 L1704.6,400.4 L1704.9,418.7 L1705.1,398.4 L1705.4,424.1 L1705.6,407.4 L1705.9,416.6 L1706.1,415.9 L1706.4,405.6 L1706.6,441.4 L1706.9,408.0 L1707.1,430.4 L1707.4,407.1 L1707.6,399.8 L1707.9,414.8 L1708.1,400.6 L1708.4,411.2 L1708.6,400.9 L1708.9,421.1 L1709.1,427.3 L1709.4,398.8 L1709.6,415.6 L1709.9,403.5 L1710.1,401.7 L1710.4,421.2 L1710.6,440.5 L1710.9,402.5 L1711.1,408.4 L1711.4,399.8 L1711.6,426.9 L1711.9,401.9 L1712.1,426.3 L1712.4,403.2 L1712.6,401.6 L1712.9,420.3 L1713.1,418.1 L1713.4,407.2 L1713.6,421.2 L1713.9,406.5 L1714.1,410.3 L1714.4,401.6 L1714.6,416.2 L1714.9,401.9 L1715.1,399.4 L1715.4,423.5 L1715.6,428.9 L1715.9,405.8 L1716.1,424.1 L1716.4,402.4 L1716.6,400.0 L1716.9,423.5 L1717.1,423.2 L1717.4,400.4 L1717.6,396.9 L1717.9,411.6 L1718.1,412.9 L1718.4,400.9 L1718.6,421.3 L1718.9,400.1 L1719.1,405.0 L1719.4,421.6 L1719.6,406.3 L1719.9,424.7 L1720.1,416.6 L1720.4,428.8 L1720.6,422.4 L1720.9,402.3 L1721.1,412.0 L1721.4,398.0 L1721.6,399.9 L1721.9,412.0 L1722.1,404.2 L1722.4,410.4 L1722.6,422.6 L1722.9,398.1 L1723.1,417.1 L1723.4,407.1 L1723.6,405.3 L1723.9,411.7 L1724.1,403.1 L1724.4,428.4 L1724.6,411.2 L1724.9,404.0 L1725.1,436.1 L1725.4,397.0 L1725.6,449.6 L1725.9,412.8 L1726.1,399.3 L1726.4,412.5 L1726.6,402.3 L1726.9,407.0 L1727.1,402.0 L1727.4,419.0 L1727.6,403.1 L1727.9,424.6 L1728.1,423.8 L1728.4,400.6 L1728.6,428.3 L1728.9,400.8 L1729.1,403.5 L1729.4,426.9 L1729.6,414.6 L1729.9,404.5 L1730.1,407.4 L1730.4,411.6 L1730.6,426.9 L1730.9,400.3 L1731.1,424.6 L1731.4,399.7 L1731.6,428.5 L1731.9,403.5 L1732.1,402.9 L1732.4,412.0 L1732.6,423.7 L1732.9,401.2 L1733.1,432.7 L1733.4,406.3 L1733.6,402.7 L1733.9,423.6 L1734.1,412.8 L1734.4,397.4 L1734.6,400.2 L1734.9,432.5 L1735.1,404.5 L1735.4,414.2 L1735.6,430.6 L1735.9,396.2 L1736.1,433.2 L1736.4,394.9 L1736.6,400.6 L1736.9,441.9 L1737.1,400.9 L1737.4,416.6 L1737.6,423.1 L1737.9,398.9 L1738.1,404.2 L1738.4,446.8 L1738.6,423.2 L1738.9,406.1 L1739.1,407.6 L1739.4,426.5 L1739.6,415.3 L1739.9,407.3 L1740.1,400.2 L1740.4,433.8 L1740.6,417.8 L1740.9,401.4 L1741.1,404.6 L1741.4,414.5 L1741.6,400.3 L1741.9,417.8 L1742.1,411.7 L1742.4,396.3 L1742.6,426.1 L1742.9,404.2 L1743.1,398.7 L1743.4,414.5 L1743.6,405.9 L1743.9,431.6 L1744.1,400.1 L1744.4,417.4 L1744.6,463.1 L1744.9,404.7 L1745.1,424.4 L1745.4,399.3 L1745.6,451.9 L1745.9,396.1 L1746.1,399.3 L1746.4,417.4 L1746.6,394.6 L1746.9,434.6 L1747.1,427.9 L1747.4,401.5 L1747.6,431.1 L1747.9,399.8 L1748.1,422.5 L1748.4,397.0 L1748.6,399.8 L1748.9,427.4 L1749.1,399.2 L1749.4,434.3 L1749.6,424.0 L1749.9,399.0 L1750.1,401.6 L1750.4,431.2 L1750.6,399.2 L1750.9,421.3 L1751.1,436.9 L1751.4,397.1 L1751.6,422.4 L1751.9,405.3 L1752.1,397.1 L1752.4,427.3 L1752.6,404.8 L1752.9,423.4 L1753.1,403.5 L1753.4,455.3 L1753.6,396.9 L1753.9,418.0 L1754.1,433.1 L1754.4,403.5 L1754.6,414.1 L1754.9,399.7 L1755.1,396.2 L1755.4,419.7 L1755.6,398.6 L1755.9,421.8 L1756.1,459.5 L1756.4,404.1 L1756.6,424.1 L1756.9,401.2 L1757.1,396.2 L1757.4,420.4 L1757.6,419.1 L1757.9,397.2 L1758.1,406.6 L1758.4,422.3 L1758.6,399.9 L1758.9,409.5 L1759.1,448.7 L1759.4,401.3 L1759.6,392.4 L1759.9,427.8 L1760.1,422.2 L1760.4,401.8 L1760.6,418.9 L1760.9,404.1 L1761.1,400.1 L1761.4,416.4 L1761.6,419.4 L1761.9,401.7 L1762.1,432.9 L1762.4,405.3 L1762.6,394.7 L1762.9,426.2 L1763.1,428.9 L1763.4,395.8 L1763.6,421.9 L1763.9,403.8 L1764.1,414.3 L1764.4,399.5 L1764.6,420.1 L1764.9,401.3 L1765.1,401.6 L1765.4,417.5 L1765.6,423.7 L1765.9,400.5 L1766.1,433.3 L1766.4,402.0 L1766.6,398.9 L1766.9,425.4 L1767.1,423.0 L1767.4,400.1 L1767.6,400.1 L1767.9,434.4 L1768.1,394.9 L1768.4,419.4 L1768.6,403.5 L1768.9,420.4 L1769.1,427.8 L1769.4,397.7 L1769.6,400.9 L1769.9,428.0 L1770.1,446.0 L1770.4,399.1 L1770.6,423.8 L1770.9,397.3 L1771.1,418.8 L1771.4,406.0 L1771.6,440.3 L1771.9,403.6 L1772.1,432.9 L1772.4,403.3 L1772.6,414.7 L1772.9,402.0 L1773.1,403.9 L1773.4,433.7 L1773.6,397.9 L1773.9,416.8 L1774.1,396.3 L1774.4,435.6 L1774.6,397.6 L1774.9,429.2 L1775.1,430.4 L1775.4,400.5 L1775.6,397.9 L1775.9,434.6 L1776.1,401.8 L1776.4,428.1 L1776.6,428.1 L1776.9,409.5 L1777.1,421.1 L1777.4,396.4 L1777.6,401.8 L1777.9,423.4 L1778.1,400.9 L1778.4,433.0 L1778.6,398.3 L1778.9,446.3 L1779.1,398.8 L1779.4,420.2 L1779.6,431.1 L1779.9,403.6 L1780.1,428.8 L1780.4,395.0 L1780.6,422.9 L1780.9,397.3 L1781.1,423.4 L1781.4,397.7 L1781.6,404.2 L1781.9,431.5 L1782.1,442.0 L1782.4,398.2 L1782.6,434.3 L1782.9,397.0 L1783.1,397.0 L1783.4,420.5 L1783.6,398.1 L1783.9,424.6 L1784.1,434.8 L1784.4,396.8 L1784.6,399.2 L1784.9,435.2 L1785.1,423.8 L1785.4,400.8 L1785.6,427.5 L1785.9,403.5 L1786.1,421.3 L1786.4,396.1 L1786.6,396.6 L1786.9,424.8 L1787.1,422.6 L1787.4,396.8 L1787.6,423.2 L1787.9,399.7 L1788.1,397.3 L1788.4,434.6 L1788.6,396.3 L1788.9,424.2 L1789.1,434.9 L1789.4,400.3 L1789.6,437.4 L1789.9,398.7 L1790.1,401.3 L1790.4,444.7 L1790.6,398.0 L1790.9,424.3 L1791.1,438.0 L1791.4,397.9 L1791.6,424.8 L1791.9,397.2 L1792.1,396.1 L1792.4,425.4 L1792.6,426.8 L1792.9,396.4 L1793.1,404.1 L1793.4,426.8 L1793.6,396.2 L1793.9,439.1 L1794.1,398.1 L1794.4,433.1 L1794.6,397.5 L1794.9,429.6 L1795.1,396.4 L1795.4,440.6 L1795.6,399.1 L1795.9,430.2 L1796.1,463.0 L1796.4,396.0 L1796.6,427.7 L1796.9,399.6 L1797.1,400.4 L1797.4,420.9 L1797.6,437.8 L1797.9,398.7 L1798.1,448.9 L1798.4,400.7 L1798.6,398.1 L1798.9,423.5 L1799.1,397.8 L1799.4,428.8 L1799.6,425.8 L1799.9,395.0 L1800.1,399.3 L1800.4,426.3 L1800.6,422.6 L1800.9,401.1 L1801.1,403.9 L1801.4,435.8 L1801.6,401.1 L1801.9,451.7 L1802.1,395.5 L1802.4,446.8 L1802.6,443.5 L1802.9,395.5 L1803.1,432.4 L1803.4,400.0 L1803.6,394.0 L1803.9,439.4 L1804.1,397.7 L1804.4,437.1 L1804.6,429.6 L1804.9,397.4 L1805.1,404.1 L1805.4,438.1 L1805.6,396.2 L1805.9,434.1 L1806.1,444.5 L1806.4,400.4 L1806.6,438.3 L1806.9,395.0 L1807.1,432.5 L1807.4,401.7 L1807.6,460.0 L1807.9,400.4 L1808.1,401.2 L1808.4,453.6 L1808.6,397.1 L1808.9,422.0 L1809.1,419.7 L1809.4,399.2 L1809.6,398.0 L1809.9,443.8 L1810.1,431.0 L1810.4,398.7 L1810.6,436.2 L1810.9,393.5 L1811.1,401.9 L1811.4,427.4 L1811.6,436.5 L1811.9,396.2 L1812.1,397.7 L1812.4,429.6 L1812.6,399.4 L1812.9,434.2 L1813.1,401.2 L1813.4,429.9 L1813.6,403.3 L1813.9,432.0 L1814.1,395.6 L1814.4,439.9 L1814.6,436.1 L1814.9,396.2 L1815.1,400.3 L1815.4,431.9 L1815.6,442.0 L1815.9,402.5 L1816.1,395.9 L1816.4,430.9 L1816.6,397.6 L1816.9,427.0 L1817.1,396.5 L1817.4,432.8 L1817.6,399.9 L1817.9,424.0 L1818.1,404.6 L1818.4,429.3 L1818.6,422.2 L1818.9,395.3 L1819.1,397.7 L1819.4,439.4 L1819.6,396.3 L1819.9,426.3 L1820.1,459.1 L1820.4,397.9 L1820.6,400.5 L1820.9,451.1 L1821.1,395.9 L1821.4,437.4 L1821.6,400.8 L1821.9,431.7 L1822.1,425.0 L1822.4,395.4 L1822.6,399.2 L1822.9,424.1 L1823.1,440.9 L1823.4,400.5 L1823.6,422.2 L1823.9,397.5 L1824.1,423.0 L1824.4,396.6 L1824.6,430.6 L1824.9,396.9 L1825.1,398.7 L1825.4,422.9 L1825.6,400.4 L1825.9,436.3 L1826.1,399.7 L1826.4,441.8 L1826.6,396.8 L1826.9,435.0 L1827.1,400.5 L1827.4,436.4 L1827.6,396.6 L1827.9,429.8 L1828.1,449.5 L1828.4,394.9 L1828.6,437.7 L1828.9,398.8 L1829.1,434.6 L1829.4,397.3 L1829.6,395.3 L1829.9,439.8 L1830.1,463.1 L1830.4,395.1 L1830.6,400.4 L1830.9,426.0 L1831.1,395.8 L1831.4,437.5 L1831.6,438.2 L1831.9,397.7 L1832.1,398.4 L1832.4,433.3 L1832.6,428.8 L1832.9,396.8 L1833.1,396.8 L1833.4,443.3 L1833.6,399.6 L1833.9,435.2 L1834.1,428.4 L1834.4,395.2 L1834.6,398.8 L1834.9,435.0 L1835.1,433.2 L1835.4,399.0 L1835.6,399.1 L1835.9,438.5 L1836.1,396.8 L1836.4,436.3 L1836.6,396.1 L1836.9,427.6 L1837.1,436.5 L1837.4,404.0 L1837.6,435.4 L1837.9,397.2 L1838.1,395.7 L1838.4,436.6 L1838.6,398.5 L1838.9,441.9 L1839.1,397.2 L1839.4,436.4 L1839.6,459.0 L1839.9,397.0 L1840.1,399.0 L1840.4,455.1 L1840.6,397.7 L1840.9,420.5 L1841.1,429.9 L1841.4,393.2 L1841.6,403.1 L1841.9,430.0 L1842.1,432.5 L1842.4,400.4 L1842.6,451.9 L1842.9,400.5 L1843.1,425.8 L1843.4,399.6 L1843.6,437.5 L1843.9,396.8 L1844.1,397.6 L1844.4,436.5 L1844.6,400.8 L1844.9,432.5 L1845.1,396.9 L1845.4,432.4 L1845.6,397.1 L1845.9,427.4 L1846.1,400.8 L1846.4,423.7 L1846.6,431.7 L1846.9,397.5 L1847.1,397.0 L1847.4,440.3 L1847.6,396.5 L1847.9,442.1 L1848.1,447.5 L1848.4,398.2 L1848.6,445.9 L1848.9,396.9 L1849.1,396.6 L1849.4,428.4 L1849.6,428.6 L1849.9,396.7 L1850.1,394.0 L1850.4,433.0 L1850.6,400.3 L1850.9,443.8 L1851.1,433.7 L1851.4,396.6 L1851.6,427.7 L1851.9,398.2 L1852.1,399.9 L1852.4,453.3 L1852.6,397.4 L1852.9,446.9 L1853.1,426.8 L1853.4,394.4 L1853.6,396.4 L1853.9,418.5 L1854.1,434.1 L1854.4,395.6 L1854.6,398.0 L1854.9,437.1 L1855.1,431.6 L1855.4,397.5 L1855.6,441.6 L1855.9,397.5 L1856.1,398.3 L1856.4,441.7 L1856.6,397.2 L1856.9,443.0 L1857.1,395.2 L1857.4,439.7 L1857.6,397.1 L1857.9,451.3 L1858.1,397.3 L1858.4,463.1 L1858.6,394.7 L1858.9,441.0 L1859.1,433.3 L1859.4,395.0 L1859.6,428.6 L1859.9,398.1 L1860.1,398.1 L1860.4,431.5 L1860.6,396.1 L1860.9,425.7 L1861.1,398.2 L1861.4,436.6 L1861.6,428.7 L1861.9,396.0 L1862.1,397.8 L1862.4,463.1 L1862.6,398.1 L1862.9,433.1 L1863.1,398.3 L1863.4,442.6 L1863.6,437.8 L1863.9,395.1 L1864.1,399.3 L1864.4,450.3 L1864.6,426.4 L1864.9,397.9 L1865.1,395.8 L1865.4,423.8 L1865.6,397.1 L1865.9,426.2 L1866.1,444.1 L1866.4,397.9 L1866.6,432.4 L1866.9,394.7 L1867.1,396.9 L1867.4,432.7 L1867.6,394.6 L1867.9,434.4 L1868.1,398.0 L1868.4,463.1 L1868.6,395.0 L1868.9,424.3 L1869.1,396.8 L1869.4,457.7 L1869.6,398.1 L1869.9,433.2 L1870.1,451.6 L1870.4,396.7 L1870.6,395.4 L1870.9,438.3 L1871.1,430.0 L1871.4,397.2 L1871.6,395.3 L1871.9,449.4 L1872.1,398.1 L1872.4,443.2 L1872.6,396.1 L1872.9,435.8 L1873.1,392.7 L1873.4,448.8 L1873.6,463.1 L1873.9,397.0 L1874.1,457.4 L1874.4,392.9 L1874.6,396.6 L1874.9,435.1 L1875.1,397.7 L1875.4,438.4 L1875.6,438.5 L1875.9,396.2 L1876.1,432.6 L1876.4,396.9 L1876.6,436.4 L1876.9,397.7 L1877.1,448.2 L1877.4,395.5 L1877.6,431.3 L1877.9,399.3 L1878.1,432.0 L1878.4,397.3 L1878.6,397.9 L1878.9,463.1 L1879.1,443.7 L1879.4,394.1 L1879.6,396.8 L1879.9,443.0 L1880.1,395.9 L1880.4,437.7 L1880.6,433.1 L1880.9,398.5 L1881.1,398.0 L1881.4,434.7 L1881.6,396.9 L1881.9,461.9 L1882.1,399.8 L1882.4,436.5 L1882.6,397.4 L1882.9,429.4 L1883.1,443.0 L1883.4,397.4 L1883.6,463.1 L1883.9,397.7 L1884.0,402.7" fill="none" stroke="#c23a4c" stroke-width="1"/><rect x="1417" y="174" width="467" height="288" fill="none" stroke="#5a5a5a" stroke-width="1.3"/></svg><div style="left:650px;width:2000px;text-align:center;top:161.49px;font-size:11.7px;line-height:11.7px;font-weight:400;color:#111;white-space:pre;">FFT</div><div style="left:413px;width:1000px;text-align:right;top:434.50px;font-size:11.5px;line-height:11.5px;font-weight:400;color:#111;white-space:pre;">-180</div><div style="left:413px;width:1000px;text-align:right;top:405.64px;font-size:11.5px;line-height:11.5px;font-weight:400;color:#111;white-space:pre;">-160</div><div style="left:413px;width:1000px;text-align:right;top:376.78px;font-size:11.5px;line-height:11.5px;font-weight:400;color:#111;white-space:pre;">-140</div><div style="left:413px;width:1000px;text-align:right;top:347.92px;font-size:11.5px;line-height:11.5px;font-weight:400;color:#111;white-space:pre;">-120</div><div style="left:413px;width:1000px;text-align:right;top:319.06px;font-size:11.5px;line-height:11.5px;font-weight:400;color:#111;white-space:pre;">-100</div><div style="left:413px;width:1000px;text-align:right;top:290.20px;font-size:11.5px;line-height:11.5px;font-weight:400;color:#111;white-space:pre;">-80</div><div style="left:413px;width:1000px;text-align:right;top:261.34px;font-size:11.5px;line-height:11.5px;font-weight:400;color:#111;white-space:pre;">-60</div><div style="left:413px;width:1000px;text-align:right;top:232.48px;font-size:11.5px;line-height:11.5px;font-weight:400;color:#111;white-space:pre;">-40</div><div style="left:413px;width:1000px;text-align:right;top:203.62px;font-size:11.5px;line-height:11.5px;font-weight:400;color:#111;white-space:pre;">-20</div><div style="left:413px;width:1000px;text-align:right;top:174.76px;font-size:11.5px;line-height:11.5px;font-weight:400;color:#111;white-space:pre;">0</div><div style="left:417.0px;width:2000px;text-align:center;top:467.26px;font-size:11.5px;line-height:11.5px;font-weight:400;color:#111;white-space:pre;">20</div><div style="left:444.4121262971978px;width:2000px;text-align:center;top:467.26px;font-size:11.5px;line-height:11.5px;font-weight:400;color:#111;white-space:pre;">30</div><div style="left:478.947321149976px;width:2000px;text-align:center;top:467.26px;font-size:11.5px;line-height:11.5px;font-weight:400;color:#111;white-space:pre;">50</div><div style="left:525.8086605749882px;width:2000px;text-align:center;top:467.26px;font-size:11.5px;line-height:11.5px;font-weight:400;color:#111;white-space:pre;">100</div><div style="left:572.6700000000001px;width:2000px;text-align:center;top:467.26px;font-size:11.5px;line-height:11.5px;font-weight:400;color:#111;white-space:pre;">200</div><div style="left:600.0821262971979px;width:2000px;text-align:center;top:467.26px;font-size:11.5px;line-height:11.5px;font-weight:400;color:#111;white-space:pre;">300</div><div style="left:634.6173211499761px;width:2000px;text-align:center;top:467.26px;font-size:11.5px;line-height:11.5px;font-weight:400;color:#111;white-space:pre;">500</div><div style="left:681.478660574988px;width:2000px;text-align:center;top:467.26px;font-size:11.5px;line-height:11.5px;font-weight:400;color:#111;white-space:pre;">1k</div><div style="left:728.3399999999999px;width:2000px;text-align:center;top:467.26px;font-size:11.5px;line-height:11.5px;font-weight:400;color:#111;white-space:pre;">2k</div><div style="left:755.752126297198px;width:2000px;text-align:center;top:467.26px;font-size:11.5px;line-height:11.5px;font-weight:400;color:#111;white-space:pre;">3k</div><div style="left:790.2873211499759px;width:2000px;text-align:center;top:467.26px;font-size:11.5px;line-height:11.5px;font-weight:400;color:#111;white-space:pre;">5k</div><div style="left:837.1486605749881px;width:2000px;text-align:center;top:467.26px;font-size:11.5px;line-height:11.5px;font-weight:400;color:#111;white-space:pre;">10k</div><div style="left:884.01px;width:2000px;text-align:center;top:467.26px;font-size:11.5px;line-height:11.5px;font-weight:400;color:#111;white-space:pre;">20k</div><div style="left:650px;width:2000px;text-align:center;top:479.34px;font-size:11.4px;line-height:11.4px;font-weight:400;color:#111;white-space:pre;">Frequency (Hz)</div><div style="left:1279px;top:311px;width:200px;height:12px;font-size:11.5px;line-height:12px;text-align:center;transform:rotate(-90deg);color:#111;white-space:pre;">Level (dBFS)</div>
</body></html>
